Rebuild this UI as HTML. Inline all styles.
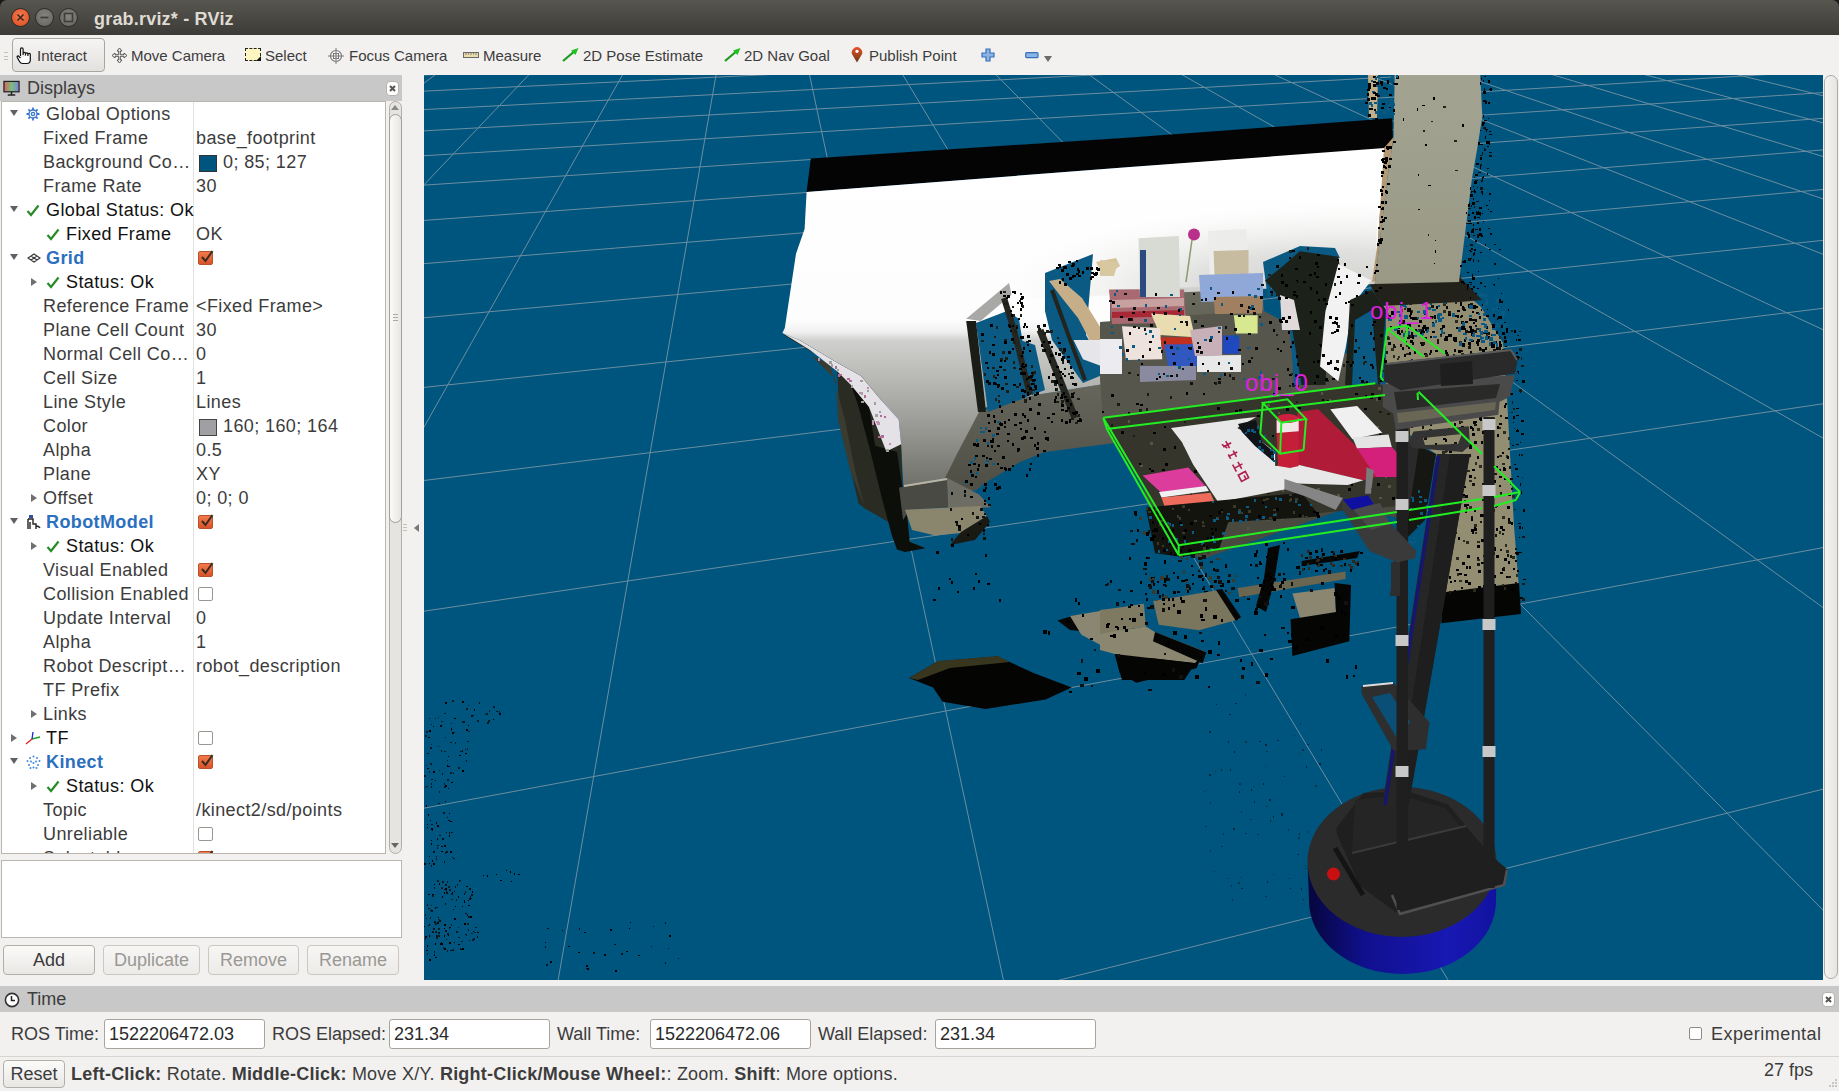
<!DOCTYPE html>
<html><head><meta charset="utf-8">
<style>
*{margin:0;padding:0;box-sizing:border-box}
html,body{width:1839px;height:1091px;overflow:hidden;background:#f2f1f0;font-family:"Liberation Sans",sans-serif;color:#3c3c3c}
.a{position:absolute}
#title{left:0;top:0;width:1839px;height:35px;background:linear-gradient(#57564f,#3c3b37);border-radius:7px 7px 0 0}
#title .t{left:94px;top:9px;font-size:18px;font-weight:bold;color:#dfdbd2;letter-spacing:0.2px;white-space:nowrap}
.wb{width:19px;height:19px;border-radius:50%;top:8px}
#tb{left:0;top:35px;width:1839px;height:40px;background:#f2f1f0}
.ti{font-size:15px;top:12px;white-space:nowrap;color:#3c3c3c}
#dockhdr{left:0;top:75px;width:402px;height:26px;background:#c8c8c8}
#tree{left:1px;top:101px;width:385px;height:753px;background:#fff;border:1px solid #b9b6b0;border-right:1px solid #b9b6b0;overflow:hidden}
.r{position:absolute;left:0;width:385px;height:24px;font-size:18px;line-height:24px;white-space:nowrap;letter-spacing:0.4px}
.r .l{position:absolute;left:41px}
.r .v{position:absolute;left:194px}
.r .l2{position:absolute;left:64px}
.bb{font-weight:bold;color:#2b6fc0}
.k{color:#111}
.ck{position:absolute;color:#2a8a2a;font-size:17px}
.cb{position:absolute;left:196px;top:5px;width:15px;height:14px;border:1px solid #9a9690;border-radius:2px;background:#fff}
.cb.on{background:linear-gradient(#f07a4a,#d9542a);border-color:#b9502c}
.exd{position:absolute;width:0;height:0;border-left:4px solid transparent;border-right:4px solid transparent;border-top:6px solid #606060;top:8px}
.exr{position:absolute;width:0;height:0;border-top:4px solid transparent;border-bottom:4px solid transparent;border-left:6px solid #707070;top:8px}
.sw{position:absolute;left:197px;top:5px;width:18px;height:17px;border:1px solid #333}
#coldiv{left:191px;top:0;width:1px;height:753px;background:#e4e2de}
#sb{left:389px;top:101px;width:13px;height:753px;border:1px solid #b2aea8;border-radius:7px;background:#e6e4e0}
#sbh{left:389px;top:114px;width:13px;height:409px;border:1px solid #a29e98;border-radius:7px;background:linear-gradient(90deg,#fbfbfa,#e8e6e3)}
#desc{left:1px;top:860px;width:401px;height:78px;background:#fff;border:1px solid #b9b6b0}
.btn{position:absolute;height:30px;border:1px solid #b3afa8;border-radius:4px;background:linear-gradient(#fbfbfa,#e9e7e4);font-size:18px;text-align:center;line-height:28px;color:#3c3c3c}
.btn.dis{color:#9a9894;border-color:#cbc8c2;background:linear-gradient(#f7f6f5,#ecebe8)}
#view{left:424px;top:75px;width:1399px;height:905px;background:#00557f;overflow:hidden}
#timehdr{left:0;top:986px;width:1839px;height:26px;background:#c8c8c8}
.inp{position:absolute;top:1019px;height:30px;background:#fff;border:1px solid #a8a49e;border-radius:3px;font-size:18px;line-height:28px;padding-left:4px;color:#2a2a2a}
.lab{position:absolute;top:1022px;font-size:18px;line-height:24px;white-space:nowrap;color:#3c3c3c}
#status{left:71px;top:1062px;font-size:18px;line-height:24px;white-space:nowrap;color:#3c3c3c;letter-spacing:0.23px}
</style></head><body>
<div class="a" style="left:0;top:0;width:1839px;height:10px;background:#1a1a18"></div><div id="title" class="a">
  <div class="a wb" style="left:10.5px;background:radial-gradient(circle at 50% 40%,#f47a50,#df4a1c);border:1px solid #2d2c29"><svg width="19" height="19" style="position:absolute;left:-1px;top:-1px"><path d="M6.5 6.5 L12.5 12.5 M12.5 6.5 L6.5 12.5" stroke="#3a2a22" stroke-width="1.6"/></svg></div>
  <div class="a wb" style="left:34.5px;background:radial-gradient(circle at 50% 40%,#85847f,#64635e);border:1px solid #2d2c29"><svg width="19" height="19" style="position:absolute;left:-1px;top:-1px"><path d="M5.5 9.5 L13.5 9.5" stroke="#3f3e3a" stroke-width="1.8"/></svg></div>
  <div class="a wb" style="left:58.5px;background:radial-gradient(circle at 50% 40%,#85847f,#64635e);border:1px solid #2d2c29"><svg width="19" height="19" style="position:absolute;left:-1px;top:-1px"><rect x="5.5" y="5.5" width="8" height="8" fill="none" stroke="#3f3e3a" stroke-width="1.6"/></svg></div>
  <div class="a t">grab.rviz* - RViz</div>
</div>
<div id="tb" class="a">
  <div class="a" style="left:4px;top:17px;width:4px;height:8px;border-top:1px solid #c4c1bb;border-bottom:1px solid #c4c1bb"><div style="margin-top:3px;height:1px;background:#c4c1bb"></div></div>
  <div class="a" style="left:12px;top:3px;width:93px;height:34px;border:1px solid #aaa69f;border-radius:4px;background:linear-gradient(#f6f5f4,#e3e1de)"></div>
  <svg class="a" style="left:16px;top:12px" width="18" height="18" viewBox="0 0 18 18"><path d="M4.5 9 V2.2 a1.3 1.3 0 0 1 2.6 0 V8 M7.1 6.5 a1.2 1.2 0 0 1 2.4 0 V8.5 M9.5 7 a1.2 1.2 0 0 1 2.4 0 V9 M11.9 7.6 a1.2 1.2 0 0 1 2.4 0 V13 q0 3.5 -3.5 3.5 H6.5 q-2 0 -3 -2 L1.3 10.5 q-.6-1.4.9-1.6 L4.5 11" fill="#fff" stroke="#111" stroke-width="1.2"/></svg>
  <div class="a ti" style="left:37px">Interact</div>
  <svg class="a" style="left:111px;top:12px" width="17" height="17" viewBox="0 0 17 17"><path d="M8.5 1 L11 4 H9.3 V7.7 H13 V6 L16 8.5 L13 11 V9.3 H9.3 V13 H11 L8.5 16 L6 13 H7.7 V9.3 H4 V11 L1 8.5 L4 6 V7.7 H7.7 V4 H6 Z" fill="#f2f2f2" stroke="#555" stroke-width="1"/></svg>
  <div class="a ti" style="left:131px">Move Camera</div>
  <div class="a" style="left:245px;top:13px;width:16px;height:13px;background:#fdf6c0;border:1px dashed #222"></div>
  <div class="a" style="left:256px;top:21px;width:0;height:0;border-left:5px solid transparent;border-bottom:5px solid #111"></div>
  <div class="a ti" style="left:265px">Select</div>
  <svg class="a" style="left:327px;top:12px" width="18" height="18" viewBox="0 0 18 18"><circle cx="9" cy="9" r="5.5" fill="#f4f4f4" stroke="#7a7a7a" stroke-width="1.2"/><path d="M9 1 V17 M1 9 H17 M6 6.5 H12 M6 11.5 H12 M6.5 6 V12 M11.5 6 V12" stroke="#7a7a7a" stroke-width="1"/></svg>
  <div class="a ti" style="left:349px">Focus Camera</div>
  <svg class="a" style="left:463px;top:16px" width="17" height="8" viewBox="0 0 17 8"><rect x="0.5" y="1.5" width="15" height="5" fill="#eadcaa" stroke="#6a6a6a"/><path d="M3 2 V4 M5.5 2 V3.5 M8 2 V4 M10.5 2 V3.5 M13 2 V4" stroke="#6a6a6a" stroke-width="0.8"/></svg>
  <div class="a ti" style="left:483px">Measure</div>
  <svg class="a" style="left:562px;top:12px" width="18" height="15" viewBox="0 0 18 15"><path d="M1 14 L14 3" stroke="#1a9a1a" stroke-width="2.2"/><path d="M16.5 1 L9 3.5 L13.5 8 Z" fill="#22c022"/></svg>
  <div class="a ti" style="left:583px">2D Pose Estimate</div>
  <svg class="a" style="left:724px;top:12px" width="18" height="15" viewBox="0 0 18 15"><path d="M1 14 L14 3" stroke="#1a9a1a" stroke-width="2.2"/><path d="M16.5 1 L9 3.5 L13.5 8 Z" fill="#22c022"/></svg>
  <div class="a ti" style="left:744px">2D Nav Goal</div>
  <svg class="a" style="left:851px;top:11px" width="12" height="17" viewBox="0 0 12 17"><defs><linearGradient id="pg" x1="0" y1="0" x2="0" y2="1"><stop offset="0" stop-color="#e8502a"/><stop offset="1" stop-color="#6a3a10"/></linearGradient></defs><path d="M6 16.5 L1.5 9 A5.2 5.2 0 1 1 10.5 9 Z" fill="url(#pg)"/><circle cx="6" cy="5.3" r="1.6" fill="#fff"/></svg>
  <div class="a ti" style="left:869px">Publish Point</div>
  <svg class="a" style="left:981px;top:13px" width="14" height="14" viewBox="0 0 14 14"><path d="M5 1 H9 V5 H13 V9 H9 V13 H5 V9 H1 V5 H5 Z" fill="#8ab4e8" stroke="#3a6fb8" stroke-width="1.2"/></svg>
  <svg class="a" style="left:1025px;top:17px" width="14" height="7" viewBox="0 0 14 7"><rect x="0.7" y="0.7" width="12.3" height="5" rx="1" fill="#8ab4e8" stroke="#3a6fb8" stroke-width="1.2"/></svg>
  <div class="a" style="left:1044px;top:21px;width:0;height:0;border-left:4px solid transparent;border-right:4px solid transparent;border-top:6px solid #6b6b6b"></div>
</div>
<div id="dockhdr" class="a">
  <svg class="a" style="left:3px;top:5px" width="17" height="17" viewBox="0 0 18 17"><defs><linearGradient id="mon" x1="0" y1="0" x2="1" y2="0"><stop offset="0" stop-color="#d86060"/><stop offset=".5" stop-color="#7ac07a"/><stop offset="1" stop-color="#8080e0"/></linearGradient></defs><rect x="1" y="1" width="16" height="11" fill="url(#mon)" stroke="#222" stroke-width="1.3"/><path d="M9 12 V15 M5 15.5 H13" stroke="#222" stroke-width="1.6"/></svg>
  <div class="a" style="left:27px;top:1px;font-size:18px;line-height:24px;color:#3c3c3c">Displays</div>
  <div class="a" style="left:386px;top:6px;width:13px;height:15px;background:#fff;border:1px solid #b7b2aa;border-radius:4px"><svg width="11" height="13" style="position:absolute;left:0;top:0"><path d="M3 4 L8 9 M8 4 L3 9" stroke="#555" stroke-width="2"/></svg></div>
</div>
<div id="tree" class="a">
<div id="coldiv" class="a"></div><div class="r" style="top:0px"><div class="exd" style="left:8px"></div><svg width="14" height="14" viewBox="0 0 14 14" style="position:absolute;left:24px;top:5px"><g fill="none" stroke="#3d78d0" stroke-width="1.4"><circle cx="7" cy="7" r="4"/><circle cx="7" cy="7" r="1.6"/></g><g stroke="#3d78d0" stroke-width="1.8"><path d="M7 0.5V3M7 11V13.5M0.5 7H3M11 7H13.5M2.4 2.4L4.1 4.1M9.9 9.9L11.6 11.6M2.4 11.6L4.1 9.9M9.9 4.1L11.6 2.4"/></g></svg><span class="l" style="left:44px">Global Options</span></div><div class="r" style="top:24px"><span class="l">Fixed Frame</span><span class="v">base_footprint</span></div><div class="r" style="top:48px"><span class="l">Background Co…</span><div class="sw" style="background:#00557f"></div><span class="v" style="left:221px">0; 85; 127</span></div><div class="r" style="top:72px"><span class="l">Frame Rate</span><span class="v">30</span></div><div class="r" style="top:96px"><div class="exd" style="left:8px"></div><svg class="ck2" width="14" height="13" viewBox="0 0 14 13" style="position:absolute;left:24px;top:6px"><path d="M1.5 7 L5 11 L12.5 1.5" stroke="#2a8a2a" stroke-width="2.2" fill="none"/></svg><span class="l k" style="left:44px">Global Status: Ok</span></div><div class="r" style="top:120px"><svg class="ck2" width="14" height="13" viewBox="0 0 14 13" style="position:absolute;left:44px;top:6px"><path d="M1.5 7 L5 11 L12.5 1.5" stroke="#2a8a2a" stroke-width="2.2" fill="none"/></svg><span class="l2 k">Fixed Frame</span><span class="v">OK</span></div><div class="r" style="top:144px"><div class="exd" style="left:8px"></div><svg width="14" height="10" viewBox="0 0 14 10" style="position:absolute;left:25px;top:7px"><path d="M7 1 L13 5 L7 9 L1 5 Z M4 3 L10 7 M10 3 L4 7" stroke="#333" stroke-width="1.1" fill="none"/></svg><span class="l bb" style="left:44px">Grid</span><div class="cb on"><svg width="15" height="14" style="position:absolute;left:0;top:-3px"><path d="M3 8 L6.5 12 L13.5 2" stroke="#3a2a20" stroke-width="2" fill="none"/></svg></div></div><div class="r" style="top:168px"><div class="exr" style="left:29px"></div><svg class="ck2" width="14" height="13" viewBox="0 0 14 13" style="position:absolute;left:44px;top:6px"><path d="M1.5 7 L5 11 L12.5 1.5" stroke="#2a8a2a" stroke-width="2.2" fill="none"/></svg><span class="l2 k">Status: Ok</span></div><div class="r" style="top:192px"><span class="l">Reference Frame</span><span class="v">&lt;Fixed Frame&gt;</span></div><div class="r" style="top:216px"><span class="l">Plane Cell Count</span><span class="v">30</span></div><div class="r" style="top:240px"><span class="l">Normal Cell Co…</span><span class="v">0</span></div><div class="r" style="top:264px"><span class="l">Cell Size</span><span class="v">1</span></div><div class="r" style="top:288px"><span class="l">Line Style</span><span class="v">Lines</span></div><div class="r" style="top:312px"><span class="l">Color</span><div class="sw" style="background:#a0a0a4;border-color:#444"></div><span class="v" style="left:221px">160; 160; 164</span></div><div class="r" style="top:336px"><span class="l">Alpha</span><span class="v">0.5</span></div><div class="r" style="top:360px"><span class="l">Plane</span><span class="v">XY</span></div><div class="r" style="top:384px"><div class="exr" style="left:29px"></div><span class="l">Offset</span><span class="v">0; 0; 0</span></div><div class="r" style="top:408px"><div class="exd" style="left:8px"></div><svg width="16" height="16" viewBox="0 0 16 16" style="position:absolute;left:23px;top:4px"><rect x="4" y="1" width="4" height="3" fill="#3050a0"/><path d="M3 5 H8 V10 H11 V15 M3 5 V15 M5 8 V15 M11 12 q3 0 4 2" stroke="#222" stroke-width="1.4" fill="none"/></svg><span class="l bb" style="left:44px">RobotModel</span><div class="cb on"><svg width="15" height="14" style="position:absolute;left:0;top:-3px"><path d="M3 8 L6.5 12 L13.5 2" stroke="#3a2a20" stroke-width="2" fill="none"/></svg></div></div><div class="r" style="top:432px"><div class="exr" style="left:29px"></div><svg class="ck2" width="14" height="13" viewBox="0 0 14 13" style="position:absolute;left:44px;top:6px"><path d="M1.5 7 L5 11 L12.5 1.5" stroke="#2a8a2a" stroke-width="2.2" fill="none"/></svg><span class="l2 k">Status: Ok</span></div><div class="r" style="top:456px"><span class="l">Visual Enabled</span><div class="cb on"><svg width="15" height="14" style="position:absolute;left:0;top:-3px"><path d="M3 8 L6.5 12 L13.5 2" stroke="#3a2a20" stroke-width="2" fill="none"/></svg></div></div><div class="r" style="top:480px"><span class="l">Collision Enabled</span><div class="cb"></div></div><div class="r" style="top:504px"><span class="l">Update Interval</span><span class="v">0</span></div><div class="r" style="top:528px"><span class="l">Alpha</span><span class="v">1</span></div><div class="r" style="top:552px"><span class="l">Robot Descript…</span><span class="v">robot_description</span></div><div class="r" style="top:576px"><span class="l">TF Prefix</span><span class="v"></span></div><div class="r" style="top:600px"><div class="exr" style="left:29px"></div><span class="l">Links</span></div><div class="r" style="top:624px"><div class="exr" style="left:9px"></div><svg width="16" height="14" viewBox="0 0 16 14" style="position:absolute;left:23px;top:5px"><path d="M7 8 L1 13" stroke="#e02020" stroke-width="1.3"/><path d="M7 8 L15 6" stroke="#20a020" stroke-width="1.3"/><path d="M7 8 L8 1" stroke="#2020e0" stroke-width="1.3"/></svg><span class="l k" style="left:44px">TF</span><div class="cb"></div></div><div class="r" style="top:648px"><div class="exd" style="left:8px"></div><svg width="15" height="15" viewBox="0 0 15 15" style="position:absolute;left:24px;top:5px"><g fill="#3d8ae0"><circle cx="7.5" cy="1.5" r="1"/><circle cx="4" cy="3" r="1"/><circle cx="11" cy="3" r="1"/><circle cx="1.5" cy="6" r="1"/><circle cx="13.5" cy="6" r="1"/><circle cx="5" cy="6.5" r="1"/><circle cx="10" cy="6.5" r="1"/><circle cx="7.5" cy="8" r="1"/><circle cx="3" cy="10" r="1"/><circle cx="12" cy="10" r="1"/><circle cx="7.5" cy="12.5" r="1"/><circle cx="4.5" cy="13" r="1"/><circle cx="10.5" cy="13" r="1"/></g></svg><span class="l bb" style="left:44px">Kinect</span><div class="cb on"><svg width="15" height="14" style="position:absolute;left:0;top:-3px"><path d="M3 8 L6.5 12 L13.5 2" stroke="#3a2a20" stroke-width="2" fill="none"/></svg></div></div><div class="r" style="top:672px"><div class="exr" style="left:29px"></div><svg class="ck2" width="14" height="13" viewBox="0 0 14 13" style="position:absolute;left:44px;top:6px"><path d="M1.5 7 L5 11 L12.5 1.5" stroke="#2a8a2a" stroke-width="2.2" fill="none"/></svg><span class="l2 k">Status: Ok</span></div><div class="r" style="top:696px"><span class="l">Topic</span><span class="v">/kinect2/sd/points</span></div><div class="r" style="top:720px"><span class="l">Unreliable</span><div class="cb"></div></div><div class="r" style="top:744px"><span class="l">Selectable</span><div class="cb on"><svg width="15" height="14" style="position:absolute;left:0;top:-3px"><path d="M3 8 L6.5 12 L13.5 2" stroke="#3a2a20" stroke-width="2" fill="none"/></svg></div></div>
</div>
<div id="sb" class="a"></div>
<div id="sbh" class="a"><div style="position:absolute;left:3px;top:199px;width:5px;height:7px;border-top:1px solid #aaa;border-bottom:1px solid #aaa"><div style="margin-top:2px;height:1px;background:#aaa"></div></div></div>
<div class="a" style="left:391px;top:105px;width:0;height:0;border-left:4px solid transparent;border-right:4px solid transparent;border-bottom:5px solid #8a8a8a"></div>
<div class="a" style="left:391px;top:843px;width:0;height:0;border-left:4px solid transparent;border-right:4px solid transparent;border-top:5px solid #666"></div>
<div class="a" style="left:413.5px;top:523.5px;width:0;height:0;border-top:4px solid transparent;border-bottom:4px solid transparent;border-right:5.5px solid #777"></div><div class="a" style="left:403px;top:524px;width:4px;height:7px;border-top:1px solid #c4c0ba;border-bottom:1px solid #c4c0ba"><div style="margin-top:2px;height:1px;background:#c4c0ba"></div></div>
<div class="a" style="left:1829px;top:523px;width:0;height:0;border-top:4px solid transparent;border-bottom:4px solid transparent;border-left:6px solid #777"></div>
<div id="desc" class="a"></div>
<div class="btn" style="left:3px;top:945px;width:92px;color:#3a3a3a">Add</div>
<div class="btn dis" style="left:103px;top:945px;width:97px">Duplicate</div>
<div class="btn dis" style="left:208px;top:945px;width:91px">Remove</div>
<div class="btn dis" style="left:307px;top:945px;width:92px">Rename</div>
<div id="view" class="a">
<svg width="1399" height="905" viewBox="0 0 1399 905" style="position:absolute;left:0;top:0">
<g stroke="#9aa6ae" stroke-width="1" fill="none" opacity="0.7"><line x1="-1002.2" y1="13.0" x2="-2420.0" y2="282.0"/><line x1="-878.0" y1="8.0" x2="-2419.7" y2="324.3"/><line x1="-758.7" y1="3.3" x2="-2419.4" y2="373.9"/><line x1="-644.1" y1="-1.3" x2="-2419.0" y2="433.0"/><line x1="-533.7" y1="-5.7" x2="-2418.4" y2="504.6"/><line x1="-427.5" y1="-9.9" x2="-2417.8" y2="593.2"/><line x1="-325.1" y1="-13.9" x2="-2417.0" y2="705.4"/><line x1="-226.4" y1="-17.9" x2="-2416.0" y2="852.3"/><line x1="-131.2" y1="-21.7" x2="-2414.5" y2="1053.0"/><line x1="-39.2" y1="-25.3" x2="-2412.4" y2="1343.5"/><line x1="49.6" y1="-28.8" x2="-2409.1" y2="1801.6"/><line x1="135.4" y1="-32.3" x2="-2403.2" y2="2631.0"/><line x1="218.5" y1="-35.6" x2="-1429.1" y2="2887.8"/><line x1="298.8" y1="-38.7" x2="-217.9" y2="2922.7"/><line x1="376.6" y1="-41.8" x2="1010.2" y2="2916.2"/><line x1="451.9" y1="-44.8" x2="2231.7" y2="2909.8"/><line x1="525.0" y1="-47.7" x2="3446.9" y2="2903.4"/><line x1="595.8" y1="-50.6" x2="3560.5" y2="2101.9"/><line x1="664.5" y1="-53.3" x2="3552.9" y2="1584.0"/><line x1="731.1" y1="-55.9" x2="3568.1" y2="1263.3"/><line x1="795.9" y1="-58.5" x2="3561.7" y2="1031.9"/><line x1="858.8" y1="-61.0" x2="3571.7" y2="867.5"/><line x1="919.9" y1="-63.4" x2="3566.3" y2="736.9"/><line x1="979.3" y1="-65.8" x2="3573.8" y2="637.1"/><line x1="1037.0" y1="-68.1" x2="3569.3" y2="553.3"/><line x1="1093.2" y1="-70.3" x2="3575.2" y2="486.3"/><line x1="1148.0" y1="-72.5" x2="3571.3" y2="428.0"/><line x1="1201.2" y1="-74.6" x2="3567.9" y2="378.3"/><line x1="1253.1" y1="-76.7" x2="3572.7" y2="337.0"/><line x1="1303.6" y1="-78.7" x2="3569.7" y2="299.7"/><line x1="1352.9" y1="-80.6" x2="3573.8" y2="268.0"/><line x1="-1002.2" y1="13.0" x2="1352.9" y2="-80.6"/><line x1="-1104.4" y1="32.4" x2="1399.8" y2="-73.3"/><line x1="-1223.5" y1="55.0" x2="1451.3" y2="-65.2"/><line x1="-1364.2" y1="81.7" x2="1508.0" y2="-56.3"/><line x1="-1532.8" y1="113.7" x2="1570.7" y2="-46.5"/><line x1="-1738.6" y1="152.7" x2="1640.5" y2="-35.5"/><line x1="-1995.3" y1="201.4" x2="1718.7" y2="-23.2"/><line x1="-2324.6" y1="263.9" x2="1806.8" y2="-9.4"/><line x1="-2421.4" y1="322.1" x2="1906.9" y2="6.3"/><line x1="-2420.3" y1="385.4" x2="2021.6" y2="24.3"/><line x1="-2418.9" y1="464.6" x2="2154.4" y2="45.2"/><line x1="-2417.1" y1="566.5" x2="2309.8" y2="69.6"/><line x1="-2423.5" y1="703.8" x2="2494.2" y2="98.5"/><line x1="-2421.9" y1="895.3" x2="2716.6" y2="133.4"/><line x1="-2419.5" y1="1183.8" x2="2990.0" y2="176.3"/><line x1="-2415.6" y1="1667.7" x2="3334.4" y2="230.4"/><line x1="-2407.6" y1="2647.5" x2="3575.8" y2="378.5"/><line x1="1152.6" y1="2921.6" x2="3573.9" y2="1029.0"/></g>
<g transform="translate(-424,-75)"><defs>
<linearGradient id="gwhite" gradientUnits="userSpaceOnUse" x1="0" y1="150" x2="0" y2="490"><stop offset="0" stop-color="#ffffff"/><stop offset=".5" stop-color="#fdfdfd"/><stop offset=".535" stop-color="#f0f0f0"/><stop offset=".56" stop-color="#d0d0ce"/><stop offset=".8" stop-color="#9c9c98"/><stop offset="1" stop-color="#6e6e68"/></linearGradient><radialGradient id="gwr" gradientUnits="userSpaceOnUse" cx="1340" cy="290" r="330" gradientTransform="translate(1340,290) scale(1,0.26) translate(-1340,-290)"><stop offset="0" stop-color="#d2d2ce" stop-opacity="1"/><stop offset=".45" stop-color="#dcdcda" stop-opacity=".9"/><stop offset="1" stop-color="#f0f0ee" stop-opacity="0"/></radialGradient>
<linearGradient id="gblue" x1="0" y1="0" x2="1" y2="0"><stop offset="0" stop-color="#06063e"/><stop offset=".3" stop-color="#10108e"/><stop offset=".75" stop-color="#1818b4"/><stop offset="1" stop-color="#1212a0"/></linearGradient>
<linearGradient id="gdoor" x1="0" y1="0" x2="0" y2="1"><stop offset="0" stop-color="#a2a391"/><stop offset="1" stop-color="#999986"/></linearGradient>
<linearGradient id="gfloor" gradientUnits="userSpaceOnUse" x1="0" y1="380" x2="0" y2="480"><stop offset="0" stop-color="#68675d"/><stop offset="1" stop-color="#505046"/></linearGradient>
<linearGradient id="gtab" gradientUnits="userSpaceOnUse" x1="0" y1="300" x2="0" y2="400"><stop offset="0" stop-color="#6a695e"/><stop offset="1" stop-color="#4a4940"/></linearGradient>
</defs><polygon points="1372.0,284.0 1455.0,284.0 1481.0,307.0 1503.0,343.0 1507.0,398.0 1510.0,453.0 1514.0,526.0 1519.0,589.0 1441.0,594.0 1436.0,454.0 1415.0,440.0 1395.0,420.0 1380.0,380.0" fill="#938e72" /><polygon points="1441.4,592.4 1519.0,583.0 1521.0,614.0 1441.4,623.3" fill="#050504" /><rect x="1420" y="331" width="2" height="2" fill="#000"/><rect x="1426" y="302" width="2" height="2" fill="#000"/><rect x="1436" y="306" width="2" height="3" fill="#000"/><rect x="1415" y="329" width="2" height="3" fill="#000"/><rect x="1400" y="314" width="2" height="2" fill="#000"/><rect x="1445" y="449" width="3" height="3" fill="#2a2a1e"/><rect x="1425" y="361" width="2" height="2" fill="#000"/><rect x="1456" y="447" width="3" height="3" fill="#15150e"/><rect x="1462" y="307" width="3" height="2" fill="#15150e"/><rect x="1484" y="462" width="3" height="3" fill="#15150e"/><rect x="1459" y="464" width="3" height="2" fill="#000"/><rect x="1470" y="303" width="3" height="3" fill="#15150e"/><rect x="1477" y="559" width="3" height="2" fill="#2a2a1e"/><rect x="1445" y="352" width="3" height="2" fill="#000"/><rect x="1445" y="336" width="3" height="3" fill="#000"/><rect x="1492" y="552" width="3" height="3" fill="#15150e"/><rect x="1472" y="402" width="2" height="2" fill="#000"/><rect x="1398" y="356" width="2" height="2" fill="#2a2a1e"/><rect x="1494" y="341" width="3" height="2" fill="#000"/><rect x="1434" y="398" width="3" height="2" fill="#000"/><rect x="1512" y="495" width="3" height="3" fill="#2a2a1e"/><rect x="1430" y="433" width="3" height="2" fill="#000"/><rect x="1382" y="349" width="2" height="2" fill="#15150e"/><rect x="1460" y="316" width="2" height="2" fill="#15150e"/><rect x="1462" y="306" width="2" height="3" fill="#000"/><rect x="1465" y="580" width="3" height="3" fill="#000"/><rect x="1418" y="329" width="3" height="3" fill="#2a2a1e"/><rect x="1494" y="334" width="2" height="2" fill="#15150e"/><rect x="1516" y="552" width="3" height="3" fill="#000"/><rect x="1424" y="353" width="3" height="2" fill="#000"/><rect x="1490" y="538" width="2" height="2" fill="#2a2a1e"/><rect x="1424" y="293" width="2" height="3" fill="#2a2a1e"/><rect x="1404" y="354" width="2" height="3" fill="#000"/><rect x="1443" y="589" width="2" height="3" fill="#15150e"/><rect x="1469" y="566" width="2" height="3" fill="#000"/><rect x="1478" y="428" width="2" height="2" fill="#000"/><rect x="1459" y="428" width="2" height="3" fill="#15150e"/><rect x="1479" y="316" width="2" height="3" fill="#000"/><rect x="1493" y="349" width="3" height="2" fill="#15150e"/><rect x="1446" y="521" width="3" height="3" fill="#2a2a1e"/><rect x="1481" y="562" width="3" height="2" fill="#000"/><rect x="1449" y="290" width="3" height="2" fill="#000"/><rect x="1486" y="330" width="2" height="3" fill="#000"/><rect x="1454" y="385" width="3" height="2" fill="#000"/><rect x="1409" y="370" width="2" height="3" fill="#000"/><rect x="1484" y="567" width="3" height="3" fill="#000"/><rect x="1474" y="424" width="3" height="2" fill="#15150e"/><rect x="1508" y="561" width="2" height="3" fill="#000"/><rect x="1433" y="406" width="3" height="2" fill="#000"/><rect x="1435" y="350" width="3" height="2" fill="#000"/><rect x="1510" y="483" width="3" height="2" fill="#15150e"/><rect x="1502" y="584" width="2" height="2" fill="#2a2a1e"/><rect x="1470" y="353" width="3" height="3" fill="#15150e"/><rect x="1434" y="395" width="2" height="3" fill="#000"/><rect x="1422" y="426" width="2" height="3" fill="#15150e"/><rect x="1448" y="376" width="2" height="2" fill="#000"/><rect x="1411" y="296" width="2" height="3" fill="#000"/><rect x="1493" y="547" width="3" height="3" fill="#000"/><rect x="1451" y="444" width="3" height="3" fill="#000"/><rect x="1412" y="289" width="2" height="3" fill="#000"/><rect x="1461" y="353" width="3" height="2" fill="#2a2a1e"/><rect x="1463" y="297" width="2" height="2" fill="#000"/><rect x="1410" y="340" width="3" height="3" fill="#000"/><rect x="1415" y="439" width="2" height="3" fill="#15150e"/><rect x="1377" y="290" width="2" height="3" fill="#000"/><rect x="1492" y="418" width="3" height="3" fill="#15150e"/><rect x="1473" y="589" width="3" height="2" fill="#000"/><rect x="1431" y="392" width="2" height="2" fill="#000"/><rect x="1410" y="335" width="2" height="3" fill="#15150e"/><rect x="1460" y="499" width="2" height="3" fill="#000"/><rect x="1418" y="395" width="2" height="3" fill="#2a2a1e"/><rect x="1384" y="370" width="2" height="2" fill="#000"/><rect x="1430" y="377" width="2" height="2" fill="#000"/><rect x="1469" y="506" width="3" height="3" fill="#2a2a1e"/><rect x="1467" y="298" width="3" height="2" fill="#000"/><rect x="1493" y="465" width="2" height="2" fill="#000"/><rect x="1438" y="300" width="2" height="2" fill="#2a2a1e"/><rect x="1411" y="426" width="2" height="2" fill="#000"/><rect x="1482" y="431" width="2" height="3" fill="#000"/><rect x="1479" y="348" width="3" height="3" fill="#2a2a1e"/><rect x="1414" y="298" width="2" height="2" fill="#000"/><rect x="1474" y="477" width="2" height="2" fill="#2a2a1e"/><rect x="1381" y="367" width="2" height="2" fill="#2a2a1e"/><rect x="1440" y="429" width="2" height="2" fill="#15150e"/><rect x="1516" y="574" width="2" height="3" fill="#2a2a1e"/><rect x="1410" y="395" width="3" height="2" fill="#15150e"/><rect x="1443" y="292" width="2" height="3" fill="#2a2a1e"/><rect x="1433" y="401" width="2" height="3" fill="#000"/><rect x="1420" y="389" width="3" height="2" fill="#000"/><rect x="1477" y="563" width="3" height="3" fill="#15150e"/><rect x="1508" y="518" width="2" height="3" fill="#000"/><rect x="1465" y="330" width="3" height="3" fill="#15150e"/><rect x="1400" y="400" width="3" height="2" fill="#2a2a1e"/><rect x="1506" y="576" width="2" height="2" fill="#000"/><rect x="1462" y="327" width="3" height="3" fill="#000"/><rect x="1506" y="455" width="2" height="3" fill="#2a2a1e"/><rect x="1423" y="376" width="3" height="3" fill="#000"/><rect x="1430" y="336" width="2" height="2" fill="#000"/><rect x="1446" y="536" width="2" height="3" fill="#15150e"/><rect x="1393" y="344" width="2" height="2" fill="#15150e"/><rect x="1454" y="383" width="3" height="3" fill="#000"/><rect x="1502" y="516" width="3" height="3" fill="#2a2a1e"/><rect x="1482" y="349" width="3" height="3" fill="#000"/><rect x="1445" y="462" width="3" height="2" fill="#000"/><rect x="1435" y="381" width="2" height="2" fill="#000"/><rect x="1490" y="584" width="3" height="2" fill="#000"/><rect x="1493" y="549" width="3" height="2" fill="#000"/><rect x="1405" y="331" width="2" height="3" fill="#000"/><rect x="1453" y="296" width="2" height="2" fill="#000"/><rect x="1467" y="378" width="2" height="3" fill="#2a2a1e"/><rect x="1475" y="319" width="2" height="3" fill="#000"/><rect x="1429" y="353" width="2" height="2" fill="#15150e"/><rect x="1452" y="293" width="3" height="3" fill="#000"/><rect x="1471" y="414" width="3" height="2" fill="#2a2a1e"/><rect x="1481" y="441" width="2" height="3" fill="#000"/><rect x="1406" y="353" width="3" height="2" fill="#2a2a1e"/><rect x="1462" y="562" width="3" height="3" fill="#000"/><rect x="1430" y="350" width="2" height="3" fill="#000"/><rect x="1476" y="341" width="3" height="3" fill="#000"/><rect x="1420" y="342" width="3" height="2" fill="#15150e"/><rect x="1470" y="401" width="3" height="3" fill="#2a2a1e"/><rect x="1397" y="285" width="3" height="2" fill="#15150e"/><rect x="1454" y="519" width="3" height="3" fill="#15150e"/><rect x="1493" y="418" width="2" height="3" fill="#000"/><rect x="1400" y="397" width="3" height="2" fill="#2a2a1e"/><rect x="1432" y="400" width="3" height="2" fill="#000"/><rect x="1504" y="389" width="3" height="3" fill="#000"/><rect x="1419" y="369" width="2" height="2" fill="#000"/><rect x="1477" y="428" width="3" height="3" fill="#2a2a1e"/><rect x="1492" y="325" width="3" height="2" fill="#000"/><rect x="1490" y="513" width="2" height="2" fill="#15150e"/><rect x="1499" y="427" width="2" height="2" fill="#2a2a1e"/><rect x="1483" y="361" width="2" height="2" fill="#2a2a1e"/><rect x="1453" y="385" width="3" height="2" fill="#000"/><rect x="1411" y="310" width="2" height="3" fill="#2a2a1e"/><rect x="1517" y="585" width="2" height="2" fill="#000"/><rect x="1471" y="516" width="2" height="3" fill="#15150e"/><rect x="1413" y="367" width="3" height="3" fill="#000"/><rect x="1437" y="342" width="2" height="2" fill="#15150e"/><rect x="1502" y="463" width="3" height="2" fill="#2a2a1e"/><rect x="1409" y="360" width="2" height="2" fill="#2a2a1e"/><rect x="1442" y="538" width="3" height="3" fill="#000"/><rect x="1501" y="356" width="2" height="2" fill="#000"/><rect x="1499" y="423" width="3" height="2" fill="#000"/><rect x="1466" y="504" width="3" height="2" fill="#000"/><rect x="1426" y="328" width="2" height="3" fill="#000"/><rect x="1460" y="486" width="2" height="2" fill="#15150e"/><rect x="1432" y="399" width="3" height="2" fill="#000"/><rect x="1443" y="411" width="3" height="2" fill="#000"/><rect x="1468" y="407" width="3" height="3" fill="#15150e"/><rect x="1470" y="414" width="2" height="3" fill="#15150e"/><rect x="1433" y="290" width="3" height="2" fill="#2a2a1e"/><rect x="1479" y="347" width="2" height="3" fill="#000"/><rect x="1440" y="334" width="2" height="2" fill="#000"/><rect x="1466" y="566" width="2" height="3" fill="#000"/><rect x="1393" y="372" width="2" height="2" fill="#000"/><rect x="1488" y="533" width="3" height="2" fill="#000"/><rect x="1463" y="540" width="2" height="2" fill="#2a2a1e"/><rect x="1462" y="345" width="3" height="2" fill="#000"/><rect x="1395" y="395" width="2" height="2" fill="#000"/><rect x="1460" y="455" width="3" height="3" fill="#15150e"/><rect x="1458" y="416" width="3" height="3" fill="#2a2a1e"/><rect x="1398" y="285" width="3" height="3" fill="#000"/><rect x="1438" y="476" width="3" height="2" fill="#2a2a1e"/><rect x="1431" y="305" width="3" height="3" fill="#15150e"/><rect x="1447" y="297" width="2" height="2" fill="#15150e"/><rect x="1486" y="443" width="2" height="3" fill="#000"/><rect x="1376" y="305" width="2" height="2" fill="#000"/><rect x="1513" y="568" width="2" height="2" fill="#000"/><rect x="1494" y="473" width="3" height="2" fill="#15150e"/><rect x="1504" y="369" width="3" height="2" fill="#15150e"/><rect x="1446" y="569" width="2" height="3" fill="#000"/><rect x="1419" y="295" width="2" height="3" fill="#000"/><rect x="1466" y="370" width="3" height="3" fill="#000"/><rect x="1488" y="366" width="2" height="3" fill="#2a2a1e"/><rect x="1454" y="464" width="2" height="3" fill="#2a2a1e"/><rect x="1480" y="399" width="3" height="3" fill="#000"/><rect x="1437" y="339" width="2" height="3" fill="#15150e"/><rect x="1500" y="572" width="3" height="2" fill="#000"/><rect x="1405" y="374" width="3" height="3" fill="#15150e"/><rect x="1375" y="285" width="3" height="3" fill="#000"/><rect x="1449" y="450" width="3" height="3" fill="#000"/><rect x="1442" y="326" width="2" height="2" fill="#2a2a1e"/><rect x="1500" y="526" width="3" height="3" fill="#000"/><rect x="1503" y="468" width="3" height="3" fill="#000"/><rect x="1396" y="284" width="2" height="2" fill="#2a2a1e"/><rect x="1399" y="333" width="2" height="2" fill="#000"/><rect x="1393" y="346" width="3" height="2" fill="#15150e"/><rect x="1442" y="451" width="3" height="3" fill="#2a2a1e"/><rect x="1508" y="576" width="3" height="2" fill="#15150e"/><rect x="1465" y="495" width="3" height="3" fill="#000"/><rect x="1496" y="347" width="2" height="3" fill="#000"/><rect x="1501" y="386" width="2" height="3" fill="#2a2a1e"/><rect x="1441" y="448" width="2" height="2" fill="#2a2a1e"/><rect x="1502" y="529" width="3" height="2" fill="#000"/><rect x="1393" y="292" width="2" height="2" fill="#15150e"/><rect x="1377" y="327" width="2" height="2" fill="#000"/><rect x="1492" y="560" width="2" height="3" fill="#000"/><rect x="1408" y="347" width="2" height="2" fill="#000"/><rect x="1493" y="480" width="3" height="3" fill="#000"/><rect x="1467" y="375" width="3" height="3" fill="#15150e"/><rect x="1426" y="383" width="3" height="3" fill="#000"/><rect x="1448" y="314" width="3" height="2" fill="#000"/><rect x="1477" y="541" width="3" height="2" fill="#2a2a1e"/><rect x="1484" y="587" width="2" height="3" fill="#2a2a1e"/><rect x="1493" y="584" width="3" height="3" fill="#000"/><rect x="1414" y="351" width="2" height="3" fill="#000"/><rect x="1474" y="528" width="3" height="3" fill="#000"/><rect x="1431" y="406" width="2" height="3" fill="#000"/><rect x="1427" y="378" width="3" height="2" fill="#2a2a1e"/><rect x="1459" y="498" width="2" height="3" fill="#15150e"/><rect x="1449" y="553" width="3" height="3" fill="#000"/><rect x="1440" y="498" width="3" height="2" fill="#000"/><rect x="1474" y="441" width="3" height="3" fill="#000"/><rect x="1478" y="586" width="3" height="3" fill="#000"/><rect x="1469" y="345" width="2" height="2" fill="#15150e"/><rect x="1480" y="419" width="2" height="2" fill="#000"/><rect x="1440" y="288" width="3" height="2" fill="#15150e"/><rect x="1440" y="328" width="3" height="2" fill="#000"/><rect x="1505" y="417" width="3" height="2" fill="#000"/><rect x="1472" y="483" width="3" height="3" fill="#15150e"/><rect x="1504" y="359" width="3" height="2" fill="#15150e"/><rect x="1497" y="434" width="2" height="3" fill="#000"/><rect x="1503" y="386" width="2" height="3" fill="#2a2a1e"/><rect x="1409" y="352" width="2" height="3" fill="#000"/><rect x="1497" y="426" width="2" height="3" fill="#000"/><rect x="1466" y="541" width="3" height="3" fill="#2a2a1e"/><rect x="1424" y="302" width="3" height="3" fill="#2a2a1e"/><rect x="1381" y="307" width="3" height="3" fill="#15150e"/><rect x="1388" y="378" width="3" height="2" fill="#2a2a1e"/><rect x="1440" y="335" width="2" height="2" fill="#2a2a1e"/><rect x="1466" y="507" width="2" height="3" fill="#2a2a1e"/><rect x="1441" y="375" width="2" height="3" fill="#15150e"/><rect x="1487" y="355" width="3" height="3" fill="#2a2a1e"/><rect x="1472" y="433" width="3" height="3" fill="#000"/><rect x="1468" y="383" width="3" height="3" fill="#000"/><rect x="1469" y="396" width="3" height="3" fill="#000"/><rect x="1450" y="391" width="2" height="2" fill="#000"/><rect x="1409" y="315" width="2" height="2" fill="#000"/><rect x="1486" y="391" width="2" height="2" fill="#2a2a1e"/><rect x="1488" y="336" width="2" height="3" fill="#000"/><rect x="1445" y="350" width="2" height="3" fill="#000"/><rect x="1454" y="366" width="2" height="2" fill="#2a2a1e"/><rect x="1444" y="302" width="3" height="2" fill="#2a2a1e"/><rect x="1408" y="335" width="2" height="2" fill="#15150e"/><rect x="1441" y="458" width="3" height="3" fill="#15150e"/><rect x="1471" y="340" width="3" height="2" fill="#000"/><rect x="1462" y="496" width="3" height="2" fill="#2a2a1e"/><rect x="1443" y="562" width="2" height="2" fill="#2a2a1e"/><rect x="1464" y="389" width="3" height="3" fill="#2a2a1e"/><rect x="1486" y="456" width="2" height="3" fill="#2a2a1e"/><rect x="1422" y="362" width="2" height="3" fill="#15150e"/><rect x="1424" y="437" width="3" height="3" fill="#15150e"/><rect x="1488" y="387" width="3" height="3" fill="#000"/><rect x="1458" y="481" width="2" height="3" fill="#2a2a1e"/><rect x="1452" y="299" width="3" height="2" fill="#000"/><rect x="1442" y="521" width="2" height="3" fill="#000"/><rect x="1464" y="500" width="2" height="2" fill="#000"/><rect x="1470" y="426" width="2" height="2" fill="#000"/><rect x="1500" y="415" width="2" height="2" fill="#15150e"/><rect x="1499" y="341" width="2" height="3" fill="#000"/><rect x="1455" y="296" width="2" height="3" fill="#2a2a1e"/><rect x="1438" y="288" width="3" height="2" fill="#2a2a1e"/><rect x="1485" y="454" width="2" height="3" fill="#000"/><rect x="1504" y="478" width="3" height="2" fill="#000"/><rect x="1473" y="322" width="2" height="2" fill="#000"/><rect x="1391" y="290" width="2" height="3" fill="#000"/><rect x="1482" y="499" width="2" height="2" fill="#15150e"/><rect x="1464" y="504" width="3" height="3" fill="#000"/><rect x="1443" y="303" width="3" height="3" fill="#2a2a1e"/><rect x="1472" y="329" width="2" height="3" fill="#000"/><rect x="1465" y="414" width="3" height="3" fill="#15150e"/><rect x="1487" y="460" width="3" height="3" fill="#000"/><rect x="1463" y="486" width="3" height="2" fill="#000"/><rect x="1460" y="380" width="3" height="2" fill="#2a2a1e"/><rect x="1429" y="401" width="2" height="3" fill="#15150e"/><rect x="1473" y="384" width="3" height="3" fill="#000"/><rect x="1458" y="537" width="2" height="3" fill="#000"/><rect x="1491" y="553" width="2" height="3" fill="#2a2a1e"/><rect x="1423" y="310" width="3" height="3" fill="#000"/><rect x="1488" y="508" width="2" height="3" fill="#000"/><rect x="1472" y="428" width="2" height="3" fill="#000"/><rect x="1488" y="427" width="2" height="3" fill="#000"/><rect x="1504" y="558" width="3" height="3" fill="#000"/><rect x="1400" y="344" width="2" height="3" fill="#15150e"/><rect x="1457" y="395" width="2" height="2" fill="#000"/><rect x="1508" y="437" width="2" height="3" fill="#2a2a1e"/><rect x="1488" y="332" width="2" height="3" fill="#15150e"/><rect x="1448" y="290" width="2" height="2" fill="#2a2a1e"/><rect x="1458" y="350" width="3" height="3" fill="#000"/><rect x="1511" y="522" width="2" height="3" fill="#000"/><rect x="1428" y="293" width="2" height="3" fill="#2a2a1e"/><rect x="1444" y="546" width="2" height="3" fill="#000"/><rect x="1476" y="312" width="3" height="2" fill="#000"/><rect x="1430" y="423" width="2" height="3" fill="#000"/><rect x="1505" y="544" width="2" height="3" fill="#2a2a1e"/><rect x="1380" y="329" width="2" height="2" fill="#15150e"/><rect x="1459" y="421" width="2" height="3" fill="#15150e"/><rect x="1427" y="405" width="3" height="3" fill="#2a2a1e"/><rect x="1397" y="358" width="2" height="2" fill="#2a2a1e"/><rect x="1477" y="344" width="2" height="2" fill="#000"/><rect x="1486" y="581" width="3" height="2" fill="#000"/><rect x="1438" y="389" width="2" height="3" fill="#000"/><rect x="1464" y="328" width="2" height="2" fill="#000"/><rect x="1477" y="456" width="2" height="3" fill="#000"/><rect x="1411" y="412" width="2" height="2" fill="#15150e"/><rect x="1456" y="376" width="2" height="3" fill="#2a2a1e"/><rect x="1443" y="332" width="2" height="2" fill="#2a2a1e"/><rect x="1483" y="585" width="3" height="3" fill="#000"/><rect x="1422" y="327" width="2" height="3" fill="#000"/><rect x="1425" y="297" width="3" height="2" fill="#15150e"/><rect x="1456" y="327" width="2" height="2" fill="#000"/><rect x="1401" y="309" width="2" height="3" fill="#15150e"/><rect x="1398" y="326" width="2" height="3" fill="#000"/><rect x="1448" y="545" width="2" height="3" fill="#15150e"/><rect x="1475" y="462" width="2" height="3" fill="#2a2a1e"/><rect x="1424" y="360" width="3" height="3" fill="#000"/><rect x="1415" y="317" width="3" height="3" fill="#000"/><rect x="1450" y="451" width="2" height="2" fill="#000"/><rect x="1405" y="341" width="2" height="3" fill="#15150e"/><rect x="1454" y="580" width="2" height="2" fill="#000"/><rect x="1466" y="428" width="2" height="3" fill="#000"/><rect x="1424" y="313" width="2" height="2" fill="#15150e"/><rect x="1446" y="371" width="2" height="2" fill="#2a2a1e"/><rect x="1502" y="452" width="2" height="2" fill="#000"/><rect x="1470" y="427" width="3" height="2" fill="#000"/><rect x="1449" y="407" width="2" height="3" fill="#15150e"/><rect x="1477" y="545" width="3" height="3" fill="#000"/><rect x="1420" y="329" width="3" height="2" fill="#2a2a1e"/><rect x="1388" y="342" width="3" height="3" fill="#000"/><rect x="1446" y="290" width="2" height="3" fill="#2a2a1e"/><rect x="1486" y="574" width="2" height="2" fill="#000"/><rect x="1499" y="476" width="3" height="2" fill="#000"/><rect x="1414" y="379" width="2" height="2" fill="#000"/><rect x="1459" y="580" width="3" height="2" fill="#2a2a1e"/><rect x="1459" y="573" width="3" height="2" fill="#000"/><rect x="1502" y="568" width="3" height="3" fill="#000"/><rect x="1480" y="514" width="3" height="3" fill="#000"/><rect x="1468" y="346" width="3" height="3" fill="#15150e"/><rect x="1462" y="429" width="3" height="2" fill="#000"/><rect x="1421" y="343" width="3" height="3" fill="#000"/><rect x="1420" y="368" width="2" height="3" fill="#000"/><rect x="1486" y="333" width="2" height="3" fill="#2a2a1e"/><rect x="1469" y="444" width="3" height="3" fill="#000"/><rect x="1449" y="591" width="2" height="3" fill="#15150e"/><rect x="1470" y="328" width="2" height="3" fill="#000"/><rect x="1481" y="514" width="3" height="3" fill="#000"/><rect x="1433" y="316" width="3" height="2" fill="#2a2a1e"/><rect x="1474" y="373" width="3" height="3" fill="#15150e"/><rect x="1429" y="384" width="3" height="3" fill="#2a2a1e"/><rect x="1490" y="419" width="3" height="2" fill="#000"/><rect x="1493" y="386" width="2" height="3" fill="#000"/><rect x="1515" y="560" width="2" height="2" fill="#000"/><rect x="1479" y="417" width="3" height="3" fill="#000"/><rect x="1459" y="393" width="2" height="2" fill="#000"/><rect x="1456" y="557" width="3" height="3" fill="#2a2a1e"/><rect x="1450" y="537" width="2" height="3" fill="#15150e"/><rect x="1426" y="307" width="3" height="2" fill="#000"/><rect x="1468" y="375" width="3" height="3" fill="#000"/><rect x="1449" y="537" width="2" height="2" fill="#2a2a1e"/><rect x="1461" y="393" width="2" height="3" fill="#000"/><rect x="1488" y="379" width="2" height="3" fill="#2a2a1e"/><rect x="1496" y="466" width="2" height="2" fill="#000"/><rect x="1445" y="456" width="3" height="2" fill="#000"/><rect x="1432" y="322" width="2" height="2" fill="#000"/><rect x="1387" y="337" width="3" height="3" fill="#2a2a1e"/><rect x="1424" y="337" width="3" height="2" fill="#000"/><rect x="1423" y="423" width="3" height="2" fill="#000"/><rect x="1404" y="407" width="2" height="3" fill="#000"/><rect x="1463" y="361" width="2" height="2" fill="#000"/><rect x="1492" y="378" width="3" height="3" fill="#000"/><rect x="1408" y="405" width="2" height="3" fill="#15150e"/><rect x="1385" y="337" width="3" height="2" fill="#000"/><rect x="1455" y="320" width="3" height="3" fill="#2a2a1e"/><rect x="1468" y="582" width="3" height="3" fill="#000"/><rect x="1429" y="429" width="3" height="2" fill="#2a2a1e"/><rect x="1422" y="332" width="2" height="2" fill="#000"/><rect x="1495" y="534" width="2" height="3" fill="#15150e"/><rect x="1404" y="410" width="2" height="3" fill="#2a2a1e"/><rect x="1446" y="354" width="3" height="2" fill="#15150e"/><rect x="1460" y="421" width="3" height="2" fill="#2a2a1e"/><rect x="1461" y="350" width="2" height="2" fill="#15150e"/><rect x="1480" y="521" width="2" height="2" fill="#15150e"/><rect x="1474" y="525" width="2" height="3" fill="#000"/><rect x="1469" y="318" width="3" height="3" fill="#000"/><rect x="1382" y="380" width="2" height="3" fill="#000"/><rect x="1492" y="408" width="3" height="3" fill="#2a2a1e"/><rect x="1486" y="558" width="2" height="3" fill="#000"/><rect x="1470" y="393" width="3" height="2" fill="#2a2a1e"/><rect x="1399" y="320" width="2" height="2" fill="#2a2a1e"/><rect x="1378" y="334" width="2" height="3" fill="#000"/><rect x="1428" y="296" width="3" height="2" fill="#000"/><rect x="1456" y="506" width="3" height="3" fill="#15150e"/><rect x="1484" y="487" width="2" height="2" fill="#000"/><rect x="1437" y="389" width="3" height="2" fill="#000"/><rect x="1435" y="443" width="2" height="3" fill="#000"/><rect x="1490" y="365" width="2" height="2" fill="#15150e"/><rect x="1409" y="302" width="3" height="3" fill="#2a2a1e"/><rect x="1444" y="434" width="2" height="2" fill="#2a2a1e"/><rect x="1475" y="325" width="2" height="2" fill="#15150e"/><rect x="1465" y="321" width="3" height="2" fill="#000"/><rect x="1460" y="427" width="3" height="2" fill="#000"/><rect x="1444" y="297" width="3" height="3" fill="#000"/><rect x="1388" y="380" width="2" height="2" fill="#15150e"/><rect x="1437" y="460" width="3" height="2" fill="#000"/><rect x="1482" y="387" width="3" height="2" fill="#2a2a1e"/><rect x="1487" y="384" width="3" height="2" fill="#15150e"/><rect x="1464" y="574" width="3" height="2" fill="#000"/><rect x="1392" y="293" width="3" height="2" fill="#15150e"/><rect x="1449" y="562" width="2" height="2" fill="#15150e"/><rect x="1481" y="385" width="2" height="3" fill="#15150e"/><rect x="1406" y="326" width="3" height="3" fill="#000"/><rect x="1380" y="317" width="3" height="2" fill="#000"/><rect x="1445" y="439" width="2" height="3" fill="#000"/><rect x="1393" y="355" width="2" height="3" fill="#2a2a1e"/><rect x="1385" y="296" width="3" height="3" fill="#000"/><rect x="1404" y="399" width="2" height="3" fill="#000"/><rect x="1448" y="415" width="3" height="2" fill="#2a2a1e"/><rect x="1428" y="285" width="3" height="2" fill="#2a2a1e"/><rect x="1385" y="384" width="3" height="3" fill="#000"/><rect x="1515" y="582" width="2" height="2" fill="#15150e"/><rect x="1462" y="376" width="3" height="3" fill="#2a2a1e"/><rect x="1469" y="326" width="3" height="2" fill="#000"/><rect x="1474" y="330" width="3" height="3" fill="#15150e"/><rect x="1450" y="459" width="3" height="3" fill="#000"/><rect x="1468" y="342" width="3" height="3" fill="#000"/><rect x="1453" y="354" width="2" height="2" fill="#2a2a1e"/><rect x="1472" y="532" width="2" height="2" fill="#000"/><rect x="1440" y="497" width="2" height="2" fill="#2a2a1e"/><rect x="1486" y="326" width="2" height="3" fill="#000"/><rect x="1379" y="297" width="2" height="3" fill="#15150e"/><rect x="1390" y="326" width="2" height="2" fill="#000"/><rect x="1507" y="554" width="2" height="3" fill="#15150e"/><rect x="1490" y="512" width="2" height="3" fill="#000"/><rect x="1449" y="395" width="3" height="2" fill="#15150e"/><rect x="1508" y="493" width="3" height="3" fill="#000"/><rect x="1488" y="435" width="2" height="3" fill="#000"/><rect x="1500" y="492" width="2" height="3" fill="#15150e"/><rect x="1422" y="331" width="3" height="2" fill="#000"/><rect x="1467" y="470" width="3" height="2" fill="#2a2a1e"/><rect x="1462" y="308" width="3" height="2" fill="#15150e"/><rect x="1503" y="467" width="2" height="2" fill="#000"/><rect x="1492" y="509" width="3" height="3" fill="#2a2a1e"/><rect x="1421" y="434" width="2" height="2" fill="#000"/><rect x="1379" y="329" width="2" height="3" fill="#2a2a1e"/><rect x="1450" y="581" width="2" height="2" fill="#000"/><rect x="1486" y="480" width="2" height="3" fill="#15150e"/><rect x="1489" y="358" width="2" height="2" fill="#15150e"/><rect x="1477" y="388" width="3" height="3" fill="#2a2a1e"/><rect x="1446" y="561" width="2" height="3" fill="#000"/><rect x="1392" y="286" width="3" height="3" fill="#2a2a1e"/><rect x="1509" y="466" width="2" height="3" fill="#15150e"/><rect x="1469" y="583" width="2" height="2" fill="#000"/><rect x="1458" y="378" width="3" height="3" fill="#15150e"/><rect x="1478" y="570" width="3" height="3" fill="#000"/><rect x="1413" y="364" width="2" height="2" fill="#15150e"/><rect x="1407" y="290" width="2" height="3" fill="#2a2a1e"/><rect x="1499" y="485" width="2" height="2" fill="#000"/><rect x="1501" y="390" width="2" height="2" fill="#000"/><rect x="1443" y="473" width="3" height="2" fill="#000"/><rect x="1499" y="531" width="2" height="3" fill="#2a2a1e"/><rect x="1510" y="555" width="2" height="3" fill="#15150e"/><rect x="1478" y="386" width="2" height="2" fill="#000"/><rect x="1496" y="395" width="3" height="3" fill="#15150e"/><rect x="1451" y="466" width="2" height="3" fill="#000"/><rect x="1481" y="364" width="3" height="2" fill="#15150e"/><rect x="1468" y="454" width="3" height="3" fill="#15150e"/><rect x="1449" y="576" width="2" height="3" fill="#000"/><rect x="1454" y="315" width="3" height="2" fill="#000"/><rect x="1510" y="478" width="2" height="2" fill="#000"/><rect x="1454" y="340" width="3" height="2" fill="#000"/><rect x="1500" y="549" width="2" height="2" fill="#15150e"/><rect x="1486" y="359" width="3" height="2" fill="#15150e"/><rect x="1504" y="405" width="2" height="3" fill="#000"/><rect x="1511" y="478" width="2" height="2" fill="#15150e"/><rect x="1408" y="394" width="3" height="3" fill="#15150e"/><rect x="1500" y="367" width="2" height="3" fill="#15150e"/><rect x="1385" y="285" width="2" height="2" fill="#15150e"/><rect x="1472" y="469" width="3" height="2" fill="#000"/><rect x="1502" y="349" width="3" height="2" fill="#2a2a1e"/><rect x="1376" y="319" width="2" height="2" fill="#15150e"/><rect x="1386" y="336" width="3" height="2" fill="#2a2a1e"/><rect x="1477" y="557" width="2" height="2" fill="#000"/><rect x="1488" y="498" width="2" height="2" fill="#000"/><rect x="1457" y="501" width="2" height="2" fill="#15150e"/><rect x="1381" y="318" width="3" height="2" fill="#2a2a1e"/><rect x="1451" y="480" width="2" height="3" fill="#2a2a1e"/><rect x="1515" y="548" width="2" height="2" fill="#15150e"/><rect x="1401" y="299" width="3" height="3" fill="#000"/><rect x="1420" y="297" width="3" height="3" fill="#15150e"/><rect x="1473" y="589" width="3" height="3" fill="#2a2a1e"/><rect x="1419" y="414" width="2" height="3" fill="#2a2a1e"/><rect x="1502" y="533" width="2" height="2" fill="#15150e"/><rect x="1474" y="510" width="2" height="2" fill="#000"/><rect x="1473" y="421" width="3" height="3" fill="#000"/><rect x="1442" y="485" width="3" height="3" fill="#2a2a1e"/><rect x="1481" y="401" width="2" height="3" fill="#15150e"/><rect x="1462" y="494" width="3" height="2" fill="#000"/><rect x="1508" y="521" width="3" height="3" fill="#15150e"/><rect x="1449" y="432" width="2" height="2" fill="#000"/><rect x="1508" y="448" width="2" height="2" fill="#15150e"/><rect x="1407" y="337" width="3" height="2" fill="#000"/><rect x="1419" y="396" width="3" height="2" fill="#2a2a1e"/><rect x="1395" y="362" width="2" height="3" fill="#15150e"/><rect x="1469" y="446" width="3" height="3" fill="#000"/><rect x="1412" y="374" width="3" height="2" fill="#2a2a1e"/><rect x="1465" y="511" width="2" height="2" fill="#000"/><rect x="1472" y="398" width="2" height="3" fill="#15150e"/><rect x="1490" y="362" width="2" height="2" fill="#15150e"/><rect x="1380" y="339" width="3" height="3" fill="#15150e"/><rect x="1498" y="347" width="3" height="3" fill="#15150e"/><rect x="1507" y="506" width="3" height="3" fill="#000"/><rect x="1477" y="376" width="3" height="3" fill="#15150e"/><rect x="1424" y="403" width="2" height="2" fill="#15150e"/><rect x="1381" y="347" width="2" height="2" fill="#2a2a1e"/><rect x="1428" y="447" width="3" height="2" fill="#000"/><rect x="1459" y="427" width="3" height="3" fill="#2a2a1e"/><rect x="1421" y="404" width="3" height="2" fill="#000"/><rect x="1404" y="308" width="2" height="2" fill="#2a2a1e"/><rect x="1455" y="301" width="2" height="3" fill="#2a2a1e"/><rect x="1499" y="455" width="3" height="2" fill="#2a2a1e"/><rect x="1492" y="554" width="2" height="3" fill="#15150e"/><rect x="1448" y="311" width="3" height="3" fill="#15150e"/><rect x="1454" y="442" width="3" height="2" fill="#15150e"/><rect x="1490" y="550" width="3" height="3" fill="#000"/><rect x="1391" y="348" width="3" height="3" fill="#2a2a1e"/><rect x="1476" y="328" width="3" height="2" fill="#2a2a1e"/><rect x="1507" y="456" width="2" height="3" fill="#000"/><rect x="1450" y="411" width="3" height="2" fill="#15150e"/><rect x="1404" y="420" width="2" height="2" fill="#2a2a1e"/><rect x="1402" y="347" width="2" height="3" fill="#000"/><rect x="1454" y="532" width="3" height="2" fill="#15150e"/><rect x="1490" y="450" width="2" height="2" fill="#000"/><rect x="1448" y="428" width="2" height="2" fill="#000"/><rect x="1473" y="332" width="2" height="2" fill="#000"/><rect x="1483" y="555" width="3" height="2" fill="#15150e"/><rect x="1496" y="331" width="2" height="3" fill="#000"/><rect x="1420" y="332" width="3" height="2" fill="#000"/><rect x="1401" y="330" width="2" height="3" fill="#15150e"/><rect x="1472" y="319" width="3" height="2" fill="#000"/><rect x="1449" y="374" width="3" height="2" fill="#2a2a1e"/><rect x="1503" y="567" width="2" height="3" fill="#15150e"/><rect x="1499" y="469" width="2" height="2" fill="#000"/><rect x="1441" y="522" width="2" height="3" fill="#000"/><rect x="1457" y="315" width="2" height="3" fill="#000"/><rect x="1511" y="488" width="2" height="2" fill="#15150e"/><rect x="1423" y="433" width="3" height="3" fill="#000"/><rect x="1491" y="508" width="3" height="2" fill="#000"/><rect x="1488" y="469" width="3" height="2" fill="#000"/><rect x="1480" y="395" width="2" height="3" fill="#000"/><rect x="1496" y="555" width="3" height="3" fill="#000"/><rect x="1410" y="317" width="2" height="2" fill="#000"/><rect x="1445" y="450" width="2" height="3" fill="#2a2a1e"/><rect x="1454" y="590" width="2" height="2" fill="#000"/><rect x="1444" y="529" width="2" height="2" fill="#000"/><rect x="1482" y="332" width="3" height="2" fill="#2a2a1e"/><rect x="1430" y="445" width="3" height="2" fill="#000"/><rect x="1470" y="351" width="2" height="2" fill="#000"/><rect x="1386" y="351" width="2" height="3" fill="#15150e"/><rect x="1459" y="341" width="3" height="3" fill="#2a2a1e"/><rect x="1485" y="347" width="2" height="3" fill="#000"/><rect x="1443" y="438" width="3" height="2" fill="#000"/><rect x="1496" y="528" width="2" height="3" fill="#000"/><rect x="1490" y="437" width="3" height="2" fill="#15150e"/><rect x="1494" y="575" width="2" height="3" fill="#000"/><rect x="1487" y="554" width="3" height="2" fill="#000"/><rect x="1406" y="345" width="3" height="2" fill="#2a2a1e"/><rect x="1457" y="573" width="2" height="3" fill="#2a2a1e"/><rect x="1489" y="496" width="3" height="3" fill="#2a2a1e"/><rect x="1471" y="529" width="3" height="3" fill="#000"/><rect x="1512" y="556" width="3" height="3" fill="#2a2a1e"/><rect x="1461" y="426" width="3" height="2" fill="#000"/><rect x="1463" y="375" width="2" height="3" fill="#000"/><rect x="1475" y="421" width="2" height="2" fill="#000"/><rect x="1493" y="341" width="3" height="3" fill="#000"/><rect x="1425" y="354" width="3" height="3" fill="#2a2a1e"/><rect x="1488" y="472" width="2" height="3" fill="#000"/><rect x="1491" y="362" width="3" height="2" fill="#2a2a1e"/><rect x="1409" y="413" width="3" height="3" fill="#15150e"/><rect x="1469" y="480" width="3" height="2" fill="#2a2a1e"/><rect x="1445" y="498" width="2" height="2" fill="#000"/><rect x="1454" y="423" width="2" height="3" fill="#000"/><rect x="1412" y="342" width="2" height="3" fill="#000"/><rect x="1482" y="483" width="3" height="2" fill="#15150e"/><rect x="1453" y="410" width="2" height="3" fill="#2a2a1e"/><rect x="1474" y="370" width="2" height="3" fill="#000"/><rect x="1489" y="392" width="2" height="2" fill="#000"/><rect x="1397" y="381" width="2" height="3" fill="#2a2a1e"/><rect x="1486" y="396" width="2" height="3" fill="#15150e"/><rect x="1503" y="431" width="3" height="3" fill="#2a2a1e"/><rect x="1388" y="365" width="3" height="3" fill="#2a2a1e"/><rect x="1489" y="430" width="2" height="2" fill="#2a2a1e"/><rect x="1446" y="411" width="2" height="3" fill="#000"/><rect x="1441" y="457" width="3" height="2" fill="#15150e"/><rect x="1438" y="288" width="3" height="3" fill="#15150e"/><rect x="1411" y="359" width="2" height="2" fill="#2a2a1e"/><rect x="1495" y="505" width="3" height="2" fill="#000"/><rect x="1474" y="524" width="3" height="3" fill="#2a2a1e"/><rect x="1423" y="342" width="2" height="3" fill="#15150e"/><rect x="1392" y="389" width="2" height="3" fill="#000"/><rect x="1446" y="548" width="2" height="3" fill="#2a2a1e"/><rect x="1487" y="495" width="2" height="2" fill="#000"/><rect x="1471" y="518" width="2" height="3" fill="#000"/><rect x="1481" y="539" width="3" height="3" fill="#000"/><rect x="1467" y="555" width="3" height="3" fill="#000"/><rect x="1485" y="472" width="3" height="2" fill="#000"/><rect x="1417" y="396" width="2" height="3" fill="#000"/><rect x="1475" y="306" width="3" height="2" fill="#000"/><rect x="1439" y="521" width="3" height="3" fill="#000"/><rect x="1460" y="294" width="3" height="2" fill="#2a2a1e"/><rect x="1422" y="387" width="2" height="2" fill="#000"/><rect x="1457" y="505" width="2" height="2" fill="#000"/><rect x="1491" y="367" width="3" height="2" fill="#15150e"/><rect x="1479" y="465" width="3" height="3" fill="#2a2a1e"/><rect x="1442" y="325" width="3" height="3" fill="#000"/><rect x="1422" y="343" width="3" height="2" fill="#15150e"/><rect x="1486" y="529" width="2" height="3" fill="#000"/><rect x="1454" y="501" width="3" height="2" fill="#000"/><rect x="1381" y="348" width="2" height="3" fill="#15150e"/><rect x="1464" y="459" width="3" height="3" fill="#15150e"/><rect x="1474" y="415" width="2" height="3" fill="#000"/><rect x="1443" y="310" width="3" height="3" fill="#2a2a1e"/><rect x="1504" y="587" width="2" height="3" fill="#2a2a1e"/><rect x="1403" y="362" width="2" height="2" fill="#15150e"/><rect x="1511" y="588" width="3" height="3" fill="#000"/><rect x="1491" y="545" width="2" height="2" fill="#000"/><rect x="1450" y="293" width="2" height="3" fill="#000"/><rect x="1506" y="550" width="3" height="3" fill="#2a2a1e"/><rect x="1485" y="564" width="2" height="2" fill="#000"/><rect x="1505" y="403" width="2" height="2" fill="#000"/><rect x="1456" y="569" width="3" height="2" fill="#000"/><rect x="1499" y="336" width="2" height="3" fill="#2a2a1e"/><rect x="1461" y="321" width="3" height="3" fill="#000"/><rect x="1475" y="532" width="2" height="2" fill="#2a2a1e"/><rect x="1455" y="515" width="2" height="2" fill="#000"/><rect x="1379" y="359" width="2" height="2" fill="#2a2a1e"/><rect x="1411" y="332" width="2" height="3" fill="#000"/><rect x="1484" y="558" width="2" height="2" fill="#000"/><rect x="1491" y="334" width="3" height="2" fill="#2a2a1e"/><rect x="1497" y="456" width="2" height="2" fill="#000"/><rect x="1469" y="475" width="3" height="3" fill="#000"/><rect x="1454" y="349" width="2" height="3" fill="#000"/><rect x="1402" y="417" width="2" height="2" fill="#15150e"/><rect x="1472" y="311" width="2" height="2" fill="#000"/><rect x="1426" y="378" width="3" height="2" fill="#2a2a1e"/><rect x="1461" y="587" width="2" height="2" fill="#000"/><rect x="1383" y="319" width="2" height="3" fill="#2a2a1e"/><rect x="1517" y="570" width="2" height="2" fill="#000"/><rect x="1495" y="506" width="2" height="2" fill="#2a2a1e"/><rect x="1463" y="375" width="3" height="2" fill="#15150e"/><rect x="1481" y="340" width="2" height="3" fill="#0a5a84"/><rect x="1385" y="313" width="4" height="4" fill="#0a5a84"/><rect x="1477" y="339" width="3" height="3" fill="#000"/><rect x="1419" y="320" width="3" height="3" fill="#000"/><rect x="1478" y="335" width="3" height="2" fill="#0a5a84"/><rect x="1394" y="286" width="3" height="3" fill="#0a5a84"/><rect x="1418" y="288" width="2" height="3" fill="#000"/><rect x="1401" y="288" width="4" height="4" fill="#000"/><rect x="1501" y="311" width="4" height="4" fill="#0a5a84"/><rect x="1384" y="298" width="3" height="2" fill="#0a5a84"/><rect x="1408" y="331" width="2" height="4" fill="#0a5a84"/><rect x="1457" y="295" width="4" height="3" fill="#0a5a84"/><rect x="1406" y="301" width="2" height="2" fill="#0a5a84"/><rect x="1492" y="326" width="4" height="4" fill="#0a5a84"/><rect x="1474" y="293" width="2" height="4" fill="#000"/><rect x="1468" y="304" width="2" height="4" fill="#000"/><rect x="1446" y="289" width="2" height="2" fill="#0a5a84"/><rect x="1388" y="317" width="4" height="4" fill="#0a5a84"/><rect x="1499" y="314" width="2" height="3" fill="#0a5a84"/><rect x="1426" y="330" width="2" height="3" fill="#0a5a84"/><rect x="1493" y="341" width="3" height="3" fill="#0a5a84"/><rect x="1486" y="299" width="2" height="3" fill="#0a5a84"/><rect x="1418" y="325" width="2" height="2" fill="#000"/><rect x="1394" y="328" width="4" height="3" fill="#0a5a84"/><rect x="1408" y="287" width="3" height="2" fill="#000"/><rect x="1425" y="327" width="4" height="4" fill="#000"/><rect x="1381" y="304" width="3" height="2" fill="#0a5a84"/><rect x="1422" y="332" width="2" height="3" fill="#0a5a84"/><rect x="1407" y="308" width="4" height="4" fill="#000"/><rect x="1492" y="344" width="2" height="3" fill="#0a5a84"/><rect x="1462" y="343" width="3" height="3" fill="#000"/><rect x="1461" y="315" width="2" height="2" fill="#000"/><rect x="1464" y="339" width="2" height="3" fill="#000"/><rect x="1437" y="316" width="2" height="3" fill="#0a5a84"/><rect x="1470" y="290" width="2" height="3" fill="#0a5a84"/><rect x="1499" y="344" width="3" height="3" fill="#000"/><rect x="1388" y="288" width="3" height="3" fill="#0a5a84"/><rect x="1405" y="306" width="2" height="2" fill="#0a5a84"/><rect x="1403" y="333" width="4" height="4" fill="#0a5a84"/><rect x="1444" y="300" width="2" height="4" fill="#0a5a84"/><rect x="1401" y="289" width="3" height="3" fill="#0a5a84"/><rect x="1480" y="293" width="3" height="4" fill="#0a5a84"/><rect x="1386" y="303" width="3" height="2" fill="#000"/><rect x="1469" y="315" width="3" height="2" fill="#0a5a84"/><rect x="1443" y="286" width="3" height="4" fill="#0a5a84"/><rect x="1479" y="328" width="2" height="4" fill="#0a5a84"/><rect x="1502" y="333" width="3" height="4" fill="#0a5a84"/><rect x="1397" y="299" width="4" height="3" fill="#0a5a84"/><rect x="1383" y="298" width="2" height="3" fill="#0a5a84"/><rect x="1507" y="339" width="3" height="4" fill="#0a5a84"/><rect x="1427" y="329" width="2" height="3" fill="#0a5a84"/><rect x="1404" y="315" width="4" height="4" fill="#0a5a84"/><rect x="1465" y="298" width="2" height="2" fill="#0a5a84"/><rect x="1435" y="299" width="3" height="2" fill="#0a5a84"/><rect x="1396" y="311" width="4" height="2" fill="#0a5a84"/><rect x="1424" y="295" width="2" height="2" fill="#0a5a84"/><rect x="1484" y="324" width="3" height="4" fill="#0a5a84"/><rect x="1470" y="293" width="2" height="4" fill="#000"/><rect x="1410" y="311" width="2" height="4" fill="#000"/><rect x="1380" y="299" width="2" height="2" fill="#0a5a84"/><rect x="1485" y="336" width="3" height="4" fill="#0a5a84"/><rect x="1403" y="294" width="4" height="3" fill="#0a5a84"/><rect x="1428" y="287" width="2" height="2" fill="#0a5a84"/><rect x="1396" y="293" width="2" height="4" fill="#0a5a84"/><rect x="1489" y="337" width="4" height="4" fill="#0a5a84"/><rect x="1452" y="313" width="3" height="4" fill="#0a5a84"/><rect x="1453" y="337" width="4" height="4" fill="#000"/><rect x="1432" y="323" width="3" height="4" fill="#0a5a84"/><rect x="1397" y="330" width="3" height="4" fill="#000"/><rect x="1469" y="288" width="4" height="3" fill="#000"/><rect x="1465" y="337" width="2" height="3" fill="#0a5a84"/><rect x="1419" y="334" width="4" height="2" fill="#0a5a84"/><rect x="1504" y="336" width="2" height="3" fill="#000"/><rect x="1496" y="299" width="4" height="4" fill="#0a5a84"/><rect x="1424" y="317" width="3" height="2" fill="#000"/><rect x="1460" y="342" width="2" height="2" fill="#0a5a84"/><rect x="1391" y="311" width="3" height="4" fill="#000"/><rect x="1437" y="314" width="3" height="4" fill="#0a5a84"/><rect x="1421" y="330" width="3" height="3" fill="#000"/><rect x="1484" y="330" width="4" height="4" fill="#000"/><rect x="1426" y="292" width="4" height="3" fill="#0a5a84"/><rect x="1461" y="326" width="4" height="4" fill="#000"/><rect x="1462" y="295" width="2" height="4" fill="#0a5a84"/><rect x="1489" y="342" width="4" height="2" fill="#000"/><rect x="1496" y="323" width="3" height="4" fill="#0a5a84"/><rect x="1410" y="289" width="2" height="2" fill="#000"/><rect x="1404" y="301" width="4" height="2" fill="#000"/><rect x="1375" y="289" width="2" height="2" fill="#000"/><rect x="1437" y="289" width="3" height="3" fill="#0a5a84"/><rect x="1430" y="316" width="3" height="3" fill="#000"/><rect x="1500" y="301" width="3" height="2" fill="#000"/><rect x="1458" y="330" width="3" height="2" fill="#0a5a84"/><rect x="1417" y="317" width="2" height="2" fill="#0a5a84"/><rect x="1500" y="321" width="2" height="2" fill="#0a5a84"/><rect x="1430" y="303" width="2" height="2" fill="#0a5a84"/><rect x="1482" y="337" width="2" height="2" fill="#0a5a84"/><rect x="1434" y="315" width="2" height="4" fill="#000"/><rect x="1486" y="315" width="3" height="2" fill="#000"/><rect x="1399" y="322" width="2" height="4" fill="#0a5a84"/><rect x="1405" y="301" width="3" height="4" fill="#0a5a84"/><rect x="1418" y="288" width="2" height="4" fill="#000"/><rect x="1402" y="303" width="4" height="4" fill="#0a5a84"/><rect x="1435" y="297" width="2" height="2" fill="#0a5a84"/><rect x="1390" y="288" width="3" height="3" fill="#0a5a84"/><rect x="1482" y="304" width="3" height="4" fill="#0a5a84"/><rect x="1414" y="335" width="3" height="2" fill="#0a5a84"/><rect x="1379" y="318" width="2" height="2" fill="#0a5a84"/><rect x="1493" y="314" width="2" height="3" fill="#000"/><rect x="1480" y="331" width="3" height="4" fill="#0a5a84"/><rect x="1438" y="305" width="2" height="2" fill="#0a5a84"/><rect x="1382" y="310" width="3" height="2" fill="#0a5a84"/><rect x="1483" y="318" width="3" height="3" fill="#0a5a84"/><rect x="1501" y="312" width="4" height="3" fill="#0a5a84"/><rect x="1501" y="325" width="2" height="3" fill="#000"/><rect x="1460" y="302" width="2" height="4" fill="#000"/><rect x="1381" y="329" width="2" height="3" fill="#0a5a84"/><rect x="1478" y="313" width="2" height="2" fill="#0a5a84"/><rect x="1468" y="331" width="4" height="2" fill="#000"/><rect x="1412" y="335" width="2" height="4" fill="#000"/><rect x="1469" y="305" width="4" height="4" fill="#0a5a84"/><rect x="1395" y="295" width="3" height="4" fill="#0a5a84"/><rect x="1435" y="320" width="2" height="3" fill="#0a5a84"/><rect x="1502" y="332" width="3" height="3" fill="#000"/><rect x="1504" y="324" width="3" height="3" fill="#0a5a84"/><rect x="1471" y="332" width="2" height="4" fill="#000"/><rect x="1498" y="316" width="4" height="3" fill="#000"/><rect x="1484" y="330" width="4" height="3" fill="#0a5a84"/><rect x="1419" y="296" width="3" height="2" fill="#000"/><rect x="1491" y="322" width="2" height="3" fill="#0a5a84"/><rect x="1377" y="286" width="3" height="2" fill="#0a5a84"/><rect x="1485" y="302" width="3" height="3" fill="#0a5a84"/><rect x="1457" y="310" width="3" height="2" fill="#000"/><rect x="1476" y="335" width="4" height="2" fill="#0a5a84"/><rect x="1472" y="334" width="3" height="3" fill="#0a5a84"/><rect x="1463" y="309" width="3" height="2" fill="#000"/><rect x="1446" y="306" width="2" height="3" fill="#000"/><rect x="1489" y="342" width="2" height="4" fill="#0a5a84"/><rect x="1482" y="340" width="3" height="3" fill="#0a5a84"/><rect x="1480" y="336" width="2" height="4" fill="#0a5a84"/><rect x="1422" y="288" width="2" height="3" fill="#000"/><rect x="1423" y="325" width="3" height="4" fill="#000"/><rect x="1399" y="314" width="3" height="3" fill="#0a5a84"/><rect x="1459" y="343" width="3" height="3" fill="#0a5a84"/><rect x="1473" y="305" width="3" height="4" fill="#000"/><rect x="1434" y="285" width="4" height="2" fill="#000"/><rect x="1401" y="320" width="4" height="4" fill="#000"/><rect x="1462" y="322" width="3" height="4" fill="#0a5a84"/><rect x="1432" y="331" width="3" height="2" fill="#000"/><rect x="1444" y="338" width="4" height="3" fill="#000"/><rect x="1403" y="333" width="2" height="2" fill="#0a5a84"/><rect x="1432" y="309" width="4" height="2" fill="#0a5a84"/><rect x="1400" y="304" width="3" height="4" fill="#0a5a84"/><rect x="1492" y="324" width="3" height="4" fill="#000"/><rect x="1448" y="334" width="4" height="3" fill="#000"/><rect x="1496" y="343" width="2" height="4" fill="#0a5a84"/><rect x="1501" y="321" width="2" height="2" fill="#0a5a84"/><rect x="1432" y="286" width="2" height="4" fill="#0a5a84"/><rect x="1408" y="302" width="3" height="2" fill="#0a5a84"/><rect x="1459" y="288" width="2" height="3" fill="#0a5a84"/><rect x="1446" y="299" width="2" height="2" fill="#0a5a84"/><rect x="1387" y="315" width="4" height="4" fill="#000"/><rect x="1502" y="313" width="2" height="2" fill="#0a5a84"/><rect x="1466" y="293" width="3" height="2" fill="#0a5a84"/><rect x="1402" y="320" width="3" height="4" fill="#000"/><rect x="1492" y="308" width="3" height="3" fill="#0a5a84"/><rect x="1394" y="298" width="2" height="2" fill="#000"/><rect x="1453" y="292" width="3" height="2" fill="#0a5a84"/><rect x="1438" y="313" width="4" height="3" fill="#0a5a84"/><rect x="1502" y="315" width="2" height="3" fill="#0a5a84"/><rect x="1442" y="317" width="2" height="2" fill="#0a5a84"/><rect x="1428" y="307" width="3" height="3" fill="#0a5a84"/><rect x="1469" y="339" width="4" height="2" fill="#0a5a84"/><rect x="1491" y="322" width="2" height="2" fill="#0a5a84"/><rect x="1438" y="318" width="4" height="4" fill="#0a5a84"/><rect x="1503" y="325" width="2" height="4" fill="#0a5a84"/><rect x="1463" y="333" width="4" height="2" fill="#0a5a84"/><rect x="1481" y="323" width="4" height="2" fill="#0a5a84"/><rect x="1483" y="294" width="4" height="3" fill="#0a5a84"/><rect x="1397" y="292" width="2" height="4" fill="#0a5a84"/><rect x="1483" y="313" width="3" height="3" fill="#0a5a84"/><rect x="1496" y="307" width="4" height="3" fill="#0a5a84"/><rect x="1407" y="324" width="4" height="3" fill="#000"/><rect x="1423" y="310" width="3" height="4" fill="#0a5a84"/><rect x="1412" y="317" width="4" height="3" fill="#000"/><rect x="1382" y="298" width="4" height="2" fill="#000"/><rect x="1415" y="298" width="3" height="3" fill="#000"/><rect x="1473" y="332" width="2" height="2" fill="#0a5a84"/><rect x="1479" y="294" width="2" height="2" fill="#0a5a84"/><rect x="1441" y="332" width="3" height="2" fill="#0a5a84"/><rect x="1492" y="334" width="4" height="2" fill="#0a5a84"/><rect x="1377" y="288" width="2" height="2" fill="#000"/><rect x="1417" y="330" width="2" height="2" fill="#0a5a84"/><rect x="1394" y="296" width="4" height="3" fill="#0a5a84"/><rect x="1417" y="311" width="3" height="2" fill="#0a5a84"/><rect x="1469" y="296" width="2" height="2" fill="#0a5a84"/><rect x="1458" y="327" width="3" height="4" fill="#0a5a84"/><rect x="1433" y="336" width="4" height="2" fill="#0a5a84"/><rect x="1433" y="286" width="4" height="3" fill="#0a5a84"/><rect x="1491" y="344" width="4" height="4" fill="#000"/><rect x="1441" y="329" width="2" height="4" fill="#0a5a84"/><rect x="1519" y="454" width="1" height="2" fill="#000"/><rect x="1517" y="357" width="2" height="3" fill="#1a1a10"/><rect x="1523" y="579" width="3" height="1" fill="#000"/><rect x="1521" y="357" width="1" height="3" fill="#1a1a10"/><rect x="1520" y="597" width="3" height="2" fill="#000"/><rect x="1515" y="468" width="3" height="2" fill="#000"/><rect x="1514" y="464" width="2" height="1" fill="#000"/><rect x="1522" y="527" width="1" height="2" fill="#000"/><rect x="1514" y="428" width="1" height="1" fill="#1a1a10"/><rect x="1519" y="331" width="2" height="1" fill="#1a1a10"/><rect x="1521" y="433" width="3" height="2" fill="#000"/><rect x="1518" y="495" width="1" height="1" fill="#000"/><rect x="1520" y="390" width="1" height="3" fill="#000"/><rect x="1522" y="583" width="3" height="2" fill="#1a1a10"/><rect x="1517" y="494" width="2" height="2" fill="#1a1a10"/><rect x="1521" y="420" width="3" height="2" fill="#000"/><rect x="1519" y="389" width="3" height="3" fill="#1a1a10"/><rect x="1518" y="339" width="3" height="2" fill="#000"/><rect x="1521" y="365" width="3" height="2" fill="#1a1a10"/><rect x="1520" y="483" width="1" height="3" fill="#000"/><rect x="1515" y="552" width="2" height="2" fill="#000"/><rect x="1515" y="591" width="1" height="3" fill="#000"/><rect x="1511" y="330" width="2" height="2" fill="#1a1a10"/><rect x="1516" y="444" width="3" height="1" fill="#000"/><rect x="1513" y="422" width="1" height="1" fill="#000"/><rect x="1514" y="330" width="2" height="3" fill="#000"/><rect x="1508" y="309" width="1" height="2" fill="#000"/><rect x="1523" y="509" width="2" height="3" fill="#000"/><rect x="1516" y="408" width="3" height="1" fill="#000"/><rect x="1517" y="476" width="2" height="1" fill="#000"/><rect x="1513" y="362" width="3" height="3" fill="#000"/><rect x="1518" y="371" width="1" height="3" fill="#000"/><rect x="1522" y="598" width="3" height="3" fill="#1a1a10"/><rect x="1516" y="380" width="2" height="1" fill="#000"/><rect x="1522" y="477" width="1" height="1" fill="#1a1a10"/><rect x="1505" y="354" width="1" height="1" fill="#000"/><rect x="1522" y="380" width="3" height="3" fill="#000"/><rect x="1516" y="415" width="3" height="1" fill="#000"/><rect x="1514" y="509" width="2" height="1" fill="#1a1a10"/><rect x="1521" y="454" width="2" height="2" fill="#1a1a10"/><rect x="1513" y="416" width="2" height="3" fill="#000"/><rect x="1513" y="408" width="2" height="2" fill="#1a1a10"/><rect x="1519" y="348" width="3" height="3" fill="#1a1a10"/><rect x="1517" y="371" width="1" height="1" fill="#000"/><rect x="1506" y="328" width="2" height="3" fill="#000"/><rect x="1510" y="443" width="1" height="1" fill="#1a1a10"/><rect x="1519" y="526" width="2" height="3" fill="#000"/><rect x="1510" y="393" width="3" height="2" fill="#000"/><rect x="1516" y="352" width="2" height="2" fill="#000"/><rect x="1517" y="429" width="1" height="3" fill="#000"/><rect x="1518" y="523" width="3" height="1" fill="#000"/><rect x="1512" y="401" width="1" height="3" fill="#1a1a10"/><rect x="1518" y="357" width="2" height="1" fill="#000"/><rect x="1516" y="430" width="3" height="2" fill="#000"/><rect x="1517" y="499" width="1" height="1" fill="#000"/><rect x="1517" y="429" width="1" height="1" fill="#000"/><rect x="1506" y="330" width="2" height="3" fill="#000"/><rect x="1520" y="442" width="1" height="1" fill="#000"/><rect x="1519" y="537" width="1" height="1" fill="#000"/><rect x="1506" y="366" width="3" height="2" fill="#000"/><rect x="1504" y="340" width="3" height="3" fill="#000"/><rect x="1521" y="491" width="1" height="3" fill="#000"/><rect x="1517" y="335" width="2" height="1" fill="#1a1a10"/><rect x="1505" y="346" width="2" height="1" fill="#000"/><rect x="1522" y="536" width="3" height="2" fill="#1a1a10"/><rect x="1519" y="552" width="3" height="1" fill="#000"/><rect x="1512" y="445" width="2" height="1" fill="#000"/><rect x="1516" y="339" width="1" height="2" fill="#000"/><rect x="1516" y="356" width="3" height="2" fill="#000"/><rect x="1511" y="412" width="2" height="1" fill="#1a1a10"/><polygon points="1368.0,280.0 1459.0,276.0 1482.0,300.0 1460.0,302.0 1380.0,306.0" fill="#22221a" /><polygon points="1110.0,288.0 1262.0,285.0 1265.0,330.0 1300.0,360.0 1372.0,350.0 1385.0,385.0 1410.0,395.0 1410.0,520.0 1347.0,508.0 1200.0,560.0 1156.0,520.0 1125.0,445.0 1180.0,437.0 1180.0,389.0 1127.0,393.0 1110.0,383.0" fill="url(#gtab)" /><polygon points="978.0,412.0 1035.0,395.0 1110.0,383.0 1180.0,375.0 1180.0,437.0 1132.5,440.7 1045.0,452.0 1020.0,462.0 990.0,480.0 962.0,500.0 935.0,478.0 945.0,452.0 968.0,412.0" fill="url(#gfloor)" /><polygon points="810.8,158.5 1130.0,137.4 1392.3,118.3 1393.0,149.0 1130.0,167.1 806.6,191.9" fill="#040404" /><polygon points="806.6,191.9 1130.0,167.1 1384.8,148.0 1377.4,248.2 1374.9,280.0 1262.0,285.0 1110.0,290.0 1110.0,383.0 1035.0,395.0 980.8,408.8 957.7,452.4 944.0,480.0 903.6,489.0 901.1,444.2 898.7,419.5 881.0,400.0 861.0,376.0 836.8,362.6 799.7,340.3 782.4,332.9 784.8,328.0 796.0,253.7 804.6,229.0" fill="url(#gwhite)" /><polygon points="1000.0,200.0 1378.0,200.0 1375.0,284.0 1000.0,300.0" fill="url(#gwr)" /><polygon points="782.0,334.0 812.0,352.0 837.0,366.5 839.0,406.0 841.8,426.4 849.5,464.9 858.5,503.4 864.9,508.5 892.0,524.0 904.0,548.0 925.0,548.0 905.0,540.0 903.0,500.0 901.0,444.0 881.0,400.0 861.0,376.0 836.8,362.6 799.7,340.3" fill="#2a2c23" /><polygon points="812.0,356.0 830.0,364.0 845.0,420.0 855.0,470.0 864.0,505.0 850.0,470.0 838.0,420.0 836.0,380.0" fill="#3a3c31" /><polygon points="851.0,385.0 869.0,407.0 875.2,445.7 897.0,452.0 900.8,477.7 907.2,516.2 909.8,541.9 925.2,548.3 905.0,552.0 897.0,549.6 891.9,535.5 881.6,497.0 870.0,450.0 858.0,405.0" fill="#0c0e0a" /><polygon points="782.4,332.9 799.7,340.3 836.8,362.6 861.0,376.0 881.0,400.0 898.7,419.5 901.1,444.2 886.3,451.6 869.0,407.0 851.0,385.0 838.0,372.0 810.0,350.0" fill="#e4e2e6" /><rect x="872" y="420" width="2" height="2" fill="#c090b0"/><rect x="876" y="421" width="3" height="2" fill="#c090b0"/><rect x="867" y="390" width="2" height="2" fill="#a0a0a0"/><rect x="831" y="364" width="2" height="3" fill="#a0a0a0"/><rect x="872" y="422" width="2" height="3" fill="#c090b0"/><rect x="884" y="416" width="2" height="2" fill="#b06a9a"/><rect x="847" y="378" width="3" height="2" fill="#b06a9a"/><rect x="874" y="402" width="2" height="3" fill="#a0a0a0"/><rect x="879" y="411" width="2" height="2" fill="#a0a0a0"/><rect x="864" y="395" width="2" height="3" fill="#b06a9a"/><rect x="880" y="415" width="2" height="2" fill="#b06a9a"/><rect x="861" y="392" width="2" height="3" fill="#a0a0a0"/><rect x="849" y="380" width="3" height="2" fill="#b06a9a"/><rect x="829" y="361" width="3" height="3" fill="#a0a0a0"/><rect x="889" y="443" width="2" height="2" fill="#c090b0"/><rect x="859" y="392" width="3" height="2" fill="#c090b0"/><rect x="875" y="414" width="3" height="3" fill="#a0a0a0"/><rect x="867" y="387" width="2" height="2" fill="#c090b0"/><rect x="837" y="369" width="2" height="2" fill="#a0a0a0"/><rect x="860" y="380" width="3" height="2" fill="#a0a0a0"/><rect x="818" y="358" width="2" height="3" fill="#c090b0"/><rect x="877" y="422" width="3" height="3" fill="#c090b0"/><rect x="861" y="401" width="3" height="2" fill="#a0a0a0"/><rect x="878" y="436" width="3" height="2" fill="#b06a9a"/><rect x="838" y="374" width="2" height="3" fill="#b06a9a"/><rect x="851" y="385" width="2" height="3" fill="#a0a0a0"/><rect x="835" y="366" width="2" height="3" fill="#b06a9a"/><rect x="881" y="435" width="3" height="3" fill="#b06a9a"/><rect x="839" y="374" width="3" height="2" fill="#b06a9a"/><rect x="886" y="449" width="3" height="3" fill="#a0a0a0"/><polygon points="899.0,487.5 947.0,480.3 948.3,507.2 909.8,509.8 903.0,520.0" fill="#4a4a44" /><path d="M904 486 L947 479" fill="none" stroke="#b8b4a4" stroke-width="2.2"/><polygon points="947.0,477.7 979.1,494.4 990.6,507.2 948.3,509.8" fill="#6e6d64" /><polygon points="905.0,509.8 980.4,506.0 986.8,516.2 961.1,532.9 935.5,535.5 912.0,530.0" fill="#8a866e" /><polygon points="961.0,532.0 987.0,516.0 990.0,522.0 975.0,540.0 950.0,545.0" fill="#1a1a14" /><rect x="958" y="525" width="3" height="3" fill="#000"/><rect x="964" y="490" width="2" height="3" fill="#000"/><rect x="955" y="521" width="3" height="2" fill="#000"/><rect x="988" y="504" width="3" height="2" fill="#111"/><rect x="976" y="516" width="3" height="3" fill="#111"/><rect x="967" y="534" width="2" height="2" fill="#000"/><rect x="983" y="537" width="3" height="3" fill="#111"/><rect x="961" y="518" width="2" height="2" fill="#000"/><rect x="951" y="538" width="2" height="3" fill="#111"/><rect x="984" y="513" width="2" height="2" fill="#111"/><rect x="951" y="492" width="2" height="3" fill="#000"/><rect x="984" y="503" width="2" height="2" fill="#000"/><rect x="964" y="494" width="2" height="3" fill="#111"/><rect x="972" y="512" width="2" height="3" fill="#111"/><rect x="983" y="529" width="2" height="3" fill="#000"/><rect x="970" y="496" width="3" height="2" fill="#000"/><rect x="951" y="544" width="3" height="3" fill="#000"/><rect x="982" y="516" width="3" height="2" fill="#111"/><rect x="958" y="528" width="3" height="3" fill="#111"/><rect x="980" y="508" width="3" height="3" fill="#111"/><rect x="987" y="524" width="2" height="2" fill="#000"/><rect x="979" y="523" width="2" height="2" fill="#000"/><rect x="956" y="523" width="2" height="3" fill="#111"/><rect x="983" y="533" width="2" height="2" fill="#111"/><rect x="950" y="508" width="2" height="3" fill="#111"/><rect x="980" y="427" width="2" height="2" fill="#0a5a84"/><rect x="983" y="439" width="3" height="3" fill="#000"/><rect x="976" y="472" width="2" height="3" fill="#0a5a84"/><rect x="984" y="500" width="2" height="2" fill="#000"/><rect x="999" y="422" width="2" height="3" fill="#000"/><rect x="988" y="497" width="2" height="3" fill="#000"/><rect x="970" y="470" width="2" height="3" fill="#000"/><rect x="986" y="460" width="3" height="2" fill="#0a5a84"/><rect x="989" y="458" width="3" height="2" fill="#000"/><rect x="987" y="442" width="2" height="3" fill="#0a5a84"/><rect x="974" y="457" width="2" height="3" fill="#0a5a84"/><rect x="973" y="463" width="3" height="2" fill="#000"/><rect x="978" y="464" width="2" height="3" fill="#000"/><rect x="985" y="463" width="3" height="2" fill="#0a5a84"/><rect x="973" y="490" width="2" height="2" fill="#0a5a84"/><rect x="996" y="433" width="3" height="2" fill="#000"/><rect x="993" y="480" width="3" height="2" fill="#0a5a84"/><rect x="970" y="461" width="3" height="3" fill="#0a5a84"/><rect x="992" y="434" width="3" height="3" fill="#0a5a84"/><rect x="981" y="484" width="2" height="2" fill="#0a5a84"/><rect x="994" y="420" width="2" height="3" fill="#000"/><rect x="997" y="463" width="2" height="2" fill="#000"/><rect x="980" y="431" width="2" height="2" fill="#0a5a84"/><rect x="992" y="438" width="2" height="2" fill="#000"/><rect x="964" y="481" width="3" height="3" fill="#0a5a84"/><rect x="997" y="445" width="3" height="2" fill="#000"/><rect x="982" y="431" width="3" height="2" fill="#0a5a84"/><rect x="988" y="422" width="2" height="2" fill="#000"/><rect x="991" y="445" width="2" height="3" fill="#000"/><rect x="992" y="463" width="3" height="2" fill="#0a5a84"/><rect x="974" y="490" width="2" height="2" fill="#0a5a84"/><rect x="997" y="421" width="3" height="2" fill="#0a5a84"/><rect x="970" y="473" width="3" height="3" fill="#0a5a84"/><rect x="970" y="483" width="3" height="3" fill="#000"/><rect x="988" y="430" width="3" height="2" fill="#000"/><rect x="977" y="443" width="2" height="2" fill="#000"/><rect x="973" y="443" width="3" height="3" fill="#000"/><rect x="985" y="427" width="2" height="3" fill="#0a5a84"/><rect x="983" y="489" width="3" height="3" fill="#000"/><rect x="976" y="439" width="2" height="3" fill="#0a5a84"/><polygon points="1394.7,75.0 1480.2,75.0 1482.3,116.2 1477.0,150.0 1472.0,178.1 1459.6,277.0 1459.0,282.0 1374.0,284.0 1375.0,281.2 1387.4,178.1 1393.6,136.9" fill="url(#gdoor)" /><polygon points="1368.0,75.0 1378.0,75.0 1377.0,118.0 1369.0,118.0" fill="#c4ae86" /><rect x="1375" y="111" width="3" height="3" fill="#0a5a84"/><rect x="1366" y="102" width="2" height="3" fill="#0a5a84"/><rect x="1367" y="93" width="2" height="3" fill="#000"/><rect x="1377" y="95" width="3" height="2" fill="#000"/><rect x="1393" y="103" width="2" height="3" fill="#0a5a84"/><rect x="1396" y="76" width="3" height="3" fill="#000"/><rect x="1377" y="76" width="3" height="2" fill="#0a5a84"/><rect x="1389" y="106" width="2" height="2" fill="#000"/><rect x="1375" y="93" width="3" height="3" fill="#000"/><rect x="1375" y="85" width="3" height="2" fill="#0a5a84"/><rect x="1387" y="108" width="3" height="3" fill="#0a5a84"/><rect x="1376" y="82" width="3" height="3" fill="#000"/><rect x="1375" y="118" width="3" height="2" fill="#000"/><rect x="1381" y="84" width="2" height="2" fill="#000"/><rect x="1374" y="109" width="2" height="2" fill="#000"/><rect x="1389" y="94" width="3" height="2" fill="#000"/><rect x="1387" y="82" width="2" height="2" fill="#000"/><rect x="1367" y="98" width="3" height="3" fill="#000"/><rect x="1367" y="89" width="3" height="2" fill="#000"/><rect x="1383" y="87" width="3" height="2" fill="#000"/><rect x="1368" y="83" width="3" height="3" fill="#000"/><rect x="1382" y="103" width="3" height="2" fill="#000"/><rect x="1372" y="91" width="3" height="2" fill="#0a5a84"/><rect x="1390" y="99" width="3" height="2" fill="#0a5a84"/><rect x="1391" y="76" width="3" height="3" fill="#0a5a84"/><rect x="1386" y="88" width="2" height="2" fill="#000"/><rect x="1369" y="102" width="3" height="3" fill="#0a5a84"/><rect x="1396" y="75" width="2" height="3" fill="#0a5a84"/><rect x="1388" y="89" width="2" height="3" fill="#0a5a84"/><rect x="1381" y="107" width="3" height="2" fill="#000"/><rect x="1388" y="84" width="3" height="2" fill="#0a5a84"/><rect x="1371" y="104" width="2" height="3" fill="#0a5a84"/><rect x="1383" y="111" width="3" height="3" fill="#0a5a84"/><rect x="1368" y="114" width="3" height="3" fill="#000"/><rect x="1393" y="83" width="2" height="2" fill="#000"/><rect x="1387" y="80" width="2" height="2" fill="#000"/><rect x="1371" y="97" width="3" height="3" fill="#000"/><rect x="1388" y="104" width="3" height="3" fill="#0a5a84"/><rect x="1373" y="84" width="3" height="3" fill="#000"/><rect x="1373" y="76" width="3" height="2" fill="#000"/><rect x="1374" y="102" width="3" height="2" fill="#0a5a84"/><rect x="1368" y="86" width="3" height="3" fill="#000"/><rect x="1374" y="97" width="2" height="3" fill="#000"/><rect x="1393" y="109" width="2" height="3" fill="#000"/><rect x="1373" y="81" width="3" height="2" fill="#000"/><rect x="1393" y="113" width="2" height="2" fill="#0a5a84"/><rect x="1380" y="81" width="3" height="3" fill="#000"/><rect x="1375" y="77" width="2" height="3" fill="#0a5a84"/><rect x="1395" y="83" width="3" height="2" fill="#000"/><rect x="1371" y="80" width="2" height="2" fill="#0a5a84"/><rect x="1365" y="102" width="3" height="2" fill="#000"/><rect x="1369" y="108" width="3" height="2" fill="#000"/><rect x="1373" y="92" width="3" height="2" fill="#000"/><rect x="1392" y="84" width="2" height="3" fill="#0a5a84"/><rect x="1370" y="108" width="3" height="2" fill="#000"/><polygon points="1384.0,148.0 1393.6,137.0 1387.4,178.1 1375.0,281.2 1372.0,282.0 1378.0,240.0" fill="#b49a74" /><rect x="1386" y="191" width="2" height="3" fill="#000"/><rect x="1389" y="146" width="3" height="3" fill="#000"/><rect x="1385" y="167" width="2" height="2" fill="#000"/><rect x="1385" y="159" width="3" height="3" fill="#000"/><rect x="1381" y="159" width="3" height="2" fill="#000"/><rect x="1384" y="166" width="2" height="2" fill="#000"/><rect x="1382" y="207" width="2" height="3" fill="#000"/><rect x="1381" y="201" width="3" height="3" fill="#000"/><rect x="1381" y="193" width="2" height="3" fill="#000"/><rect x="1383" y="165" width="2" height="3" fill="#000"/><rect x="1378" y="206" width="3" height="2" fill="#000"/><rect x="1378" y="239" width="3" height="3" fill="#000"/><rect x="1380" y="190" width="3" height="2" fill="#000"/><rect x="1381" y="171" width="3" height="3" fill="#000"/><rect x="1381" y="175" width="2" height="2" fill="#000"/><rect x="1380" y="221" width="3" height="2" fill="#000"/><rect x="1382" y="186" width="2" height="2" fill="#000"/><rect x="1384" y="161" width="3" height="3" fill="#000"/><rect x="1378" y="240" width="2" height="2" fill="#000"/><rect x="1388" y="165" width="3" height="3" fill="#000"/><rect x="1376" y="270" width="3" height="2" fill="#000"/><rect x="1375" y="270" width="3" height="2" fill="#000"/><rect x="1382" y="150" width="3" height="2" fill="#000"/><rect x="1387" y="148" width="2" height="2" fill="#000"/><rect x="1385" y="201" width="2" height="3" fill="#000"/><rect x="1378" y="227" width="2" height="2" fill="#000"/><rect x="1385" y="190" width="2" height="3" fill="#000"/><rect x="1376" y="264" width="2" height="2" fill="#000"/><rect x="1382" y="219" width="3" height="3" fill="#000"/><rect x="1389" y="158" width="3" height="2" fill="#000"/><rect x="1385" y="157" width="3" height="2" fill="#000"/><rect x="1381" y="216" width="2" height="2" fill="#000"/><rect x="1380" y="189" width="2" height="3" fill="#000"/><rect x="1386" y="146" width="3" height="3" fill="#000"/><rect x="1380" y="238" width="3" height="3" fill="#000"/><rect x="1382" y="160" width="2" height="3" fill="#000"/><rect x="1382" y="228" width="2" height="2" fill="#000"/><rect x="1377" y="243" width="2" height="3" fill="#000"/><rect x="1381" y="208" width="3" height="2" fill="#000"/><rect x="1387" y="183" width="3" height="2" fill="#000"/><rect x="1382" y="158" width="3" height="2" fill="#000"/><rect x="1393" y="141" width="3" height="2" fill="#000"/><rect x="1379" y="241" width="3" height="3" fill="#000"/><rect x="1386" y="146" width="2" height="3" fill="#000"/><rect x="1384" y="217" width="3" height="2" fill="#000"/><rect x="1468" y="220" width="3" height="2" fill="#111"/><rect x="1476" y="211" width="1" height="2" fill="#000"/><rect x="1467" y="234" width="3" height="1" fill="#000"/><rect x="1469" y="203" width="1" height="2" fill="#000"/><rect x="1487" y="146" width="2" height="1" fill="#000"/><rect x="1483" y="80" width="1" height="2" fill="#111"/><rect x="1489" y="142" width="1" height="3" fill="#000"/><rect x="1480" y="213" width="1" height="3" fill="#111"/><rect x="1486" y="130" width="1" height="2" fill="#000"/><rect x="1475" y="174" width="3" height="2" fill="#000"/><rect x="1461" y="281" width="3" height="2" fill="#000"/><rect x="1471" y="195" width="1" height="1" fill="#000"/><rect x="1484" y="149" width="2" height="2" fill="#111"/><rect x="1472" y="202" width="3" height="3" fill="#000"/><rect x="1483" y="176" width="1" height="2" fill="#000"/><rect x="1483" y="115" width="1" height="3" fill="#111"/><rect x="1466" y="246" width="1" height="1" fill="#111"/><rect x="1480" y="164" width="2" height="2" fill="#111"/><rect x="1462" y="261" width="2" height="1" fill="#000"/><rect x="1474" y="181" width="3" height="3" fill="#000"/><rect x="1489" y="89" width="2" height="1" fill="#000"/><rect x="1477" y="187" width="1" height="1" fill="#111"/><rect x="1488" y="102" width="2" height="2" fill="#000"/><rect x="1489" y="152" width="3" height="1" fill="#111"/><rect x="1488" y="118" width="1" height="1" fill="#000"/><rect x="1488" y="80" width="2" height="3" fill="#000"/><rect x="1482" y="152" width="1" height="3" fill="#111"/><rect x="1478" y="172" width="3" height="1" fill="#000"/><rect x="1478" y="142" width="2" height="3" fill="#000"/><rect x="1484" y="76" width="2" height="1" fill="#111"/><rect x="1473" y="255" width="1" height="1" fill="#000"/><rect x="1485" y="101" width="2" height="3" fill="#000"/><rect x="1480" y="187" width="3" height="3" fill="#111"/><rect x="1478" y="211" width="1" height="1" fill="#000"/><rect x="1482" y="124" width="2" height="2" fill="#000"/><rect x="1490" y="88" width="2" height="3" fill="#000"/><rect x="1474" y="252" width="1" height="3" fill="#000"/><rect x="1475" y="240" width="2" height="2" fill="#000"/><rect x="1486" y="141" width="2" height="3" fill="#000"/><rect x="1476" y="163" width="3" height="2" fill="#000"/><rect x="1475" y="180" width="3" height="1" fill="#111"/><rect x="1480" y="82" width="1" height="3" fill="#000"/><rect x="1463" y="261" width="3" height="2" fill="#000"/><rect x="1473" y="259" width="1" height="3" fill="#000"/><rect x="1476" y="212" width="3" height="3" fill="#000"/><rect x="1479" y="233" width="3" height="3" fill="#000"/><rect x="1482" y="213" width="1" height="1" fill="#000"/><rect x="1470" y="251" width="2" height="1" fill="#000"/><rect x="1477" y="217" width="3" height="1" fill="#000"/><rect x="1487" y="173" width="1" height="2" fill="#000"/><rect x="1468" y="208" width="3" height="1" fill="#111"/><rect x="1475" y="216" width="1" height="3" fill="#000"/><rect x="1464" y="260" width="2" height="2" fill="#000"/><rect x="1483" y="115" width="1" height="2" fill="#000"/><rect x="1478" y="212" width="3" height="3" fill="#000"/><rect x="1480" y="144" width="3" height="1" fill="#000"/><rect x="1460" y="275" width="1" height="1" fill="#111"/><rect x="1483" y="127" width="3" height="2" fill="#111"/><rect x="1489" y="155" width="3" height="2" fill="#111"/><rect x="1472" y="191" width="3" height="1" fill="#111"/><rect x="1475" y="229" width="3" height="1" fill="#000"/><rect x="1482" y="122" width="3" height="2" fill="#000"/><rect x="1487" y="168" width="2" height="1" fill="#111"/><rect x="1481" y="180" width="2" height="2" fill="#111"/><rect x="1474" y="216" width="1" height="3" fill="#000"/><rect x="1460" y="265" width="2" height="2" fill="#000"/><rect x="1469" y="208" width="2" height="1" fill="#111"/><rect x="1468" y="235" width="2" height="3" fill="#000"/><rect x="1463" y="283" width="2" height="1" fill="#000"/><rect x="1476" y="201" width="3" height="1" fill="#111"/><rect x="1466" y="223" width="3" height="1" fill="#111"/><rect x="1487" y="141" width="2" height="3" fill="#000"/><rect x="1467" y="272" width="2" height="1" fill="#000"/><rect x="1482" y="193" width="1" height="2" fill="#000"/><rect x="1480" y="130" width="1" height="1" fill="#000"/><rect x="1469" y="250" width="2" height="1" fill="#000"/><rect x="1470" y="258" width="2" height="1" fill="#000"/><rect x="1471" y="230" width="3" height="3" fill="#000"/><rect x="1474" y="206" width="1" height="2" fill="#111"/><rect x="1485" y="129" width="3" height="1" fill="#000"/><rect x="1479" y="207" width="3" height="2" fill="#000"/><rect x="1481" y="191" width="2" height="2" fill="#000"/><rect x="1473" y="186" width="1" height="1" fill="#000"/><rect x="1467" y="287" width="1" height="3" fill="#000"/><rect x="1472" y="274" width="1" height="3" fill="#000"/><rect x="1470" y="284" width="2" height="1" fill="#111"/><rect x="1473" y="235" width="2" height="1" fill="#000"/><rect x="1466" y="212" width="1" height="2" fill="#000"/><rect x="1482" y="177" width="1" height="3" fill="#000"/><rect x="1489" y="131" width="2" height="1" fill="#000"/><rect x="1466" y="286" width="1" height="1" fill="#111"/><rect x="1467" y="232" width="2" height="3" fill="#000"/><rect x="1469" y="282" width="3" height="1" fill="#000"/><rect x="1473" y="228" width="1" height="3" fill="#000"/><rect x="1468" y="204" width="2" height="3" fill="#000"/><rect x="1474" y="189" width="1" height="2" fill="#000"/><rect x="1480" y="155" width="2" height="1" fill="#111"/><rect x="1470" y="244" width="3" height="2" fill="#111"/><rect x="1483" y="100" width="3" height="2" fill="#000"/><rect x="1468" y="214" width="2" height="2" fill="#111"/><rect x="1480" y="166" width="1" height="3" fill="#000"/><rect x="1474" y="177" width="1" height="1" fill="#000"/><rect x="1470" y="187" width="1" height="3" fill="#000"/><rect x="1484" y="148" width="1" height="1" fill="#111"/><rect x="1481" y="77" width="1" height="3" fill="#111"/><rect x="1472" y="277" width="3" height="3" fill="#000"/><rect x="1483" y="91" width="3" height="3" fill="#000"/><rect x="1479" y="228" width="2" height="3" fill="#000"/><rect x="1487" y="141" width="3" height="1" fill="#000"/><rect x="1467" y="284" width="2" height="3" fill="#000"/><rect x="1484" y="120" width="3" height="1" fill="#000"/><rect x="1468" y="258" width="3" height="3" fill="#111"/><rect x="1480" y="157" width="2" height="3" fill="#000"/><rect x="1485" y="136" width="1" height="3" fill="#000"/><rect x="1477" y="234" width="2" height="2" fill="#111"/><rect x="1470" y="194" width="3" height="3" fill="#000"/><rect x="1474" y="192" width="2" height="1" fill="#000"/><rect x="1469" y="223" width="3" height="1" fill="#000"/><rect x="1484" y="88" width="1" height="3" fill="#111"/><rect x="1489" y="134" width="3" height="1" fill="#000"/><rect x="1473" y="224" width="1" height="2" fill="#000"/><rect x="1483" y="221" width="1" height="1" fill="#000"/><rect x="1494" y="284" width="1" height="2" fill="#000"/><rect x="1481" y="235" width="2" height="2" fill="#000"/><rect x="1470" y="297" width="1" height="2" fill="#000"/><rect x="1477" y="288" width="2" height="1" fill="#000"/><rect x="1490" y="211" width="2" height="1" fill="#000"/><rect x="1499" y="299" width="2" height="1" fill="#000"/><rect x="1499" y="301" width="1" height="2" fill="#000"/><rect x="1481" y="309" width="1" height="2" fill="#000"/><rect x="1472" y="229" width="1" height="1" fill="#000"/><rect x="1472" y="212" width="2" height="2" fill="#000"/><rect x="1493" y="284" width="1" height="1" fill="#000"/><rect x="1489" y="193" width="2" height="2" fill="#000"/><rect x="1472" y="277" width="1" height="2" fill="#000"/><rect x="1474" y="249" width="2" height="2" fill="#000"/><rect x="1498" y="308" width="1" height="1" fill="#000"/><rect x="1497" y="318" width="1" height="2" fill="#000"/><rect x="1482" y="304" width="1" height="2" fill="#000"/><rect x="1478" y="260" width="1" height="2" fill="#000"/><rect x="1484" y="286" width="2" height="1" fill="#000"/><rect x="1490" y="233" width="2" height="2" fill="#000"/><rect x="1480" y="252" width="2" height="1" fill="#000"/><rect x="1501" y="293" width="1" height="1" fill="#000"/><rect x="1499" y="249" width="2" height="1" fill="#000"/><rect x="1494" y="244" width="2" height="1" fill="#000"/><rect x="1474" y="191" width="2" height="1" fill="#000"/><rect x="1486" y="205" width="2" height="1" fill="#000"/><rect x="1477" y="236" width="2" height="2" fill="#000"/><rect x="1485" y="244" width="1" height="2" fill="#000"/><rect x="1477" y="222" width="2" height="2" fill="#000"/><rect x="1471" y="191" width="1" height="2" fill="#000"/><rect x="1473" y="253" width="1" height="2" fill="#000"/><rect x="1488" y="209" width="1" height="1" fill="#000"/><rect x="1473" y="286" width="2" height="2" fill="#000"/><rect x="1488" y="228" width="2" height="1" fill="#000"/><rect x="1494" y="263" width="2" height="2" fill="#000"/><rect x="1480" y="208" width="2" height="1" fill="#000"/><rect x="1489" y="200" width="1" height="1" fill="#000"/><rect x="1471" y="205" width="1" height="2" fill="#000"/><rect x="1487" y="309" width="1" height="1" fill="#000"/><rect x="1473" y="198" width="1" height="2" fill="#000"/><rect x="1471" y="248" width="2" height="2" fill="#000"/><rect x="1480" y="282" width="2" height="2" fill="#000"/><rect x="1504" y="322" width="2" height="1" fill="#000"/><rect x="1499" y="300" width="2" height="2" fill="#000"/><rect x="1498" y="278" width="1" height="1" fill="#000"/><rect x="1478" y="271" width="1" height="1" fill="#000"/><rect x="1475" y="293" width="2" height="1" fill="#000"/><rect x="1489" y="249" width="2" height="1" fill="#000"/><rect x="1455" y="170" width="3" height="1" fill="#222"/><rect x="1417" y="108" width="1" height="3" fill="#000"/><rect x="1418" y="174" width="1" height="2" fill="#000"/><rect x="1462" y="124" width="2" height="3" fill="#000"/><rect x="1425" y="144" width="2" height="2" fill="#000"/><rect x="1423" y="130" width="2" height="2" fill="#222"/><rect x="1418" y="209" width="2" height="1" fill="#000"/><rect x="1434" y="263" width="1" height="1" fill="#000"/><rect x="1403" y="118" width="1" height="3" fill="#000"/><rect x="1431" y="121" width="2" height="1" fill="#222"/><rect x="1435" y="240" width="1" height="1" fill="#000"/><rect x="1443" y="106" width="3" height="2" fill="#222"/><rect x="1435" y="250" width="1" height="3" fill="#000"/><rect x="1422" y="105" width="3" height="1" fill="#000"/><rect x="1433" y="97" width="2" height="3" fill="#000"/><rect x="1454" y="140" width="3" height="2" fill="#222"/><rect x="1428" y="185" width="3" height="1" fill="#000"/><rect x="1428" y="234" width="1" height="2" fill="#222"/><polygon points="976.0,323.0 1007.0,311.0 1019.0,319.0 1031.0,395.0 988.0,412.0" fill="#0a5a84" /><polygon points="1045.0,273.0 1093.0,254.0 1086.0,335.0 1107.0,373.0 1083.0,383.0 1052.0,340.0 1045.0,311.0" fill="#0a5a84" /><polygon points="1020.0,340.0 1035.0,345.0 1045.0,390.0 1032.0,395.0" fill="#0a5a84" /><polygon points="966.2,318.7 1009.1,282.9 1011.5,294.8 980.5,321.0" fill="#a8a8a6" /><polygon points="966.2,321.0 976.0,321.0 986.0,412.0 978.0,412.0" fill="#1a1c16" /><path d="M1004 298 L1014 330 L1030 395" fill="none" stroke="#24261f" stroke-width="6"/><path d="M1040 330 L1060 380 L1075 418" fill="none" stroke="#24261f" stroke-width="7"/><path d="M1052 290 L1072 345 L1085 380" fill="none" stroke="#22241e" stroke-width="4"/><rect x="1008" y="325" width="3" height="2" fill="#000"/><rect x="1017" y="302" width="2" height="2" fill="#000"/><rect x="1035" y="388" width="2" height="2" fill="#000"/><rect x="1012" y="314" width="2" height="3" fill="#1c1e18"/><rect x="1014" y="330" width="3" height="3" fill="#1c1e18"/><rect x="1003" y="291" width="3" height="2" fill="#1c1e18"/><rect x="1027" y="344" width="2" height="2" fill="#000"/><rect x="1033" y="371" width="3" height="3" fill="#1c1e18"/><rect x="1029" y="397" width="2" height="3" fill="#000"/><rect x="1027" y="385" width="2" height="2" fill="#000"/><rect x="1026" y="341" width="3" height="2" fill="#1c1e18"/><rect x="1023" y="347" width="2" height="3" fill="#000"/><rect x="1032" y="383" width="3" height="2" fill="#1c1e18"/><rect x="1011" y="338" width="3" height="3" fill="#000"/><rect x="1030" y="378" width="2" height="3" fill="#1c1e18"/><rect x="1021" y="365" width="2" height="2" fill="#000"/><rect x="1028" y="335" width="2" height="2" fill="#1c1e18"/><rect x="1012" y="348" width="2" height="2" fill="#000"/><rect x="1022" y="366" width="3" height="2" fill="#000"/><rect x="1033" y="379" width="3" height="2" fill="#000"/><rect x="1032" y="373" width="2" height="3" fill="#1c1e18"/><rect x="1016" y="325" width="2" height="2" fill="#1c1e18"/><rect x="1019" y="383" width="2" height="3" fill="#1c1e18"/><rect x="1022" y="395" width="3" height="3" fill="#000"/><rect x="1020" y="355" width="3" height="3" fill="#000"/><rect x="1010" y="310" width="2" height="2" fill="#000"/><rect x="1034" y="385" width="3" height="3" fill="#000"/><rect x="1019" y="383" width="2" height="2" fill="#1c1e18"/><rect x="1003" y="303" width="2" height="2" fill="#1c1e18"/><rect x="1031" y="383" width="3" height="2" fill="#000"/><rect x="1003" y="295" width="3" height="2" fill="#000"/><rect x="1025" y="364" width="2" height="3" fill="#000"/><rect x="1023" y="372" width="3" height="3" fill="#000"/><rect x="1020" y="314" width="2" height="3" fill="#1c1e18"/><rect x="1025" y="380" width="2" height="2" fill="#1c1e18"/><rect x="1019" y="354" width="2" height="3" fill="#1c1e18"/><rect x="1000" y="291" width="2" height="3" fill="#000"/><rect x="1011" y="314" width="3" height="3" fill="#000"/><rect x="1027" y="392" width="2" height="3" fill="#000"/><rect x="1020" y="302" width="3" height="2" fill="#000"/><rect x="1013" y="341" width="3" height="3" fill="#1c1e18"/><rect x="1014" y="291" width="2" height="3" fill="#000"/><rect x="1019" y="368" width="3" height="2" fill="#000"/><rect x="1012" y="291" width="3" height="2" fill="#000"/><rect x="1029" y="387" width="3" height="3" fill="#000"/><rect x="1021" y="296" width="3" height="3" fill="#1c1e18"/><rect x="1031" y="372" width="2" height="2" fill="#000"/><rect x="1006" y="297" width="2" height="2" fill="#000"/><rect x="1024" y="323" width="2" height="3" fill="#000"/><rect x="1021" y="304" width="2" height="3" fill="#000"/><rect x="1026" y="378" width="2" height="2" fill="#000"/><rect x="1018" y="318" width="2" height="2" fill="#000"/><rect x="1032" y="389" width="3" height="2" fill="#1c1e18"/><rect x="1028" y="340" width="3" height="2" fill="#000"/><rect x="1021" y="336" width="3" height="3" fill="#000"/><rect x="1008" y="324" width="2" height="3" fill="#000"/><rect x="1020" y="372" width="3" height="3" fill="#000"/><rect x="1019" y="300" width="2" height="2" fill="#1c1e18"/><rect x="1012" y="306" width="2" height="2" fill="#1c1e18"/><rect x="1022" y="305" width="2" height="3" fill="#1c1e18"/><rect x="1030" y="375" width="3" height="3" fill="#000"/><rect x="1024" y="390" width="2" height="3" fill="#000"/><rect x="1020" y="298" width="3" height="2" fill="#000"/><rect x="1029" y="350" width="2" height="2" fill="#000"/><rect x="1027" y="393" width="2" height="3" fill="#000"/><rect x="1028" y="376" width="2" height="3" fill="#000"/><rect x="1020" y="293" width="2" height="2" fill="#1c1e18"/><rect x="1007" y="295" width="3" height="3" fill="#000"/><rect x="1022" y="351" width="2" height="3" fill="#000"/><rect x="1021" y="296" width="3" height="2" fill="#000"/><rect x="1005" y="302" width="3" height="3" fill="#1c1e18"/><rect x="1012" y="325" width="2" height="2" fill="#000"/><rect x="1020" y="357" width="3" height="2" fill="#1c1e18"/><rect x="1013" y="314" width="2" height="3" fill="#1c1e18"/><rect x="1034" y="394" width="3" height="2" fill="#000"/><rect x="1021" y="389" width="3" height="3" fill="#000"/><rect x="1020" y="336" width="2" height="3" fill="#000"/><rect x="1016" y="327" width="2" height="2" fill="#000"/><rect x="1022" y="363" width="2" height="2" fill="#000"/><rect x="1027" y="384" width="3" height="2" fill="#1c1e18"/><rect x="1009" y="326" width="2" height="2" fill="#000"/><rect x="1027" y="335" width="3" height="3" fill="#000"/><rect x="1032" y="379" width="3" height="3" fill="#000"/><rect x="1019" y="383" width="2" height="3" fill="#000"/><rect x="1031" y="365" width="2" height="3" fill="#1c1e18"/><rect x="1036" y="392" width="3" height="3" fill="#000"/><rect x="1020" y="308" width="2" height="3" fill="#000"/><rect x="1010" y="330" width="2" height="2" fill="#000"/><rect x="1023" y="326" width="2" height="2" fill="#000"/><rect x="1026" y="326" width="2" height="2" fill="#000"/><rect x="1057" y="393" width="2" height="3" fill="#1c1e18"/><rect x="1048" y="341" width="3" height="3" fill="#000"/><rect x="1072" y="383" width="2" height="2" fill="#000"/><rect x="1063" y="350" width="3" height="2" fill="#000"/><rect x="1063" y="348" width="3" height="3" fill="#000"/><rect x="1066" y="399" width="3" height="3" fill="#000"/><rect x="1054" y="401" width="2" height="2" fill="#000"/><rect x="1044" y="349" width="2" height="3" fill="#000"/><rect x="1049" y="360" width="2" height="3" fill="#000"/><rect x="1071" y="393" width="3" height="3" fill="#000"/><rect x="1047" y="348" width="2" height="2" fill="#1c1e18"/><rect x="1059" y="371" width="3" height="2" fill="#000"/><rect x="1068" y="373" width="2" height="2" fill="#1c1e18"/><rect x="1043" y="332" width="3" height="3" fill="#1c1e18"/><rect x="1061" y="402" width="2" height="3" fill="#1c1e18"/><rect x="1067" y="360" width="3" height="3" fill="#000"/><rect x="1055" y="388" width="2" height="3" fill="#000"/><rect x="1060" y="397" width="3" height="2" fill="#000"/><rect x="1054" y="380" width="2" height="3" fill="#000"/><rect x="1064" y="368" width="2" height="2" fill="#000"/><rect x="1069" y="419" width="2" height="2" fill="#000"/><rect x="1059" y="348" width="3" height="3" fill="#1c1e18"/><rect x="1042" y="349" width="2" height="3" fill="#1c1e18"/><rect x="1070" y="376" width="3" height="3" fill="#000"/><rect x="1060" y="384" width="3" height="2" fill="#000"/><rect x="1064" y="396" width="3" height="2" fill="#000"/><rect x="1058" y="342" width="3" height="2" fill="#000"/><rect x="1049" y="351" width="2" height="3" fill="#1c1e18"/><rect x="1041" y="344" width="2" height="3" fill="#000"/><rect x="1064" y="375" width="2" height="2" fill="#000"/><rect x="1056" y="388" width="2" height="3" fill="#1c1e18"/><rect x="1050" y="330" width="3" height="3" fill="#1c1e18"/><rect x="1056" y="366" width="3" height="2" fill="#000"/><rect x="1046" y="330" width="3" height="3" fill="#1c1e18"/><rect x="1075" y="422" width="3" height="2" fill="#1c1e18"/><rect x="1062" y="361" width="2" height="3" fill="#1c1e18"/><rect x="1043" y="324" width="3" height="3" fill="#000"/><rect x="1070" y="403" width="2" height="3" fill="#000"/><rect x="1063" y="392" width="2" height="3" fill="#000"/><rect x="1051" y="380" width="3" height="3" fill="#1c1e18"/><rect x="1080" y="419" width="2" height="3" fill="#000"/><rect x="1078" y="414" width="2" height="3" fill="#1c1e18"/><rect x="1071" y="395" width="3" height="3" fill="#1c1e18"/><rect x="1061" y="358" width="3" height="3" fill="#000"/><rect x="1054" y="383" width="3" height="3" fill="#1c1e18"/><rect x="1067" y="407" width="3" height="3" fill="#000"/><rect x="1055" y="396" width="2" height="3" fill="#000"/><rect x="1043" y="341" width="2" height="2" fill="#000"/><rect x="1073" y="412" width="3" height="3" fill="#000"/><rect x="1062" y="373" width="2" height="2" fill="#000"/><rect x="1037" y="325" width="3" height="3" fill="#1c1e18"/><rect x="1056" y="401" width="3" height="2" fill="#1c1e18"/><rect x="1056" y="380" width="2" height="3" fill="#000"/><rect x="1051" y="346" width="2" height="2" fill="#000"/><rect x="1048" y="376" width="2" height="3" fill="#000"/><rect x="1038" y="328" width="3" height="3" fill="#1c1e18"/><rect x="1062" y="351" width="3" height="3" fill="#1c1e18"/><rect x="1051" y="355" width="3" height="2" fill="#1c1e18"/><rect x="1071" y="418" width="3" height="2" fill="#1c1e18"/><rect x="1058" y="353" width="3" height="3" fill="#000"/><rect x="1062" y="356" width="3" height="3" fill="#000"/><rect x="1067" y="409" width="3" height="2" fill="#1c1e18"/><rect x="1050" y="354" width="3" height="3" fill="#000"/><rect x="1071" y="396" width="3" height="2" fill="#000"/><rect x="1061" y="400" width="3" height="3" fill="#1c1e18"/><rect x="1061" y="404" width="3" height="3" fill="#000"/><rect x="1071" y="372" width="3" height="2" fill="#1c1e18"/><rect x="1065" y="421" width="3" height="3" fill="#000"/><rect x="1079" y="418" width="2" height="3" fill="#000"/><rect x="1060" y="377" width="2" height="2" fill="#000"/><rect x="1057" y="337" width="2" height="2" fill="#1c1e18"/><rect x="1054" y="399" width="2" height="2" fill="#000"/><rect x="1052" y="373" width="3" height="3" fill="#000"/><rect x="1077" y="420" width="3" height="2" fill="#000"/><rect x="1072" y="412" width="3" height="2" fill="#000"/><rect x="1069" y="421" width="2" height="2" fill="#000"/><rect x="1061" y="409" width="3" height="2" fill="#000"/><rect x="1061" y="419" width="2" height="3" fill="#000"/><rect x="1070" y="366" width="2" height="3" fill="#000"/><rect x="1074" y="383" width="3" height="3" fill="#000"/><rect x="1049" y="331" width="3" height="2" fill="#1c1e18"/><rect x="1055" y="352" width="2" height="3" fill="#000"/><rect x="1065" y="410" width="3" height="2" fill="#000"/><rect x="1061" y="394" width="2" height="3" fill="#000"/><rect x="1055" y="382" width="3" height="2" fill="#000"/><rect x="1075" y="411" width="3" height="3" fill="#000"/><rect x="1072" y="377" width="2" height="2" fill="#000"/><rect x="1067" y="356" width="3" height="2" fill="#000"/><rect x="1077" y="398" width="3" height="2" fill="#1c1e18"/><rect x="1073" y="392" width="2" height="2" fill="#1c1e18"/><rect x="994" y="383" width="3" height="2" fill="#000"/><rect x="1003" y="369" width="3" height="2" fill="#000"/><rect x="997" y="386" width="2" height="2" fill="#000"/><rect x="1013" y="367" width="3" height="2" fill="#1c1e18"/><rect x="995" y="398" width="2" height="3" fill="#1c1e18"/><rect x="999" y="366" width="3" height="2" fill="#000"/><rect x="1006" y="390" width="3" height="3" fill="#1c1e18"/><rect x="1000" y="358" width="3" height="3" fill="#000"/><rect x="989" y="351" width="2" height="3" fill="#000"/><rect x="1005" y="383" width="3" height="2" fill="#1c1e18"/><rect x="996" y="370" width="3" height="2" fill="#000"/><rect x="992" y="353" width="3" height="3" fill="#000"/><rect x="985" y="362" width="3" height="2" fill="#000"/><rect x="993" y="375" width="2" height="3" fill="#1c1e18"/><rect x="1024" y="399" width="3" height="3" fill="#1c1e18"/><rect x="1013" y="384" width="3" height="2" fill="#000"/><rect x="988" y="382" width="3" height="3" fill="#000"/><rect x="1024" y="400" width="3" height="3" fill="#1c1e18"/><rect x="992" y="344" width="3" height="2" fill="#000"/><rect x="987" y="367" width="2" height="2" fill="#000"/><rect x="990" y="324" width="3" height="3" fill="#000"/><rect x="999" y="405" width="2" height="3" fill="#000"/><rect x="981" y="333" width="3" height="3" fill="#000"/><rect x="992" y="367" width="3" height="2" fill="#1c1e18"/><rect x="1005" y="357" width="3" height="3" fill="#1c1e18"/><rect x="998" y="384" width="2" height="2" fill="#1c1e18"/><rect x="997" y="374" width="2" height="2" fill="#000"/><rect x="1004" y="339" width="3" height="3" fill="#1c1e18"/><rect x="984" y="373" width="2" height="3" fill="#1c1e18"/><rect x="997" y="384" width="3" height="3" fill="#000"/><rect x="1004" y="341" width="3" height="3" fill="#000"/><rect x="994" y="336" width="2" height="2" fill="#1c1e18"/><rect x="1003" y="369" width="3" height="2" fill="#1c1e18"/><rect x="1008" y="351" width="3" height="3" fill="#000"/><rect x="993" y="382" width="3" height="3" fill="#000"/><rect x="1016" y="386" width="3" height="2" fill="#1c1e18"/><rect x="1000" y="358" width="3" height="3" fill="#1c1e18"/><rect x="996" y="326" width="2" height="3" fill="#1c1e18"/><rect x="1000" y="360" width="2" height="2" fill="#000"/><rect x="1013" y="361" width="2" height="3" fill="#1c1e18"/><rect x="1004" y="360" width="2" height="2" fill="#000"/><rect x="1001" y="387" width="3" height="3" fill="#000"/><rect x="998" y="395" width="2" height="2" fill="#1c1e18"/><rect x="981" y="340" width="3" height="2" fill="#1c1e18"/><rect x="1012" y="401" width="3" height="2" fill="#000"/><rect x="1004" y="376" width="3" height="3" fill="#000"/><rect x="998" y="400" width="2" height="3" fill="#1c1e18"/><rect x="995" y="377" width="2" height="2" fill="#000"/><rect x="986" y="380" width="3" height="3" fill="#000"/><rect x="1002" y="351" width="3" height="3" fill="#1c1e18"/><rect x="994" y="483" width="3" height="3" fill="#000"/><rect x="1007" y="433" width="3" height="2" fill="#000"/><rect x="1014" y="424" width="3" height="2" fill="#000"/><rect x="994" y="450" width="2" height="2" fill="#000"/><rect x="1022" y="413" width="2" height="3" fill="#000"/><rect x="1036" y="447" width="3" height="3" fill="#000"/><rect x="998" y="486" width="3" height="3" fill="#000"/><rect x="965" y="480" width="3" height="3" fill="#000"/><rect x="1000" y="423" width="3" height="3" fill="#000"/><rect x="1001" y="410" width="2" height="3" fill="#000"/><rect x="1007" y="440" width="2" height="2" fill="#000"/><rect x="1008" y="468" width="3" height="3" fill="#000"/><rect x="1034" y="427" width="2" height="3" fill="#000"/><rect x="1004" y="421" width="2" height="3" fill="#000"/><rect x="977" y="468" width="2" height="3" fill="#000"/><rect x="1037" y="454" width="2" height="3" fill="#000"/><rect x="1037" y="412" width="3" height="3" fill="#000"/><rect x="975" y="476" width="2" height="2" fill="#000"/><rect x="1012" y="465" width="2" height="2" fill="#000"/><rect x="1047" y="417" width="3" height="2" fill="#000"/><rect x="1030" y="437" width="3" height="2" fill="#000"/><rect x="971" y="474" width="3" height="3" fill="#000"/><rect x="1019" y="422" width="3" height="2" fill="#000"/><rect x="1030" y="463" width="2" height="2" fill="#000"/><rect x="968" y="464" width="3" height="2" fill="#000"/><rect x="1026" y="474" width="2" height="3" fill="#000"/><rect x="1005" y="468" width="2" height="3" fill="#000"/><rect x="976" y="444" width="3" height="3" fill="#000"/><rect x="985" y="487" width="2" height="2" fill="#000"/><rect x="1002" y="456" width="3" height="3" fill="#000"/><rect x="996" y="487" width="3" height="3" fill="#000"/><rect x="1004" y="467" width="2" height="3" fill="#000"/><rect x="984" y="483" width="3" height="3" fill="#000"/><rect x="987" y="414" width="3" height="3" fill="#000"/><rect x="990" y="440" width="2" height="3" fill="#000"/><rect x="1025" y="430" width="3" height="3" fill="#000"/><rect x="1043" y="450" width="3" height="2" fill="#000"/><rect x="992" y="440" width="2" height="3" fill="#000"/><rect x="1012" y="443" width="2" height="2" fill="#000"/><rect x="1017" y="448" width="3" height="3" fill="#000"/><rect x="1046" y="437" width="3" height="3" fill="#000"/><rect x="1037" y="442" width="2" height="3" fill="#000"/><rect x="1034" y="444" width="2" height="3" fill="#000"/><rect x="1017" y="450" width="2" height="2" fill="#000"/><rect x="985" y="464" width="3" height="3" fill="#000"/><rect x="1020" y="428" width="2" height="2" fill="#000"/><rect x="1023" y="436" width="3" height="3" fill="#000"/><rect x="975" y="455" width="3" height="2" fill="#000"/><rect x="1027" y="419" width="2" height="3" fill="#000"/><rect x="1029" y="468" width="2" height="3" fill="#000"/><rect x="1012" y="444" width="2" height="2" fill="#000"/><rect x="1004" y="426" width="2" height="2" fill="#000"/><rect x="1021" y="437" width="3" height="3" fill="#000"/><rect x="1008" y="419" width="2" height="2" fill="#000"/><rect x="997" y="427" width="3" height="3" fill="#000"/><rect x="1014" y="413" width="3" height="3" fill="#000"/><rect x="1051" y="421" width="2" height="2" fill="#000"/><rect x="1000" y="467" width="3" height="2" fill="#000"/><rect x="982" y="455" width="3" height="2" fill="#000"/><rect x="1024" y="415" width="2" height="3" fill="#000"/><rect x="992" y="441" width="2" height="2" fill="#000"/><rect x="1045" y="437" width="2" height="3" fill="#000"/><rect x="1044" y="431" width="2" height="2" fill="#000"/><rect x="1038" y="403" width="3" height="3" fill="#000"/><rect x="993" y="415" width="2" height="3" fill="#000"/><rect x="1052" y="413" width="3" height="2" fill="#000"/><rect x="987" y="445" width="2" height="2" fill="#000"/><rect x="986" y="457" width="2" height="2" fill="#000"/><rect x="1047" y="438" width="2" height="3" fill="#000"/><rect x="1029" y="408" width="3" height="3" fill="#000"/><polygon points="1049.0,281.0 1060.0,279.0 1082.0,298.0 1102.0,330.0 1110.0,352.0 1095.0,350.0 1078.0,318.0 1062.0,298.0" fill="#c6ae88" /><polygon points="1096.0,262.0 1116.0,258.0 1120.0,266.0 1104.0,276.0" fill="#d8c29a" /><rect x="1062" y="278" width="2" height="3" fill="#000"/><rect x="1099" y="268" width="2" height="3" fill="#000"/><rect x="1094" y="274" width="3" height="2" fill="#000"/><rect x="1078" y="270" width="2" height="3" fill="#000"/><rect x="1095" y="272" width="3" height="3" fill="#000"/><rect x="1078" y="275" width="3" height="2" fill="#000"/><rect x="1072" y="275" width="2" height="3" fill="#000"/><rect x="1066" y="273" width="2" height="3" fill="#000"/><rect x="1071" y="265" width="3" height="2" fill="#000"/><rect x="1086" y="267" width="3" height="3" fill="#000"/><rect x="1097" y="268" width="3" height="3" fill="#000"/><rect x="1063" y="266" width="2" height="3" fill="#000"/><rect x="1068" y="261" width="3" height="2" fill="#000"/><rect x="1056" y="267" width="3" height="2" fill="#000"/><rect x="1082" y="271" width="2" height="3" fill="#000"/><rect x="1096" y="267" width="2" height="3" fill="#000"/><rect x="1061" y="269" width="3" height="3" fill="#000"/><rect x="1072" y="263" width="3" height="3" fill="#000"/><rect x="1059" y="281" width="2" height="3" fill="#000"/><rect x="1066" y="273" width="3" height="3" fill="#000"/><rect x="1064" y="283" width="3" height="3" fill="#000"/><rect x="1091" y="276" width="3" height="2" fill="#000"/><rect x="1059" y="265" width="2" height="3" fill="#000"/><rect x="1093" y="273" width="2" height="2" fill="#000"/><rect x="1073" y="275" width="3" height="2" fill="#000"/><rect x="1099" y="268" width="2" height="3" fill="#000"/><rect x="1058" y="264" width="3" height="2" fill="#000"/><rect x="1090" y="277" width="2" height="3" fill="#000"/><rect x="1077" y="268" width="2" height="3" fill="#000"/><rect x="1090" y="267" width="3" height="3" fill="#000"/><rect x="1069" y="277" width="3" height="3" fill="#000"/><rect x="1076" y="260" width="2" height="2" fill="#000"/><rect x="1064" y="266" width="3" height="3" fill="#000"/><rect x="1076" y="273" width="3" height="2" fill="#000"/><rect x="1091" y="272" width="3" height="2" fill="#000"/><polygon points="1073.5,340.0 1111.6,340.0 1121.2,373.5 1083.0,359.2" fill="#e6e6ea" /><polygon points="1100.0,322.0 1262.0,310.0 1300.0,330.0 1301.0,420.0 1103.0,420.0 1100.0,380.0" fill="#57564c" /><polygon points="1109.0,289.6 1184.0,289.6 1186.0,322.6 1112.0,324.0" fill="#a86a70" /><polygon points="1112.0,300.0 1184.0,298.0 1184.0,306.0 1112.0,308.0" fill="#c8a0a0" /><polygon points="1112.0,312.0 1184.0,310.0 1184.0,316.0 1112.0,318.0" fill="#a82838" /><polygon points="1138.5,238.3 1178.8,236.0 1180.0,297.0 1140.0,297.0" fill="#d8dad4" /><polygon points="1140.0,250.0 1146.0,250.0 1146.0,297.0 1140.0,297.0" fill="#2a4a80" /><circle cx="1194" cy="234.5" r="6" fill="#b8308a"/><path d="M1192 240 L1186 282" fill="none" stroke="#8a9a70" stroke-width="1.5"/><polygon points="1208.0,231.0 1246.6,229.0 1248.0,284.0 1210.0,286.0" fill="#ececea" /><polygon points="1213.6,251.0 1248.5,250.0 1248.5,287.8 1215.0,289.0" fill="#c8bca0" /><polygon points="1199.0,275.0 1263.0,273.0 1263.0,300.6 1201.0,302.0" fill="#90a8d8" /><polygon points="1213.6,297.0 1263.0,296.0 1262.0,313.5 1215.0,314.0" fill="#a08060" /><polygon points="1151.0,313.5 1190.0,316.0 1195.0,337.3 1160.0,335.0" fill="#e8dcb0" /><polygon points="1122.0,326.3 1160.0,328.0 1162.3,359.3 1126.0,360.0" fill="#eee2dc" /><polygon points="1160.5,337.3 1195.3,337.3 1195.0,348.3 1162.0,349.0" fill="#c03020" /><polygon points="1164.0,344.6 1200.0,344.0 1202.6,366.6 1168.0,366.0" fill="#3058c0" /><polygon points="1222.8,335.5 1239.3,335.5 1239.3,353.8 1222.8,353.8" fill="#2048c0" /><polygon points="1197.0,355.6 1241.0,355.0 1241.0,372.0 1197.0,372.0" fill="#e8e8e8" /><polygon points="1233.8,315.3 1257.6,315.3 1257.6,333.6 1236.0,333.6" fill="#d8e890" /><polygon points="1100.0,339.0 1122.0,339.0 1122.0,374.0 1100.0,374.0" fill="#ececf0" /><polygon points="1100.0,260.0 1118.0,262.0 1114.0,276.0 1100.0,276.0" fill="#d8c8a0" /><polygon points="1190.0,330.0 1222.0,326.0 1222.0,355.0 1195.0,356.0" fill="#c8b0b8" /><polygon points="1140.0,366.0 1196.0,366.0 1196.0,380.0 1140.0,382.0" fill="#8a8aa0" /><rect x="1214" y="297" width="2" height="3" fill="#000"/><rect x="1111" y="326" width="2" height="2" fill="#0a5a84"/><rect x="1176" y="347" width="3" height="3" fill="#0a5a84"/><rect x="1203" y="373" width="3" height="2" fill="#0a5a84"/><rect x="1166" y="375" width="3" height="2" fill="#0a5a84"/><rect x="1260" y="296" width="3" height="3" fill="#000"/><rect x="1238" y="315" width="3" height="2" fill="#111"/><rect x="1155" y="293" width="2" height="3" fill="#000"/><rect x="1188" y="347" width="2" height="2" fill="#000"/><rect x="1144" y="319" width="3" height="3" fill="#0a5a84"/><rect x="1116" y="290" width="2" height="2" fill="#0a5a84"/><rect x="1198" y="346" width="3" height="3" fill="#000"/><rect x="1170" y="346" width="3" height="3" fill="#000"/><rect x="1158" y="347" width="3" height="2" fill="#0a5a84"/><rect x="1180" y="321" width="3" height="2" fill="#111"/><rect x="1161" y="350" width="2" height="3" fill="#111"/><rect x="1133" y="326" width="3" height="2" fill="#111"/><rect x="1193" y="293" width="2" height="2" fill="#000"/><rect x="1111" y="332" width="3" height="2" fill="#0a5a84"/><rect x="1194" y="320" width="3" height="3" fill="#111"/><rect x="1126" y="349" width="3" height="3" fill="#000"/><rect x="1157" y="307" width="3" height="2" fill="#111"/><rect x="1143" y="311" width="2" height="2" fill="#000"/><rect x="1137" y="374" width="2" height="2" fill="#111"/><rect x="1150" y="324" width="3" height="3" fill="#000"/><rect x="1112" y="301" width="3" height="3" fill="#000"/><rect x="1251" y="357" width="2" height="2" fill="#111"/><rect x="1142" y="355" width="2" height="3" fill="#000"/><rect x="1130" y="318" width="3" height="3" fill="#111"/><rect x="1214" y="382" width="2" height="2" fill="#000"/><rect x="1218" y="362" width="2" height="3" fill="#111"/><rect x="1240" y="304" width="3" height="3" fill="#111"/><rect x="1248" y="333" width="3" height="2" fill="#111"/><rect x="1230" y="313" width="3" height="2" fill="#000"/><rect x="1145" y="304" width="2" height="3" fill="#0a5a84"/><rect x="1234" y="335" width="3" height="3" fill="#0a5a84"/><rect x="1185" y="321" width="3" height="2" fill="#111"/><rect x="1243" y="315" width="2" height="2" fill="#111"/><rect x="1242" y="363" width="2" height="2" fill="#000"/><rect x="1182" y="368" width="2" height="2" fill="#111"/><rect x="1220" y="374" width="2" height="3" fill="#0a5a84"/><rect x="1204" y="339" width="3" height="2" fill="#0a5a84"/><rect x="1248" y="306" width="2" height="3" fill="#111"/><rect x="1173" y="362" width="3" height="3" fill="#000"/><rect x="1257" y="288" width="3" height="2" fill="#0a5a84"/><rect x="1248" y="360" width="3" height="3" fill="#000"/><rect x="1164" y="312" width="3" height="3" fill="#111"/><rect x="1221" y="303" width="2" height="3" fill="#0a5a84"/><rect x="1149" y="330" width="3" height="3" fill="#0a5a84"/><rect x="1260" y="371" width="2" height="3" fill="#0a5a84"/><rect x="1230" y="367" width="3" height="3" fill="#111"/><rect x="1228" y="362" width="2" height="2" fill="#0a5a84"/><rect x="1149" y="348" width="2" height="3" fill="#111"/><rect x="1109" y="300" width="3" height="2" fill="#111"/><rect x="1120" y="316" width="3" height="2" fill="#000"/><rect x="1190" y="363" width="3" height="3" fill="#000"/><rect x="1247" y="347" width="3" height="2" fill="#0a5a84"/><rect x="1170" y="294" width="3" height="2" fill="#0a5a84"/><rect x="1179" y="308" width="3" height="3" fill="#0a5a84"/><rect x="1165" y="305" width="2" height="3" fill="#0a5a84"/><rect x="1133" y="307" width="3" height="3" fill="#111"/><rect x="1260" y="323" width="3" height="3" fill="#0a5a84"/><rect x="1158" y="373" width="2" height="2" fill="#0a5a84"/><rect x="1129" y="332" width="2" height="3" fill="#000"/><rect x="1132" y="345" width="3" height="3" fill="#0a5a84"/><rect x="1119" y="346" width="3" height="3" fill="#0a5a84"/><rect x="1117" y="305" width="3" height="2" fill="#0a5a84"/><rect x="1258" y="376" width="3" height="3" fill="#0a5a84"/><rect x="1209" y="339" width="3" height="3" fill="#111"/><rect x="1201" y="325" width="3" height="2" fill="#000"/><rect x="1179" y="314" width="2" height="2" fill="#0a5a84"/><rect x="1210" y="336" width="3" height="3" fill="#0a5a84"/><rect x="1202" y="363" width="2" height="2" fill="#000"/><rect x="1218" y="381" width="3" height="3" fill="#111"/><rect x="1178" y="309" width="2" height="3" fill="#000"/><rect x="1149" y="341" width="3" height="2" fill="#000"/><rect x="1189" y="347" width="3" height="3" fill="#111"/><rect x="1247" y="310" width="2" height="3" fill="#000"/><rect x="1122" y="353" width="2" height="3" fill="#0a5a84"/><rect x="1152" y="335" width="2" height="3" fill="#0a5a84"/><rect x="1138" y="359" width="2" height="2" fill="#0a5a84"/><rect x="1124" y="293" width="3" height="2" fill="#111"/><rect x="1153" y="312" width="2" height="3" fill="#111"/><rect x="1164" y="341" width="2" height="3" fill="#111"/><rect x="1201" y="299" width="2" height="2" fill="#111"/><rect x="1205" y="299" width="2" height="2" fill="#111"/><rect x="1159" y="376" width="2" height="2" fill="#000"/><rect x="1174" y="328" width="2" height="2" fill="#0a5a84"/><rect x="1226" y="337" width="2" height="3" fill="#000"/><rect x="1253" y="312" width="3" height="3" fill="#111"/><rect x="1200" y="351" width="3" height="3" fill="#111"/><rect x="1210" y="287" width="2" height="3" fill="#0a5a84"/><rect x="1205" y="298" width="2" height="2" fill="#111"/><rect x="1114" y="293" width="2" height="3" fill="#0a5a84"/><rect x="1196" y="350" width="3" height="3" fill="#111"/><rect x="1138" y="327" width="2" height="2" fill="#111"/><rect x="1192" y="303" width="3" height="2" fill="#111"/><rect x="1250" y="307" width="2" height="2" fill="#111"/><rect x="1234" y="328" width="3" height="3" fill="#000"/><rect x="1186" y="323" width="2" height="3" fill="#111"/><rect x="1217" y="292" width="3" height="2" fill="#111"/><rect x="1207" y="370" width="2" height="2" fill="#000"/><rect x="1243" y="378" width="2" height="2" fill="#0a5a84"/><rect x="1251" y="305" width="3" height="3" fill="#0a5a84"/><rect x="1259" y="316" width="2" height="2" fill="#111"/><rect x="1141" y="363" width="2" height="2" fill="#000"/><rect x="1248" y="294" width="3" height="2" fill="#0a5a84"/><rect x="1255" y="347" width="3" height="3" fill="#000"/><rect x="1254" y="295" width="3" height="3" fill="#0a5a84"/><rect x="1250" y="308" width="3" height="2" fill="#0a5a84"/><rect x="1218" y="327" width="3" height="2" fill="#0a5a84"/><rect x="1218" y="331" width="2" height="2" fill="#111"/><rect x="1232" y="291" width="2" height="3" fill="#000"/><rect x="1128" y="318" width="3" height="3" fill="#000"/><rect x="1231" y="343" width="2" height="2" fill="#0a5a84"/><rect x="1252" y="308" width="3" height="2" fill="#000"/><rect x="1172" y="353" width="3" height="2" fill="#111"/><rect x="1188" y="358" width="2" height="2" fill="#0a5a84"/><rect x="1145" y="333" width="2" height="2" fill="#0a5a84"/><rect x="1197" y="342" width="2" height="2" fill="#111"/><rect x="1163" y="373" width="2" height="2" fill="#111"/><rect x="1229" y="374" width="2" height="3" fill="#111"/><rect x="1190" y="382" width="3" height="3" fill="#111"/><rect x="1126" y="358" width="2" height="3" fill="#0a5a84"/><rect x="1178" y="366" width="3" height="3" fill="#0a5a84"/><rect x="1238" y="349" width="3" height="2" fill="#000"/><rect x="1225" y="326" width="2" height="3" fill="#111"/><rect x="1144" y="328" width="2" height="3" fill="#111"/><rect x="1261" y="284" width="3" height="2" fill="#111"/><rect x="1132" y="312" width="3" height="2" fill="#111"/><rect x="1273" y="393" width="2" height="2" fill="#000"/><rect x="1170" y="396" width="2" height="3" fill="#1a1a14"/><rect x="1215" y="382" width="2" height="3" fill="#1a1a14"/><rect x="1218" y="378" width="3" height="2" fill="#000"/><rect x="1128" y="372" width="3" height="2" fill="#1a1a14"/><rect x="1156" y="378" width="2" height="2" fill="#000"/><rect x="1235" y="411" width="3" height="2" fill="#000"/><rect x="1167" y="411" width="2" height="2" fill="#000"/><rect x="1278" y="387" width="3" height="3" fill="#000"/><rect x="1111" y="394" width="3" height="3" fill="#000"/><rect x="1228" y="418" width="2" height="3" fill="#000"/><rect x="1140" y="404" width="3" height="2" fill="#000"/><rect x="1232" y="377" width="3" height="3" fill="#1a1a14"/><rect x="1254" y="419" width="2" height="2" fill="#000"/><rect x="1224" y="373" width="2" height="3" fill="#000"/><rect x="1249" y="402" width="2" height="2" fill="#000"/><rect x="1243" y="413" width="3" height="2" fill="#000"/><rect x="1292" y="383" width="3" height="3" fill="#000"/><rect x="1117" y="403" width="3" height="3" fill="#1a1a14"/><rect x="1272" y="378" width="3" height="2" fill="#1a1a14"/><rect x="1186" y="392" width="2" height="3" fill="#000"/><rect x="1176" y="374" width="2" height="3" fill="#1a1a14"/><rect x="1102" y="411" width="2" height="2" fill="#000"/><rect x="1220" y="419" width="2" height="2" fill="#1a1a14"/><rect x="1139" y="409" width="3" height="3" fill="#1a1a14"/><rect x="1294" y="384" width="3" height="2" fill="#1a1a14"/><rect x="1136" y="403" width="3" height="2" fill="#000"/><rect x="1268" y="402" width="2" height="3" fill="#1a1a14"/><rect x="1289" y="374" width="3" height="2" fill="#000"/><rect x="1243" y="415" width="3" height="3" fill="#000"/><rect x="1240" y="409" width="3" height="2" fill="#1a1a14"/><rect x="1147" y="393" width="2" height="3" fill="#1a1a14"/><rect x="1210" y="409" width="2" height="3" fill="#000"/><rect x="1203" y="393" width="2" height="2" fill="#000"/><rect x="1170" y="375" width="3" height="2" fill="#000"/><rect x="1157" y="418" width="2" height="3" fill="#000"/><rect x="1297" y="385" width="2" height="3" fill="#1a1a14"/><rect x="1128" y="412" width="2" height="3" fill="#000"/><rect x="1146" y="408" width="2" height="3" fill="#1a1a14"/><rect x="1283" y="419" width="3" height="3" fill="#1a1a14"/><polygon points="1263.0,262.0 1300.0,246.0 1335.0,248.0 1340.0,258.0 1300.0,256.0 1275.0,275.0 1268.0,300.0" fill="#0a5a84" /><polygon points="1290.0,330.0 1302.0,330.0 1312.0,385.0 1294.0,385.0" fill="#0a5a84" /><polygon points="1345.0,300.0 1372.0,290.0 1386.0,310.0 1386.0,385.0 1350.0,385.0" fill="#0a5a84" /><polygon points="1299.8,251.2 1338.3,256.7 1341.9,280.5 1329.1,311.6 1325.4,385.0 1301.6,385.0 1292.4,330.0 1279.6,297.0 1265.0,280.5 1283.3,265.8" fill="#1c211a" /><polygon points="1338.3,264.0 1371.3,280.5 1353.0,304.3 1345.6,348.3 1338.3,381.3 1320.0,366.6 1325.4,311.6" fill="#f2f2f2" /><polygon points="1350.0,300.0 1372.0,290.0 1386.0,310.0 1380.0,385.0 1345.0,385.0" fill="#1c211a" /><polygon points="1355.0,320.0 1372.0,310.0 1378.0,385.0 1352.0,385.0" fill="#0a5a84" /><polygon points="1280.0,295.0 1294.0,300.0 1300.0,330.0 1282.0,330.0" fill="#e0dada" /><rect x="1363" y="356" width="2" height="3" fill="#000"/><rect x="1384" y="346" width="2" height="3" fill="#1c211a"/><rect x="1351" y="304" width="3" height="2" fill="#000"/><rect x="1344" y="263" width="2" height="3" fill="#000"/><rect x="1359" y="377" width="2" height="2" fill="#000"/><rect x="1322" y="266" width="2" height="3" fill="#1c211a"/><rect x="1340" y="281" width="2" height="3" fill="#000"/><rect x="1337" y="259" width="2" height="2" fill="#000"/><rect x="1334" y="331" width="2" height="2" fill="#000"/><rect x="1354" y="350" width="3" height="3" fill="#000"/><rect x="1317" y="288" width="2" height="2" fill="#1c211a"/><rect x="1345" y="302" width="2" height="2" fill="#000"/><rect x="1343" y="364" width="2" height="3" fill="#1c211a"/><rect x="1336" y="322" width="2" height="3" fill="#000"/><rect x="1337" y="325" width="3" height="3" fill="#1c211a"/><rect x="1316" y="289" width="3" height="2" fill="#1c211a"/><rect x="1297" y="363" width="2" height="3" fill="#000"/><rect x="1335" y="296" width="2" height="2" fill="#000"/><rect x="1268" y="274" width="3" height="2" fill="#1c211a"/><rect x="1289" y="257" width="2" height="2" fill="#000"/><rect x="1277" y="348" width="2" height="2" fill="#000"/><rect x="1339" y="292" width="2" height="3" fill="#000"/><rect x="1325" y="283" width="2" height="3" fill="#000"/><rect x="1329" y="362" width="3" height="2" fill="#000"/><rect x="1300" y="315" width="3" height="3" fill="#1c211a"/><rect x="1337" y="368" width="2" height="3" fill="#000"/><rect x="1279" y="270" width="2" height="2" fill="#1c211a"/><rect x="1361" y="310" width="2" height="2" fill="#1c211a"/><rect x="1373" y="305" width="3" height="2" fill="#1c211a"/><rect x="1383" y="358" width="2" height="3" fill="#000"/><rect x="1334" y="321" width="2" height="3" fill="#000"/><rect x="1288" y="331" width="2" height="3" fill="#000"/><rect x="1358" y="347" width="2" height="2" fill="#1c211a"/><rect x="1373" y="348" width="2" height="3" fill="#000"/><rect x="1295" y="268" width="3" height="2" fill="#000"/><rect x="1296" y="280" width="2" height="3" fill="#000"/><rect x="1285" y="297" width="3" height="2" fill="#000"/><rect x="1358" y="274" width="3" height="3" fill="#000"/><rect x="1303" y="281" width="3" height="2" fill="#000"/><rect x="1279" y="319" width="3" height="3" fill="#000"/><rect x="1372" y="324" width="2" height="2" fill="#000"/><rect x="1376" y="307" width="2" height="3" fill="#1c211a"/><rect x="1313" y="361" width="2" height="2" fill="#000"/><rect x="1311" y="258" width="2" height="2" fill="#1c211a"/><rect x="1317" y="360" width="3" height="3" fill="#000"/><rect x="1373" y="337" width="2" height="3" fill="#000"/><rect x="1354" y="385" width="3" height="3" fill="#000"/><rect x="1372" y="366" width="2" height="3" fill="#000"/><rect x="1314" y="382" width="2" height="2" fill="#000"/><rect x="1294" y="281" width="3" height="3" fill="#1c211a"/><rect x="1310" y="311" width="2" height="3" fill="#000"/><rect x="1322" y="376" width="3" height="3" fill="#1c211a"/><rect x="1334" y="367" width="3" height="3" fill="#000"/><rect x="1319" y="344" width="3" height="3" fill="#000"/><rect x="1338" y="268" width="2" height="2" fill="#000"/><rect x="1365" y="291" width="3" height="3" fill="#000"/><rect x="1317" y="254" width="3" height="2" fill="#000"/><rect x="1280" y="321" width="3" height="2" fill="#000"/><rect x="1370" y="364" width="3" height="2" fill="#000"/><rect x="1348" y="301" width="2" height="2" fill="#000"/><rect x="1373" y="321" width="3" height="2" fill="#000"/><rect x="1312" y="297" width="2" height="2" fill="#1c211a"/><rect x="1289" y="385" width="2" height="2" fill="#1c211a"/><rect x="1281" y="274" width="2" height="3" fill="#000"/><rect x="1292" y="341" width="2" height="3" fill="#000"/><rect x="1316" y="276" width="3" height="2" fill="#000"/><rect x="1322" y="374" width="3" height="3" fill="#1c211a"/><rect x="1316" y="291" width="2" height="3" fill="#000"/><rect x="1285" y="320" width="3" height="3" fill="#000"/><rect x="1276" y="334" width="2" height="2" fill="#1c211a"/><rect x="1322" y="354" width="3" height="3" fill="#000"/><rect x="1289" y="250" width="3" height="3" fill="#1c211a"/><rect x="1299" y="256" width="2" height="3" fill="#000"/><rect x="1292" y="250" width="3" height="2" fill="#000"/><rect x="1291" y="373" width="2" height="2" fill="#1c211a"/><rect x="1361" y="380" width="3" height="3" fill="#000"/><rect x="1381" y="370" width="3" height="2" fill="#1c211a"/><rect x="1377" y="323" width="2" height="2" fill="#1c211a"/><rect x="1285" y="284" width="3" height="3" fill="#000"/><rect x="1364" y="361" width="3" height="2" fill="#1c211a"/><rect x="1326" y="380" width="3" height="2" fill="#1c211a"/><rect x="1325" y="378" width="3" height="3" fill="#000"/><rect x="1317" y="345" width="3" height="3" fill="#1c211a"/><rect x="1327" y="362" width="3" height="3" fill="#000"/><rect x="1350" y="364" width="2" height="3" fill="#000"/><rect x="1309" y="274" width="3" height="2" fill="#000"/><rect x="1276" y="265" width="3" height="3" fill="#000"/><rect x="1273" y="329" width="2" height="3" fill="#000"/><rect x="1296" y="295" width="2" height="3" fill="#000"/><rect x="1351" y="324" width="2" height="3" fill="#000"/><rect x="1319" y="326" width="3" height="3" fill="#000"/><rect x="1380" y="380" width="3" height="2" fill="#000"/><rect x="1366" y="381" width="2" height="2" fill="#1c211a"/><rect x="1297" y="375" width="3" height="3" fill="#000"/><rect x="1276" y="293" width="3" height="3" fill="#1c211a"/><rect x="1290" y="346" width="2" height="2" fill="#000"/><rect x="1336" y="360" width="3" height="3" fill="#1c211a"/><rect x="1312" y="342" width="3" height="2" fill="#1c211a"/><rect x="1346" y="275" width="2" height="3" fill="#000"/><rect x="1379" y="287" width="3" height="2" fill="#000"/><rect x="1356" y="295" width="2" height="2" fill="#000"/><rect x="1271" y="293" width="2" height="3" fill="#1c211a"/><rect x="1323" y="298" width="3" height="3" fill="#000"/><rect x="1370" y="332" width="2" height="3" fill="#000"/><rect x="1366" y="266" width="2" height="2" fill="#000"/><rect x="1331" y="280" width="2" height="3" fill="#1c211a"/><rect x="1287" y="368" width="2" height="3" fill="#000"/><rect x="1331" y="332" width="3" height="2" fill="#1c211a"/><rect x="1317" y="266" width="2" height="2" fill="#000"/><rect x="1310" y="287" width="2" height="3" fill="#000"/><rect x="1371" y="311" width="2" height="2" fill="#1c211a"/><rect x="1304" y="386" width="2" height="3" fill="#000"/><rect x="1306" y="331" width="2" height="2" fill="#1c211a"/><rect x="1367" y="291" width="2" height="2" fill="#1c211a"/><rect x="1316" y="274" width="2" height="2" fill="#1c211a"/><rect x="1364" y="382" width="3" height="2" fill="#1c211a"/><rect x="1374" y="272" width="2" height="2" fill="#000"/><rect x="1293" y="291" width="3" height="2" fill="#000"/><rect x="1281" y="281" width="3" height="3" fill="#000"/><rect x="1352" y="361" width="2" height="3" fill="#000"/><rect x="1314" y="272" width="2" height="3" fill="#000"/><rect x="1329" y="316" width="3" height="3" fill="#000"/><rect x="1316" y="375" width="3" height="3" fill="#000"/><rect x="1309" y="332" width="2" height="3" fill="#000"/><rect x="1332" y="322" width="3" height="2" fill="#000"/><rect x="1282" y="317" width="3" height="3" fill="#000"/><rect x="1270" y="291" width="3" height="2" fill="#000"/><rect x="1337" y="276" width="3" height="2" fill="#000"/><rect x="1363" y="298" width="3" height="2" fill="#1c211a"/><rect x="1380" y="334" width="3" height="3" fill="#000"/><rect x="1363" y="362" width="2" height="3" fill="#1c211a"/><rect x="1330" y="360" width="2" height="3" fill="#000"/><rect x="1315" y="262" width="3" height="3" fill="#000"/><rect x="1320" y="280" width="3" height="3" fill="#1c211a"/><rect x="1283" y="341" width="2" height="2" fill="#000"/><rect x="1379" y="311" width="2" height="3" fill="#1c211a"/><rect x="1335" y="317" width="3" height="3" fill="#000"/><rect x="1306" y="315" width="3" height="3" fill="#1c211a"/><rect x="1355" y="339" width="2" height="3" fill="#000"/><rect x="1307" y="247" width="2" height="3" fill="#1c211a"/><rect x="1357" y="282" width="3" height="2" fill="#000"/><rect x="1325" y="303" width="3" height="2" fill="#000"/><rect x="1288" y="316" width="3" height="3" fill="#000"/><rect x="1346" y="361" width="3" height="2" fill="#000"/><rect x="1278" y="297" width="3" height="3" fill="#000"/><rect x="1293" y="294" width="3" height="2" fill="#000"/><rect x="1375" y="290" width="3" height="2" fill="#000"/><rect x="1336" y="329" width="3" height="3" fill="#000"/><rect x="1366" y="381" width="2" height="2" fill="#000"/><rect x="1384" y="360" width="3" height="3" fill="#000"/><rect x="1295" y="374" width="2" height="3" fill="#000"/><rect x="1334" y="283" width="2" height="3" fill="#1c211a"/><rect x="1296" y="355" width="2" height="3" fill="#000"/><rect x="1318" y="299" width="2" height="2" fill="#000"/><rect x="1280" y="350" width="2" height="2" fill="#000"/><rect x="1332" y="378" width="3" height="2" fill="#000"/><rect x="1292" y="385" width="3" height="2" fill="#1c211a"/><rect x="1269" y="321" width="3" height="3" fill="#000"/><rect x="1328" y="269" width="3" height="3" fill="#1c211a"/><rect x="1314" y="320" width="3" height="3" fill="#000"/><polygon points="1103.0,418.0 1375.0,383.0 1410.0,394.0 1410.0,505.0 1330.0,512.0 1230.0,522.0 1178.7,545.0 1106.9,429.0" fill="#35352c" /><rect x="1392" y="497" width="3" height="3" fill="#000"/><rect x="1319" y="451" width="3" height="3" fill="#000"/><rect x="1286" y="408" width="3" height="3" fill="#000"/><rect x="1140" y="465" width="3" height="2" fill="#585544"/><rect x="1388" y="485" width="3" height="3" fill="#585544"/><rect x="1338" y="439" width="2" height="2" fill="#000"/><rect x="1288" y="495" width="3" height="2" fill="#585544"/><rect x="1171" y="528" width="3" height="3" fill="#000"/><rect x="1310" y="443" width="3" height="2" fill="#000"/><rect x="1255" y="468" width="3" height="2" fill="#585544"/><rect x="1329" y="425" width="2" height="2" fill="#000"/><rect x="1267" y="519" width="2" height="2" fill="#585544"/><rect x="1347" y="445" width="3" height="3" fill="#1a1a12"/><rect x="1245" y="481" width="3" height="2" fill="#000"/><rect x="1239" y="409" width="3" height="3" fill="#000"/><rect x="1149" y="468" width="2" height="2" fill="#000"/><rect x="1190" y="493" width="2" height="2" fill="#000"/><rect x="1248" y="456" width="2" height="2" fill="#000"/><rect x="1231" y="428" width="2" height="3" fill="#1a1a12"/><rect x="1299" y="497" width="3" height="2" fill="#000"/><rect x="1365" y="395" width="2" height="2" fill="#000"/><rect x="1364" y="445" width="2" height="3" fill="#000"/><rect x="1231" y="480" width="2" height="3" fill="#585544"/><rect x="1385" y="475" width="2" height="3" fill="#585544"/><rect x="1343" y="414" width="2" height="3" fill="#000"/><rect x="1305" y="428" width="3" height="3" fill="#1a1a12"/><rect x="1384" y="402" width="3" height="2" fill="#1a1a12"/><rect x="1194" y="470" width="3" height="3" fill="#000"/><rect x="1359" y="452" width="2" height="3" fill="#585544"/><rect x="1377" y="483" width="3" height="3" fill="#000"/><rect x="1320" y="443" width="3" height="3" fill="#000"/><rect x="1304" y="455" width="3" height="3" fill="#1a1a12"/><rect x="1192" y="484" width="2" height="2" fill="#1a1a12"/><rect x="1266" y="486" width="3" height="2" fill="#1a1a12"/><rect x="1296" y="401" width="2" height="2" fill="#1a1a12"/><rect x="1257" y="425" width="2" height="3" fill="#585544"/><rect x="1315" y="471" width="2" height="2" fill="#585544"/><rect x="1286" y="420" width="2" height="3" fill="#000"/><rect x="1193" y="442" width="2" height="3" fill="#1a1a12"/><rect x="1330" y="453" width="2" height="3" fill="#000"/><rect x="1376" y="398" width="2" height="3" fill="#585544"/><rect x="1333" y="458" width="2" height="2" fill="#000"/><rect x="1374" y="437" width="2" height="3" fill="#1a1a12"/><rect x="1184" y="421" width="2" height="2" fill="#1a1a12"/><rect x="1322" y="422" width="2" height="3" fill="#000"/><rect x="1351" y="416" width="2" height="2" fill="#000"/><rect x="1392" y="474" width="3" height="3" fill="#585544"/><rect x="1265" y="402" width="3" height="2" fill="#000"/><rect x="1370" y="436" width="2" height="2" fill="#585544"/><rect x="1403" y="448" width="3" height="3" fill="#000"/><rect x="1284" y="433" width="3" height="2" fill="#000"/><rect x="1164" y="426" width="2" height="2" fill="#000"/><rect x="1400" y="435" width="2" height="2" fill="#000"/><rect x="1407" y="406" width="2" height="2" fill="#1a1a12"/><rect x="1309" y="436" width="2" height="3" fill="#000"/><rect x="1394" y="398" width="2" height="2" fill="#1a1a12"/><rect x="1150" y="442" width="3" height="3" fill="#585544"/><rect x="1399" y="424" width="3" height="3" fill="#000"/><rect x="1215" y="507" width="2" height="3" fill="#1a1a12"/><rect x="1260" y="463" width="2" height="3" fill="#585544"/><rect x="1381" y="470" width="3" height="3" fill="#1a1a12"/><rect x="1272" y="435" width="2" height="2" fill="#000"/><rect x="1163" y="472" width="3" height="2" fill="#1a1a12"/><rect x="1376" y="426" width="3" height="2" fill="#585544"/><rect x="1255" y="438" width="3" height="2" fill="#000"/><rect x="1401" y="416" width="2" height="2" fill="#000"/><rect x="1245" y="452" width="2" height="3" fill="#1a1a12"/><rect x="1401" y="471" width="3" height="2" fill="#000"/><rect x="1210" y="433" width="3" height="2" fill="#585544"/><rect x="1162" y="469" width="3" height="2" fill="#000"/><rect x="1235" y="410" width="3" height="2" fill="#000"/><rect x="1318" y="471" width="2" height="3" fill="#585544"/><rect x="1179" y="521" width="2" height="3" fill="#000"/><rect x="1364" y="408" width="3" height="2" fill="#000"/><rect x="1388" y="392" width="2" height="3" fill="#1a1a12"/><rect x="1351" y="424" width="3" height="3" fill="#000"/><rect x="1208" y="462" width="3" height="3" fill="#000"/><rect x="1333" y="500" width="2" height="2" fill="#000"/><rect x="1322" y="399" width="2" height="2" fill="#000"/><rect x="1213" y="438" width="3" height="3" fill="#1a1a12"/><rect x="1179" y="531" width="3" height="2" fill="#000"/><rect x="1238" y="425" width="2" height="3" fill="#1a1a12"/><rect x="1200" y="472" width="2" height="2" fill="#1a1a12"/><rect x="1352" y="509" width="2" height="2" fill="#585544"/><rect x="1351" y="483" width="2" height="3" fill="#000"/><rect x="1217" y="407" width="3" height="3" fill="#000"/><rect x="1202" y="498" width="3" height="2" fill="#1a1a12"/><rect x="1369" y="488" width="3" height="2" fill="#000"/><rect x="1274" y="472" width="3" height="3" fill="#585544"/><rect x="1307" y="489" width="2" height="2" fill="#1a1a12"/><rect x="1258" y="453" width="2" height="2" fill="#000"/><rect x="1330" y="475" width="2" height="3" fill="#585544"/><rect x="1400" y="454" width="2" height="2" fill="#585544"/><rect x="1302" y="423" width="2" height="2" fill="#000"/><rect x="1267" y="404" width="3" height="3" fill="#585544"/><rect x="1163" y="448" width="3" height="3" fill="#000"/><rect x="1210" y="462" width="2" height="3" fill="#585544"/><rect x="1293" y="498" width="2" height="3" fill="#1a1a12"/><rect x="1235" y="505" width="3" height="2" fill="#1a1a12"/><rect x="1385" y="456" width="3" height="3" fill="#585544"/><rect x="1338" y="477" width="3" height="2" fill="#000"/><rect x="1284" y="423" width="3" height="3" fill="#585544"/><rect x="1252" y="472" width="2" height="2" fill="#000"/><rect x="1164" y="512" width="2" height="3" fill="#000"/><rect x="1239" y="490" width="2" height="3" fill="#000"/><rect x="1329" y="399" width="2" height="3" fill="#585544"/><rect x="1338" y="435" width="3" height="2" fill="#000"/><rect x="1175" y="524" width="2" height="3" fill="#000"/><rect x="1334" y="439" width="3" height="2" fill="#1a1a12"/><rect x="1170" y="497" width="2" height="2" fill="#000"/><rect x="1178" y="523" width="2" height="2" fill="#000"/><rect x="1327" y="400" width="2" height="2" fill="#000"/><rect x="1282" y="490" width="2" height="2" fill="#585544"/><rect x="1228" y="435" width="2" height="2" fill="#000"/><rect x="1321" y="392" width="2" height="3" fill="#585544"/><rect x="1337" y="494" width="3" height="3" fill="#585544"/><rect x="1355" y="393" width="3" height="2" fill="#000"/><rect x="1221" y="480" width="3" height="2" fill="#000"/><rect x="1318" y="457" width="3" height="2" fill="#000"/><rect x="1320" y="494" width="2" height="2" fill="#000"/><rect x="1339" y="479" width="3" height="2" fill="#000"/><rect x="1351" y="417" width="2" height="2" fill="#585544"/><rect x="1257" y="415" width="3" height="2" fill="#000"/><rect x="1282" y="452" width="2" height="3" fill="#585544"/><rect x="1378" y="387" width="3" height="3" fill="#585544"/><rect x="1217" y="516" width="2" height="3" fill="#000"/><rect x="1165" y="463" width="3" height="3" fill="#000"/><rect x="1387" y="413" width="3" height="2" fill="#1a1a12"/><rect x="1298" y="434" width="2" height="3" fill="#000"/><rect x="1301" y="452" width="2" height="3" fill="#000"/><rect x="1282" y="451" width="2" height="3" fill="#000"/><rect x="1170" y="483" width="3" height="3" fill="#585544"/><rect x="1328" y="437" width="3" height="3" fill="#1a1a12"/><rect x="1247" y="527" width="2" height="3" fill="#585544"/><rect x="1231" y="516" width="2" height="2" fill="#000"/><rect x="1195" y="440" width="3" height="3" fill="#585544"/><rect x="1214" y="508" width="2" height="3" fill="#000"/><rect x="1376" y="462" width="3" height="3" fill="#000"/><rect x="1265" y="501" width="2" height="2" fill="#585544"/><rect x="1249" y="452" width="2" height="2" fill="#585544"/><rect x="1153" y="432" width="3" height="2" fill="#000"/><rect x="1218" y="484" width="2" height="3" fill="#585544"/><rect x="1162" y="474" width="2" height="3" fill="#585544"/><rect x="1197" y="528" width="2" height="3" fill="#1a1a12"/><rect x="1280" y="517" width="2" height="2" fill="#585544"/><rect x="1111" y="424" width="2" height="3" fill="#1a1a12"/><rect x="1379" y="497" width="3" height="2" fill="#585544"/><rect x="1195" y="520" width="2" height="2" fill="#000"/><rect x="1281" y="518" width="2" height="2" fill="#585544"/><rect x="1151" y="470" width="3" height="2" fill="#000"/><rect x="1139" y="463" width="2" height="2" fill="#000"/><rect x="1133" y="435" width="2" height="2" fill="#1a1a12"/><rect x="1379" y="411" width="3" height="2" fill="#1a1a12"/><rect x="1379" y="432" width="2" height="3" fill="#000"/><rect x="1378" y="397" width="3" height="3" fill="#000"/><rect x="1403" y="480" width="3" height="2" fill="#000"/><rect x="1348" y="488" width="3" height="3" fill="#000"/><rect x="1298" y="407" width="3" height="2" fill="#000"/><rect x="1334" y="451" width="3" height="3" fill="#1a1a12"/><rect x="1296" y="449" width="2" height="2" fill="#000"/><rect x="1278" y="412" width="2" height="2" fill="#585544"/><rect x="1315" y="444" width="3" height="3" fill="#585544"/><rect x="1312" y="436" width="2" height="3" fill="#000"/><rect x="1278" y="418" width="2" height="3" fill="#1a1a12"/><rect x="1194" y="505" width="2" height="2" fill="#000"/><rect x="1405" y="421" width="2" height="3" fill="#000"/><rect x="1174" y="446" width="2" height="3" fill="#000"/><rect x="1202" y="435" width="3" height="2" fill="#000"/><rect x="1378" y="460" width="3" height="2" fill="#585544"/><rect x="1363" y="459" width="2" height="3" fill="#000"/><rect x="1393" y="391" width="3" height="2" fill="#000"/><rect x="1194" y="522" width="2" height="2" fill="#000"/><rect x="1285" y="498" width="3" height="2" fill="#585544"/><rect x="1280" y="486" width="2" height="3" fill="#000"/><rect x="1300" y="513" width="3" height="3" fill="#000"/><rect x="1209" y="524" width="2" height="2" fill="#000"/><rect x="1249" y="488" width="2" height="3" fill="#1a1a12"/><rect x="1330" y="479" width="2" height="2" fill="#585544"/><rect x="1180" y="478" width="2" height="3" fill="#1a1a12"/><rect x="1305" y="466" width="3" height="2" fill="#000"/><rect x="1370" y="396" width="3" height="3" fill="#000"/><rect x="1165" y="516" width="3" height="3" fill="#000"/><rect x="1194" y="427" width="3" height="2" fill="#1a1a12"/><rect x="1374" y="506" width="3" height="2" fill="#000"/><rect x="1250" y="492" width="3" height="2" fill="#1a1a12"/><rect x="1356" y="468" width="2" height="2" fill="#585544"/><rect x="1244" y="479" width="3" height="3" fill="#000"/><rect x="1128" y="420" width="2" height="3" fill="#585544"/><rect x="1317" y="488" width="3" height="3" fill="#585544"/><rect x="1219" y="430" width="2" height="3" fill="#000"/><rect x="1188" y="434" width="3" height="2" fill="#1a1a12"/><rect x="1371" y="393" width="3" height="3" fill="#000"/><rect x="1121" y="431" width="3" height="3" fill="#000"/><rect x="1183" y="444" width="2" height="2" fill="#585544"/><rect x="1201" y="441" width="2" height="3" fill="#585544"/><rect x="1218" y="461" width="2" height="2" fill="#000"/><rect x="1267" y="492" width="3" height="2" fill="#1a1a12"/><rect x="1172" y="497" width="3" height="3" fill="#1a1a12"/><rect x="1264" y="462" width="2" height="3" fill="#000"/><rect x="1280" y="431" width="2" height="2" fill="#000"/><polygon points="1297.2,412.3 1318.0,409.0 1357.0,447.0 1376.0,477.0 1363.4,480.2 1297.2,464.4" fill="#b01c38" /><polygon points="1171.0,428.1 1218.3,421.8 1240.4,418.7 1256.2,417.1 1237.2,428.1 1262.5,442.3 1275.1,451.8 1275.1,466.0 1297.2,464.4 1363.4,480.2 1347.6,484.9 1287.7,483.3 1284.5,489.6 1218.3,502.2 1193.1,464.4 1182.0,442.3" fill="#e8e8e8" /><g transform="rotate(62 1228 458)" stroke="#b02050" stroke-width="1.6" fill="none"><path d="M1212 452 h8 M1216 448 v9 M1213 457 l6 -3 M1224 450 h7 M1227 447 v10 M1225 456 h5 M1236 451 h8 M1240 448 v9 M1236 457 h8 M1248 449 h7 v8 h-7 z M1251 452 h4"/></g><polygon points="1238.0,424.0 1256.0,420.0 1262.0,442.0 1274.0,452.0 1274.0,462.0 1255.0,446.0 1242.0,432.0" fill="#101418" /><rect x="1262" y="449" width="2" height="3" fill="#0a5a84"/><rect x="1273" y="451" width="3" height="3" fill="#0a5a84"/><rect x="1261" y="449" width="3" height="2" fill="#0a5a84"/><rect x="1271" y="455" width="3" height="3" fill="#0a5a84"/><rect x="1273" y="460" width="3" height="2" fill="#0a5a84"/><rect x="1245" y="432" width="2" height="2" fill="#0a5a84"/><rect x="1251" y="429" width="3" height="2" fill="#0a5a84"/><rect x="1253" y="431" width="3" height="2" fill="#0a5a84"/><rect x="1264" y="435" width="2" height="2" fill="#0a5a84"/><rect x="1258" y="446" width="3" height="3" fill="#0a5a84"/><rect x="1247" y="429" width="3" height="3" fill="#0a5a84"/><rect x="1270" y="449" width="3" height="2" fill="#0a5a84"/><rect x="1259" y="440" width="2" height="3" fill="#0a5a84"/><rect x="1251" y="429" width="3" height="3" fill="#0a5a84"/><rect x="1257" y="426" width="2" height="3" fill="#0a5a84"/><polygon points="1142.6,475.4 1188.4,467.5 1206.0,486.5 1161.5,493.0" fill="#dc3c9c" /><polygon points="1159.0,492.0 1206.0,486.0 1208.9,491.0 1161.5,497.5" fill="#f0f0f0" /><polygon points="1161.5,497.5 1210.4,492.8 1215.2,503.8 1166.3,511.7" fill="#ee6c5c" /><polygon points="1276.0,420.0 1298.7,418.0 1298.7,466.0 1290.0,468.0 1278.0,466.0" fill="#c41e38" /><polygon points="1276.7,420.0 1298.7,418.0 1298.7,431.3 1276.7,433.0" fill="#f0e8e8" /><ellipse cx="1287.5" cy="418.5" rx="11" ry="4.5" fill="#d02040"/><polygon points="1330.3,409.2 1357.1,406.0 1382.3,432.8 1352.4,439.2" fill="#f0f0f0" /><polygon points="1352.4,437.6 1388.6,434.4 1391.8,447.0 1357.1,448.6" fill="#e4e4e4" /><polygon points="1357.1,448.6 1391.8,447.0 1407.6,464.4 1407.6,477.0 1376.0,477.0" fill="#d4207a" /><polygon points="1145.8,507.5 1301.6,492.8 1320.0,516.6 1228.3,522.0 1219.0,549.6 1182.5,557.0 1155.0,553.3" fill="#14140f" /><rect x="1184" y="553" width="2" height="2" fill="#0a5a84"/><rect x="1245" y="519" width="2" height="3" fill="#0a5a84"/><rect x="1313" y="511" width="3" height="2" fill="#000"/><rect x="1168" y="523" width="3" height="3" fill="#0a5a84"/><rect x="1210" y="548" width="3" height="2" fill="#0a5a84"/><rect x="1167" y="527" width="2" height="3" fill="#000"/><rect x="1193" y="554" width="2" height="2" fill="#000"/><rect x="1266" y="498" width="3" height="2" fill="#3a3a2a"/><rect x="1207" y="537" width="2" height="3" fill="#000"/><rect x="1181" y="554" width="3" height="3" fill="#000"/><rect x="1269" y="517" width="3" height="2" fill="#3a3a2a"/><rect x="1310" y="504" width="2" height="2" fill="#0a5a84"/><rect x="1201" y="553" width="2" height="3" fill="#3a3a2a"/><rect x="1226" y="516" width="2" height="3" fill="#0a5a84"/><rect x="1275" y="513" width="2" height="3" fill="#3a3a2a"/><rect x="1171" y="529" width="3" height="3" fill="#000"/><rect x="1212" y="536" width="2" height="3" fill="#0a5a84"/><rect x="1232" y="519" width="2" height="3" fill="#0a5a84"/><rect x="1180" y="549" width="2" height="3" fill="#000"/><rect x="1202" y="521" width="2" height="3" fill="#3a3a2a"/><rect x="1158" y="550" width="2" height="3" fill="#0a5a84"/><rect x="1213" y="541" width="3" height="2" fill="#0a5a84"/><rect x="1238" y="511" width="3" height="3" fill="#0a5a84"/><rect x="1273" y="509" width="3" height="2" fill="#3a3a2a"/><rect x="1273" y="518" width="3" height="3" fill="#000"/><rect x="1273" y="514" width="3" height="2" fill="#0a5a84"/><rect x="1155" y="509" width="3" height="2" fill="#3a3a2a"/><rect x="1222" y="532" width="3" height="3" fill="#0a5a84"/><rect x="1183" y="536" width="3" height="3" fill="#000"/><rect x="1246" y="506" width="3" height="2" fill="#0a5a84"/><rect x="1203" y="547" width="3" height="3" fill="#3a3a2a"/><rect x="1216" y="517" width="3" height="3" fill="#0a5a84"/><rect x="1221" y="509" width="2" height="3" fill="#000"/><rect x="1290" y="498" width="2" height="3" fill="#3a3a2a"/><rect x="1207" y="552" width="3" height="2" fill="#3a3a2a"/><rect x="1159" y="514" width="3" height="2" fill="#3a3a2a"/><rect x="1169" y="552" width="3" height="3" fill="#000"/><rect x="1317" y="515" width="3" height="3" fill="#000"/><rect x="1174" y="554" width="3" height="2" fill="#000"/><rect x="1190" y="553" width="2" height="3" fill="#000"/><rect x="1167" y="522" width="2" height="2" fill="#0a5a84"/><rect x="1182" y="505" width="3" height="3" fill="#3a3a2a"/><rect x="1262" y="502" width="2" height="2" fill="#000"/><rect x="1175" y="538" width="3" height="3" fill="#0a5a84"/><rect x="1217" y="539" width="2" height="2" fill="#0a5a84"/><rect x="1166" y="549" width="2" height="2" fill="#0a5a84"/><rect x="1160" y="520" width="3" height="2" fill="#3a3a2a"/><rect x="1159" y="523" width="3" height="3" fill="#3a3a2a"/><rect x="1215" y="528" width="2" height="3" fill="#000"/><rect x="1175" y="549" width="2" height="3" fill="#0a5a84"/><rect x="1177" y="515" width="2" height="3" fill="#3a3a2a"/><rect x="1212" y="501" width="2" height="2" fill="#0a5a84"/><rect x="1162" y="545" width="2" height="2" fill="#3a3a2a"/><rect x="1190" y="522" width="3" height="3" fill="#000"/><rect x="1210" y="537" width="3" height="3" fill="#000"/><rect x="1212" y="532" width="2" height="2" fill="#000"/><rect x="1171" y="542" width="3" height="2" fill="#0a5a84"/><rect x="1245" y="515" width="3" height="3" fill="#0a5a84"/><rect x="1179" y="517" width="2" height="3" fill="#3a3a2a"/><rect x="1226" y="517" width="3" height="3" fill="#0a5a84"/><rect x="1295" y="498" width="3" height="3" fill="#3a3a2a"/><rect x="1299" y="514" width="2" height="3" fill="#000"/><rect x="1263" y="499" width="3" height="2" fill="#3a3a2a"/><rect x="1188" y="509" width="2" height="2" fill="#3a3a2a"/><rect x="1295" y="501" width="2" height="2" fill="#0a5a84"/><rect x="1172" y="508" width="2" height="2" fill="#3a3a2a"/><rect x="1212" y="538" width="2" height="2" fill="#0a5a84"/><rect x="1256" y="519" width="3" height="2" fill="#0a5a84"/><rect x="1184" y="540" width="2" height="3" fill="#0a5a84"/><rect x="1184" y="529" width="3" height="3" fill="#000"/><rect x="1201" y="542" width="3" height="3" fill="#0a5a84"/><rect x="1233" y="505" width="3" height="3" fill="#3a3a2a"/><rect x="1180" y="556" width="3" height="3" fill="#3a3a2a"/><rect x="1202" y="525" width="3" height="2" fill="#3a3a2a"/><rect x="1254" y="499" width="2" height="3" fill="#0a5a84"/><rect x="1279" y="498" width="3" height="3" fill="#0a5a84"/><rect x="1172" y="524" width="2" height="3" fill="#0a5a84"/><rect x="1276" y="508" width="3" height="3" fill="#000"/><rect x="1221" y="511" width="2" height="2" fill="#3a3a2a"/><rect x="1265" y="506" width="2" height="2" fill="#0a5a84"/><rect x="1203" y="544" width="2" height="2" fill="#000"/><rect x="1179" y="522" width="3" height="3" fill="#000"/><rect x="1169" y="543" width="3" height="2" fill="#000"/><rect x="1293" y="511" width="2" height="3" fill="#3a3a2a"/><rect x="1211" y="533" width="2" height="2" fill="#000"/><rect x="1302" y="515" width="2" height="3" fill="#3a3a2a"/><rect x="1182" y="532" width="3" height="2" fill="#3a3a2a"/><rect x="1148" y="511" width="3" height="2" fill="#3a3a2a"/><rect x="1180" y="524" width="3" height="2" fill="#0a5a84"/><rect x="1168" y="524" width="2" height="2" fill="#3a3a2a"/><rect x="1298" y="504" width="3" height="2" fill="#0a5a84"/><rect x="1157" y="542" width="2" height="3" fill="#3a3a2a"/><rect x="1149" y="516" width="3" height="3" fill="#0a5a84"/><rect x="1238" y="509" width="3" height="2" fill="#3a3a2a"/><rect x="1168" y="540" width="2" height="3" fill="#0a5a84"/><rect x="1305" y="516" width="3" height="2" fill="#3a3a2a"/><rect x="1316" y="512" width="3" height="3" fill="#000"/><rect x="1167" y="525" width="3" height="3" fill="#3a3a2a"/><rect x="1289" y="499" width="2" height="3" fill="#3a3a2a"/><rect x="1146" y="508" width="2" height="2" fill="#3a3a2a"/><rect x="1240" y="512" width="3" height="2" fill="#3a3a2a"/><rect x="1289" y="494" width="3" height="2" fill="#3a3a2a"/><rect x="1209" y="515" width="3" height="2" fill="#000"/><rect x="1192" y="531" width="2" height="3" fill="#0a5a84"/><rect x="1211" y="528" width="2" height="2" fill="#000"/><rect x="1171" y="542" width="3" height="2" fill="#000"/><rect x="1216" y="547" width="2" height="3" fill="#000"/><rect x="1194" y="520" width="3" height="2" fill="#3a3a2a"/><rect x="1248" y="510" width="3" height="3" fill="#3a3a2a"/><rect x="1258" y="515" width="3" height="3" fill="#000"/><rect x="1275" y="497" width="2" height="3" fill="#0a5a84"/><rect x="1262" y="516" width="3" height="3" fill="#0a5a84"/><rect x="1217" y="517" width="2" height="2" fill="#3a3a2a"/><rect x="1218" y="511" width="3" height="3" fill="#000"/><rect x="1165" y="527" width="2" height="3" fill="#000"/><rect x="1213" y="519" width="3" height="3" fill="#0a5a84"/><rect x="1152" y="521" width="2" height="3" fill="#000"/><rect x="1206" y="546" width="2" height="2" fill="#000"/><rect x="1227" y="513" width="3" height="2" fill="#0a5a84"/><rect x="1239" y="520" width="3" height="3" fill="#0a5a84"/><rect x="1186" y="587" width="2" height="4" fill="#3a3a2a"/><rect x="1143" y="568" width="4" height="2" fill="#111"/><rect x="1160" y="576" width="4" height="4" fill="#3a3a2a"/><rect x="1152" y="530" width="3" height="2" fill="#000"/><rect x="1191" y="555" width="4" height="3" fill="#111"/><rect x="1231" y="587" width="4" height="3" fill="#111"/><rect x="1157" y="533" width="4" height="4" fill="#111"/><rect x="1165" y="585" width="2" height="2" fill="#000"/><rect x="1198" y="575" width="4" height="3" fill="#000"/><rect x="1232" y="579" width="3" height="3" fill="#3a3a2a"/><rect x="1191" y="565" width="2" height="2" fill="#000"/><rect x="1204" y="600" width="3" height="4" fill="#111"/><rect x="1151" y="577" width="4" height="2" fill="#000"/><rect x="1155" y="528" width="2" height="3" fill="#111"/><rect x="1166" y="578" width="4" height="3" fill="#111"/><rect x="1147" y="557" width="3" height="2" fill="#111"/><rect x="1203" y="586" width="2" height="4" fill="#111"/><rect x="1152" y="535" width="4" height="3" fill="#000"/><rect x="1186" y="584" width="2" height="4" fill="#111"/><rect x="1198" y="570" width="2" height="2" fill="#111"/><rect x="1178" y="560" width="4" height="2" fill="#111"/><rect x="1131" y="543" width="4" height="2" fill="#111"/><rect x="1210" y="561" width="3" height="2" fill="#111"/><rect x="1173" y="597" width="2" height="2" fill="#3a3a2a"/><rect x="1137" y="529" width="2" height="3" fill="#000"/><rect x="1204" y="591" width="4" height="4" fill="#000"/><rect x="1181" y="580" width="4" height="2" fill="#000"/><rect x="1152" y="590" width="3" height="4" fill="#3a3a2a"/><rect x="1185" y="580" width="2" height="3" fill="#3a3a2a"/><rect x="1154" y="528" width="4" height="4" fill="#000"/><rect x="1150" y="537" width="4" height="4" fill="#000"/><rect x="1199" y="596" width="4" height="3" fill="#000"/><rect x="1235" y="599" width="4" height="3" fill="#000"/><rect x="1192" y="583" width="2" height="2" fill="#000"/><rect x="1216" y="558" width="4" height="2" fill="#3a3a2a"/><rect x="1156" y="600" width="2" height="3" fill="#000"/><rect x="1165" y="536" width="4" height="4" fill="#111"/><rect x="1199" y="562" width="4" height="4" fill="#111"/><rect x="1211" y="586" width="4" height="2" fill="#3a3a2a"/><rect x="1241" y="595" width="4" height="2" fill="#000"/><rect x="1152" y="578" width="3" height="2" fill="#3a3a2a"/><rect x="1217" y="576" width="3" height="3" fill="#111"/><rect x="1148" y="530" width="2" height="4" fill="#111"/><rect x="1149" y="577" width="2" height="4" fill="#3a3a2a"/><rect x="1221" y="596" width="2" height="4" fill="#3a3a2a"/><rect x="1151" y="580" width="3" height="3" fill="#111"/><rect x="1145" y="573" width="2" height="2" fill="#111"/><rect x="1223" y="594" width="3" height="2" fill="#000"/><rect x="1187" y="585" width="3" height="3" fill="#111"/><rect x="1200" y="566" width="3" height="3" fill="#3a3a2a"/><rect x="1217" y="599" width="2" height="3" fill="#3a3a2a"/><rect x="1162" y="594" width="2" height="3" fill="#111"/><rect x="1136" y="539" width="2" height="3" fill="#111"/><rect x="1198" y="557" width="4" height="3" fill="#111"/><rect x="1146" y="532" width="3" height="4" fill="#000"/><rect x="1183" y="570" width="2" height="4" fill="#3a3a2a"/><rect x="1148" y="584" width="3" height="3" fill="#000"/><rect x="1202" y="555" width="4" height="4" fill="#111"/><rect x="1204" y="594" width="3" height="3" fill="#000"/><rect x="1134" y="511" width="3" height="4" fill="#000"/><rect x="1146" y="557" width="2" height="2" fill="#000"/><rect x="1130" y="530" width="3" height="2" fill="#111"/><rect x="1209" y="576" width="3" height="4" fill="#3a3a2a"/><rect x="1218" y="580" width="4" height="4" fill="#111"/><rect x="1145" y="593" width="2" height="2" fill="#000"/><rect x="1163" y="596" width="4" height="3" fill="#3a3a2a"/><rect x="1182" y="546" width="2" height="2" fill="#000"/><rect x="1157" y="590" width="2" height="4" fill="#000"/><rect x="1143" y="531" width="3" height="4" fill="#3a3a2a"/><rect x="1188" y="549" width="4" height="4" fill="#000"/><rect x="1213" y="580" width="3" height="3" fill="#3a3a2a"/><rect x="1129" y="557" width="2" height="3" fill="#000"/><rect x="1162" y="537" width="2" height="3" fill="#000"/><rect x="1220" y="585" width="4" height="2" fill="#000"/><rect x="1213" y="568" width="2" height="3" fill="#000"/><rect x="1186" y="558" width="2" height="2" fill="#3a3a2a"/><rect x="1205" y="573" width="2" height="4" fill="#000"/><rect x="1166" y="551" width="4" height="4" fill="#111"/><rect x="1163" y="549" width="3" height="3" fill="#000"/><rect x="1139" y="517" width="3" height="3" fill="#3a3a2a"/><rect x="1235" y="575" width="2" height="2" fill="#3a3a2a"/><rect x="1228" y="592" width="3" height="2" fill="#3a3a2a"/><rect x="1166" y="575" width="2" height="3" fill="#111"/><rect x="1243" y="588" width="4" height="4" fill="#111"/><rect x="1225" y="590" width="2" height="2" fill="#111"/><rect x="1144" y="562" width="3" height="4" fill="#000"/><rect x="1166" y="596" width="2" height="3" fill="#3a3a2a"/><rect x="1164" y="560" width="2" height="4" fill="#000"/><rect x="1135" y="513" width="2" height="3" fill="#000"/><rect x="1162" y="599" width="4" height="4" fill="#000"/><polygon points="909.1,677.9 937.9,661.2 997.7,656.4 1033.6,673.1 1071.8,687.5 1045.5,699.5 985.7,709.0 942.6,701.8 933.1,687.5" fill="#040403" /><polygon points="909.0,678.0 938.0,661.0 998.0,656.0 1010.0,662.0 950.0,668.0 918.0,680.0" fill="#38361f" /><polygon points="1057.5,620.5 1075.0,615.0 1090.0,632.0 1070.0,630.0" fill="#080806" /><polygon points="1070.0,616.0 1143.6,603.7 1144.8,625.3 1122.0,630.0 1160.4,646.8 1143.6,663.6 1117.3,654.0 1081.4,634.8" fill="#8a8672" /><polygon points="1129.3,627.7 1146.0,630.0 1203.4,654.0 1196.3,668.3 1136.4,682.7 1119.7,673.1 1114.9,654.0 1143.6,663.6 1160.4,646.8" fill="#050504" /><polygon points="1150.0,630.0 1200.0,650.0 1195.0,660.0 1148.0,640.0" fill="#2a2a22" /><polygon points="1100.0,610.0 1144.0,604.6 1145.8,626.6 1100.0,634.0" fill="#7e7a62" /><polygon points="1100.0,634.0 1145.8,626.6 1155.0,632.0 1206.0,652.0 1195.0,663.0 1114.7,654.0 1100.0,650.0" fill="#8a8670" /><polygon points="1153.2,601.0 1219.0,590.0 1239.3,619.3 1199.0,630.3 1158.7,624.8" fill="#7a765e" /><polygon points="1216.0,590.0 1222.0,589.0 1241.0,617.0 1236.0,621.0" fill="#060605" /><polygon points="1155.0,632.0 1206.3,652.3 1202.6,663.3 1153.0,641.3" fill="#050504" /><polygon points="1114.7,654.0 1195.3,663.3 1184.3,680.0 1122.0,680.0" fill="#050504" /><polygon points="1237.5,588.0 1345.6,571.6 1345.6,579.0 1239.3,597.3" fill="#6a6650" /><polygon points="1301.6,561.0 1360.0,551.0 1357.0,558.0 1301.6,566.0" fill="#060605" /><polygon points="1268.0,548.0 1280.0,545.0 1274.0,582.0 1266.0,612.0 1256.0,606.0 1264.0,578.0" fill="#060605" /><rect x="1254" y="553" width="3" height="3" fill="#000"/><rect x="1259" y="596" width="2" height="2" fill="#000"/><rect x="1255" y="608" width="2" height="3" fill="#000"/><rect x="1265" y="544" width="2" height="2" fill="#000"/><rect x="1265" y="574" width="3" height="3" fill="#000"/><rect x="1270" y="583" width="3" height="3" fill="#000"/><rect x="1259" y="584" width="3" height="3" fill="#000"/><rect x="1263" y="581" width="2" height="3" fill="#000"/><rect x="1267" y="579" width="2" height="2" fill="#000"/><rect x="1257" y="577" width="2" height="2" fill="#000"/><rect x="1283" y="578" width="3" height="3" fill="#000"/><rect x="1261" y="588" width="3" height="2" fill="#000"/><rect x="1268" y="593" width="3" height="2" fill="#000"/><rect x="1274" y="588" width="2" height="3" fill="#000"/><rect x="1283" y="573" width="2" height="2" fill="#000"/><rect x="1268" y="573" width="2" height="2" fill="#000"/><rect x="1279" y="585" width="3" height="3" fill="#000"/><rect x="1283" y="542" width="2" height="2" fill="#000"/><rect x="1254" y="611" width="3" height="3" fill="#000"/><rect x="1266" y="556" width="2" height="2" fill="#000"/><rect x="1266" y="602" width="3" height="3" fill="#000"/><rect x="1287" y="548" width="2" height="3" fill="#000"/><rect x="1257" y="605" width="3" height="3" fill="#000"/><rect x="1250" y="564" width="2" height="2" fill="#000"/><rect x="1275" y="552" width="2" height="2" fill="#000"/><rect x="1256" y="607" width="2" height="3" fill="#000"/><rect x="1267" y="573" width="2" height="3" fill="#000"/><rect x="1275" y="557" width="2" height="3" fill="#000"/><rect x="1254" y="554" width="3" height="3" fill="#000"/><rect x="1259" y="563" width="3" height="2" fill="#000"/><rect x="1269" y="576" width="3" height="3" fill="#000"/><rect x="1256" y="550" width="2" height="3" fill="#000"/><rect x="1280" y="595" width="2" height="3" fill="#000"/><rect x="1264" y="579" width="2" height="2" fill="#000"/><rect x="1281" y="581" width="3" height="3" fill="#000"/><rect x="1265" y="607" width="2" height="2" fill="#000"/><rect x="1271" y="586" width="3" height="3" fill="#000"/><rect x="1271" y="589" width="3" height="2" fill="#000"/><rect x="1273" y="578" width="3" height="3" fill="#000"/><rect x="1265" y="543" width="3" height="3" fill="#000"/><rect x="1320" y="564" width="3" height="2" fill="#000"/><rect x="1307" y="563" width="2" height="2" fill="#2a2a1e"/><rect x="1332" y="564" width="3" height="3" fill="#2a2a1e"/><rect x="1340" y="565" width="3" height="2" fill="#2a2a1e"/><rect x="1303" y="564" width="3" height="2" fill="#000"/><rect x="1334" y="555" width="3" height="2" fill="#2a2a1e"/><rect x="1309" y="556" width="3" height="3" fill="#2a2a1e"/><rect x="1317" y="564" width="3" height="3" fill="#2a2a1e"/><rect x="1322" y="553" width="3" height="3" fill="#000"/><rect x="1360" y="552" width="3" height="2" fill="#000"/><rect x="1308" y="567" width="2" height="3" fill="#2a2a1e"/><rect x="1352" y="560" width="3" height="3" fill="#2a2a1e"/><rect x="1343" y="558" width="3" height="2" fill="#2a2a1e"/><rect x="1317" y="559" width="3" height="2" fill="#2a2a1e"/><rect x="1330" y="562" width="2" height="3" fill="#2a2a1e"/><rect x="1313" y="560" width="2" height="3" fill="#000"/><rect x="1316" y="563" width="2" height="2" fill="#000"/><rect x="1348" y="564" width="3" height="2" fill="#2a2a1e"/><rect x="1307" y="550" width="3" height="3" fill="#2a2a1e"/><rect x="1323" y="569" width="2" height="3" fill="#000"/><rect x="1338" y="556" width="3" height="2" fill="#000"/><rect x="1332" y="556" width="2" height="2" fill="#000"/><rect x="1303" y="568" width="2" height="2" fill="#000"/><rect x="1315" y="570" width="3" height="2" fill="#000"/><rect x="1316" y="560" width="3" height="2" fill="#2a2a1e"/><rect x="1309" y="552" width="3" height="3" fill="#000"/><rect x="1355" y="562" width="3" height="3" fill="#2a2a1e"/><rect x="1325" y="568" width="2" height="2" fill="#000"/><rect x="1340" y="550" width="3" height="3" fill="#000"/><rect x="1331" y="551" width="2" height="2" fill="#000"/><rect x="1344" y="563" width="2" height="3" fill="#000"/><rect x="1316" y="556" width="3" height="2" fill="#000"/><rect x="1350" y="566" width="3" height="3" fill="#2a2a1e"/><rect x="1301" y="554" width="2" height="3" fill="#2a2a1e"/><rect x="1305" y="557" width="3" height="2" fill="#000"/><rect x="1334" y="558" width="3" height="2" fill="#000"/><rect x="1333" y="551" width="2" height="2" fill="#2a2a1e"/><rect x="1302" y="568" width="2" height="3" fill="#2a2a1e"/><rect x="1321" y="556" width="2" height="3" fill="#2a2a1e"/><rect x="1357" y="561" width="2" height="3" fill="#2a2a1e"/><polygon points="1292.4,593.6 1334.6,588.0 1336.4,619.3 1301.6,623.0" fill="#8a8670" /><polygon points="1290.6,619.3 1336.0,612.0 1334.6,583.0 1351.0,585.0 1349.3,641.3 1292.4,656.0" fill="#050504" /><rect x="1179" y="675" width="4" height="4" fill="#111"/><rect x="1140" y="581" width="2" height="3" fill="#000"/><rect x="1148" y="689" width="4" height="2" fill="#111"/><rect x="1305" y="638" width="4" height="3" fill="#000"/><rect x="1201" y="640" width="3" height="2" fill="#000"/><rect x="1281" y="627" width="4" height="2" fill="#111"/><rect x="1242" y="667" width="3" height="3" fill="#000"/><rect x="1118" y="654" width="2" height="3" fill="#111"/><rect x="1259" y="596" width="2" height="2" fill="#111"/><rect x="1184" y="635" width="3" height="4" fill="#000"/><rect x="1315" y="550" width="3" height="3" fill="#000"/><rect x="1350" y="569" width="2" height="3" fill="#000"/><rect x="1218" y="641" width="2" height="4" fill="#000"/><rect x="1208" y="686" width="2" height="2" fill="#000"/><rect x="1181" y="600" width="4" height="3" fill="#000"/><rect x="1291" y="582" width="2" height="4" fill="#111"/><rect x="1200" y="614" width="3" height="4" fill="#000"/><rect x="1130" y="590" width="3" height="2" fill="#000"/><rect x="1259" y="561" width="2" height="3" fill="#000"/><rect x="1110" y="580" width="2" height="3" fill="#000"/><rect x="1162" y="608" width="3" height="4" fill="#111"/><rect x="1094" y="649" width="2" height="2" fill="#111"/><rect x="1143" y="672" width="3" height="2" fill="#000"/><rect x="1291" y="633" width="2" height="4" fill="#000"/><rect x="1225" y="564" width="2" height="4" fill="#000"/><rect x="1334" y="592" width="4" height="4" fill="#000"/><rect x="1255" y="564" width="3" height="3" fill="#111"/><rect x="1270" y="658" width="3" height="2" fill="#000"/><rect x="1077" y="672" width="4" height="3" fill="#000"/><rect x="1337" y="596" width="4" height="4" fill="#000"/><rect x="1173" y="631" width="4" height="4" fill="#000"/><rect x="1150" y="605" width="4" height="4" fill="#111"/><rect x="1113" y="634" width="3" height="4" fill="#000"/><rect x="1048" y="631" width="2" height="4" fill="#000"/><rect x="1078" y="602" width="2" height="3" fill="#000"/><rect x="1335" y="635" width="3" height="3" fill="#000"/><rect x="1288" y="640" width="4" height="3" fill="#000"/><rect x="1082" y="614" width="2" height="3" fill="#000"/><rect x="1254" y="611" width="4" height="4" fill="#000"/><rect x="1310" y="589" width="3" height="3" fill="#111"/><rect x="1186" y="584" width="3" height="3" fill="#111"/><rect x="1081" y="659" width="2" height="4" fill="#111"/><rect x="1215" y="569" width="4" height="3" fill="#111"/><rect x="1264" y="602" width="4" height="4" fill="#111"/><rect x="1326" y="659" width="3" height="4" fill="#000"/><rect x="1091" y="685" width="2" height="2" fill="#111"/><rect x="1278" y="573" width="3" height="3" fill="#111"/><rect x="1105" y="584" width="3" height="2" fill="#111"/><rect x="1299" y="571" width="2" height="4" fill="#111"/><rect x="1060" y="684" width="3" height="4" fill="#000"/><rect x="1353" y="675" width="2" height="2" fill="#000"/><rect x="1043" y="630" width="4" height="4" fill="#000"/><rect x="1241" y="675" width="3" height="4" fill="#111"/><rect x="1321" y="582" width="3" height="3" fill="#000"/><rect x="1346" y="675" width="2" height="4" fill="#000"/><rect x="1187" y="590" width="2" height="3" fill="#000"/><rect x="1132" y="618" width="4" height="4" fill="#000"/><rect x="1125" y="629" width="3" height="3" fill="#000"/><rect x="1195" y="675" width="4" height="4" fill="#000"/><rect x="1283" y="588" width="2" height="2" fill="#000"/><rect x="1320" y="626" width="4" height="4" fill="#000"/><rect x="1287" y="632" width="2" height="2" fill="#000"/><rect x="1355" y="665" width="2" height="4" fill="#000"/><rect x="1205" y="607" width="2" height="4" fill="#000"/><rect x="1251" y="662" width="2" height="4" fill="#000"/><rect x="1328" y="570" width="3" height="4" fill="#111"/><rect x="1280" y="584" width="2" height="4" fill="#111"/><rect x="1118" y="589" width="3" height="2" fill="#111"/><rect x="1069" y="691" width="3" height="2" fill="#000"/><rect x="1066" y="620" width="4" height="3" fill="#000"/><rect x="1084" y="677" width="4" height="4" fill="#000"/><rect x="1116" y="602" width="3" height="4" fill="#111"/><rect x="1075" y="598" width="2" height="4" fill="#000"/><rect x="1199" y="632" width="3" height="2" fill="#111"/><rect x="1177" y="610" width="4" height="4" fill="#000"/><rect x="1123" y="601" width="2" height="2" fill="#000"/><rect x="1096" y="669" width="4" height="4" fill="#000"/><rect x="1228" y="574" width="3" height="3" fill="#111"/><rect x="1221" y="619" width="2" height="3" fill="#000"/><rect x="1341" y="610" width="2" height="4" fill="#000"/><rect x="1240" y="659" width="2" height="3" fill="#000"/><rect x="1080" y="684" width="4" height="3" fill="#111"/><rect x="1106" y="624" width="3" height="4" fill="#000"/><rect x="1333" y="553" width="2" height="2" fill="#000"/><rect x="1167" y="641" width="3" height="4" fill="#000"/><rect x="1296" y="566" width="4" height="3" fill="#000"/><rect x="1164" y="653" width="2" height="2" fill="#111"/><rect x="1145" y="622" width="3" height="3" fill="#000"/><rect x="1213" y="615" width="4" height="4" fill="#000"/><rect x="1149" y="585" width="3" height="4" fill="#111"/><rect x="1208" y="650" width="4" height="4" fill="#000"/><rect x="1344" y="601" width="4" height="4" fill="#111"/><rect x="1162" y="673" width="4" height="3" fill="#000"/><rect x="1291" y="606" width="4" height="3" fill="#000"/><rect x="1264" y="634" width="2" height="2" fill="#000"/><rect x="1321" y="548" width="2" height="4" fill="#111"/><rect x="1259" y="649" width="4" height="3" fill="#000"/><rect x="1247" y="598" width="3" height="2" fill="#000"/><rect x="1265" y="673" width="3" height="4" fill="#000"/><rect x="1107" y="583" width="2" height="2" fill="#111"/><rect x="1217" y="654" width="3" height="2" fill="#000"/><rect x="1344" y="612" width="3" height="4" fill="#000"/><rect x="1203" y="599" width="4" height="3" fill="#111"/><rect x="1263" y="580" width="2" height="4" fill="#000"/><rect x="1172" y="668" width="3" height="4" fill="#111"/><rect x="1256" y="681" width="4" height="3" fill="#111"/><rect x="1147" y="607" width="3" height="2" fill="#000"/><rect x="1294" y="646" width="4" height="4" fill="#000"/><rect x="1201" y="619" width="4" height="2" fill="#000"/><rect x="1357" y="563" width="2" height="3" fill="#000"/><rect x="1157" y="581" width="2" height="2" fill="#000"/><rect x="1138" y="605" width="2" height="2" fill="#000"/><rect x="1164" y="578" width="3" height="2" fill="#000"/><rect x="1201" y="575" width="2" height="2" fill="#000"/><rect x="1130" y="604" width="3" height="2" fill="#000"/><rect x="1117" y="627" width="2" height="3" fill="#000"/><rect x="1123" y="626" width="3" height="3" fill="#000"/><rect x="1177" y="576" width="2" height="3" fill="#000"/><rect x="1173" y="572" width="2" height="2" fill="#000"/><rect x="1177" y="591" width="3" height="2" fill="#000"/><rect x="1162" y="598" width="3" height="3" fill="#000"/><rect x="1202" y="588" width="3" height="2" fill="#000"/><rect x="1110" y="635" width="3" height="2" fill="#000"/><rect x="1121" y="618" width="2" height="2" fill="#000"/><rect x="1210" y="585" width="3" height="3" fill="#000"/><rect x="1153" y="583" width="2" height="3" fill="#000"/><rect x="1129" y="618" width="2" height="2" fill="#000"/><rect x="1214" y="580" width="3" height="3" fill="#000"/><rect x="1192" y="574" width="2" height="2" fill="#000"/><rect x="1128" y="606" width="3" height="2" fill="#000"/><rect x="1185" y="579" width="3" height="2" fill="#000"/><rect x="1222" y="583" width="2" height="2" fill="#000"/><rect x="1202" y="578" width="2" height="3" fill="#000"/><rect x="1173" y="604" width="2" height="3" fill="#000"/><rect x="1159" y="595" width="2" height="3" fill="#000"/><rect x="1115" y="626" width="3" height="2" fill="#000"/><rect x="1227" y="580" width="3" height="3" fill="#000"/><rect x="1173" y="591" width="3" height="3" fill="#000"/><rect x="1140" y="613" width="3" height="3" fill="#000"/><rect x="1180" y="597" width="2" height="3" fill="#000"/><rect x="1172" y="598" width="2" height="3" fill="#000"/><rect x="1164" y="580" width="2" height="3" fill="#000"/><rect x="1146" y="598" width="2" height="3" fill="#000"/><rect x="1163" y="603" width="2" height="2" fill="#000"/><rect x="1090" y="638" width="3" height="2" fill="#000"/><rect x="1168" y="607" width="2" height="3" fill="#000"/><rect x="1163" y="584" width="3" height="2" fill="#000"/><rect x="1107" y="623" width="3" height="2" fill="#000"/><rect x="1189" y="587" width="2" height="3" fill="#000"/><rect x="1168" y="598" width="2" height="3" fill="#000"/><rect x="444" y="786" width="2" height="2" fill="#0a1e28"/><rect x="479" y="702" width="1" height="2" fill="#06141c"/><rect x="451" y="728" width="1" height="2" fill="#000"/><rect x="472" y="715" width="2" height="1" fill="#06141c"/><rect x="445" y="737" width="1" height="1" fill="#0a1e28"/><rect x="426" y="786" width="2" height="1" fill="#0a1e28"/><rect x="458" y="767" width="2" height="2" fill="#0a1e28"/><rect x="451" y="782" width="2" height="1" fill="#000"/><rect x="444" y="783" width="1" height="2" fill="#06141c"/><rect x="489" y="710" width="1" height="2" fill="#0a1e28"/><rect x="444" y="751" width="2" height="1" fill="#0a1e28"/><rect x="462" y="701" width="2" height="2" fill="#000"/><rect x="435" y="780" width="1" height="1" fill="#06141c"/><rect x="447" y="765" width="1" height="2" fill="#000"/><rect x="468" y="725" width="1" height="1" fill="#000"/><rect x="466" y="729" width="2" height="2" fill="#000"/><rect x="463" y="721" width="2" height="2" fill="#06141c"/><rect x="452" y="700" width="2" height="2" fill="#0a1e28"/><rect x="453" y="732" width="2" height="1" fill="#0a1e28"/><rect x="440" y="725" width="2" height="2" fill="#000"/><rect x="465" y="753" width="2" height="1" fill="#000"/><rect x="448" y="756" width="1" height="1" fill="#000"/><rect x="460" y="751" width="2" height="1" fill="#0a1e28"/><rect x="454" y="718" width="2" height="1" fill="#000"/><rect x="445" y="785" width="2" height="2" fill="#000"/><rect x="448" y="788" width="1" height="1" fill="#000"/><rect x="452" y="732" width="2" height="2" fill="#000"/><rect x="496" y="711" width="2" height="1" fill="#06141c"/><rect x="430" y="763" width="2" height="2" fill="#0a1e28"/><rect x="435" y="718" width="1" height="1" fill="#06141c"/><rect x="451" y="730" width="1" height="1" fill="#0a1e28"/><rect x="433" y="726" width="1" height="1" fill="#000"/><rect x="450" y="742" width="2" height="1" fill="#06141c"/><rect x="462" y="750" width="1" height="2" fill="#06141c"/><rect x="429" y="730" width="2" height="2" fill="#000"/><rect x="444" y="713" width="2" height="1" fill="#0a1e28"/><rect x="445" y="702" width="2" height="2" fill="#000"/><rect x="448" y="766" width="2" height="1" fill="#000"/><rect x="488" y="720" width="2" height="2" fill="#06141c"/><rect x="429" y="771" width="1" height="2" fill="#0a1e28"/><rect x="425" y="787" width="1" height="1" fill="#06141c"/><rect x="439" y="791" width="1" height="2" fill="#0a1e28"/><rect x="474" y="709" width="1" height="2" fill="#000"/><rect x="493" y="706" width="2" height="2" fill="#0a1e28"/><rect x="441" y="750" width="1" height="2" fill="#06141c"/><rect x="426" y="731" width="2" height="2" fill="#0a1e28"/><rect x="427" y="753" width="2" height="1" fill="#06141c"/><rect x="499" y="711" width="1" height="2" fill="#0a1e28"/><rect x="462" y="721" width="1" height="2" fill="#0a1e28"/><rect x="439" y="770" width="1" height="1" fill="#0a1e28"/><rect x="438" y="746" width="1" height="1" fill="#0a1e28"/><rect x="467" y="748" width="1" height="2" fill="#0a1e28"/><rect x="485" y="714" width="2" height="1" fill="#0a1e28"/><rect x="465" y="749" width="1" height="1" fill="#0a1e28"/><rect x="462" y="770" width="2" height="2" fill="#000"/><rect x="486" y="713" width="2" height="2" fill="#0a1e28"/><rect x="425" y="735" width="2" height="2" fill="#0a1e28"/><rect x="428" y="737" width="2" height="1" fill="#000"/><rect x="430" y="747" width="2" height="2" fill="#06141c"/><rect x="499" y="713" width="2" height="2" fill="#000"/><rect x="431" y="779" width="2" height="1" fill="#06141c"/><rect x="488" y="720" width="1" height="1" fill="#0a1e28"/><rect x="450" y="772" width="2" height="2" fill="#0a1e28"/><rect x="431" y="744" width="1" height="1" fill="#0a1e28"/><rect x="447" y="779" width="2" height="2" fill="#0a1e28"/><rect x="471" y="715" width="2" height="2" fill="#06141c"/><rect x="426" y="765" width="1" height="1" fill="#0a1e28"/><rect x="487" y="722" width="2" height="2" fill="#06141c"/><rect x="468" y="705" width="1" height="1" fill="#0a1e28"/><rect x="431" y="786" width="1" height="2" fill="#06141c"/><rect x="459" y="755" width="2" height="1" fill="#000"/><rect x="433" y="771" width="2" height="2" fill="#000"/><rect x="424" y="775" width="2" height="2" fill="#06141c"/><rect x="466" y="708" width="2" height="2" fill="#06141c"/><rect x="431" y="783" width="1" height="2" fill="#06141c"/><rect x="467" y="741" width="2" height="1" fill="#06141c"/><rect x="447" y="760" width="1" height="1" fill="#06141c"/><rect x="429" y="718" width="1" height="1" fill="#06141c"/><rect x="441" y="721" width="2" height="1" fill="#0a1e28"/><rect x="453" y="773" width="1" height="1" fill="#000"/><rect x="442" y="773" width="1" height="2" fill="#06141c"/><rect x="431" y="724" width="1" height="1" fill="#06141c"/><rect x="466" y="760" width="1" height="2" fill="#0a1e28"/><rect x="493" y="719" width="1" height="1" fill="#000"/><rect x="427" y="768" width="2" height="1" fill="#000"/><rect x="477" y="720" width="2" height="2" fill="#0a1e28"/><rect x="438" y="717" width="1" height="1" fill="#0a1e28"/><rect x="455" y="742" width="1" height="2" fill="#0a1e28"/><rect x="451" y="723" width="1" height="1" fill="#0a1e28"/><rect x="468" y="731" width="2" height="1" fill="#0a1e28"/><rect x="431" y="865" width="1" height="2" fill="#06141c"/><rect x="437" y="839" width="1" height="1" fill="#000"/><rect x="426" y="805" width="1" height="2" fill="#000"/><rect x="453" y="858" width="2" height="1" fill="#06141c"/><rect x="442" y="838" width="2" height="2" fill="#06141c"/><rect x="436" y="822" width="1" height="2" fill="#000"/><rect x="433" y="863" width="2" height="2" fill="#000"/><rect x="452" y="857" width="1" height="1" fill="#06141c"/><rect x="431" y="843" width="1" height="2" fill="#000"/><rect x="448" y="820" width="2" height="1" fill="#000"/><rect x="437" y="825" width="2" height="1" fill="#06141c"/><rect x="445" y="852" width="1" height="2" fill="#06141c"/><rect x="431" y="865" width="1" height="2" fill="#06141c"/><rect x="444" y="861" width="1" height="2" fill="#06141c"/><rect x="431" y="828" width="2" height="2" fill="#000"/><rect x="431" y="824" width="2" height="1" fill="#06141c"/><rect x="427" y="827" width="1" height="1" fill="#000"/><rect x="446" y="832" width="1" height="1" fill="#06141c"/><rect x="443" y="812" width="2" height="2" fill="#06141c"/><rect x="429" y="856" width="1" height="1" fill="#06141c"/><rect x="437" y="847" width="1" height="2" fill="#06141c"/><rect x="447" y="817" width="1" height="1" fill="#06141c"/><rect x="444" y="845" width="2" height="2" fill="#000"/><rect x="449" y="832" width="1" height="2" fill="#06141c"/><rect x="432" y="860" width="1" height="2" fill="#000"/><rect x="449" y="813" width="1" height="1" fill="#000"/><rect x="428" y="814" width="1" height="2" fill="#000"/><rect x="441" y="851" width="2" height="1" fill="#000"/><rect x="450" y="851" width="2" height="2" fill="#000"/><rect x="449" y="835" width="1" height="2" fill="#000"/><rect x="427" y="824" width="1" height="1" fill="#000"/><rect x="438" y="803" width="2" height="1" fill="#06141c"/><rect x="437" y="838" width="1" height="2" fill="#06141c"/><rect x="445" y="846" width="1" height="1" fill="#000"/><rect x="445" y="801" width="1" height="1" fill="#000"/><rect x="451" y="832" width="2" height="1" fill="#06141c"/><rect x="424" y="863" width="2" height="2" fill="#000"/><rect x="446" y="851" width="2" height="2" fill="#06141c"/><rect x="436" y="858" width="1" height="2" fill="#06141c"/><rect x="432" y="830" width="1" height="1" fill="#06141c"/><rect x="437" y="845" width="2" height="1" fill="#06141c"/><rect x="441" y="846" width="2" height="1" fill="#000"/><rect x="439" y="835" width="2" height="1" fill="#06141c"/><rect x="437" y="825" width="2" height="2" fill="#000"/><rect x="429" y="863" width="1" height="1" fill="#000"/><rect x="450" y="821" width="2" height="1" fill="#000"/><rect x="430" y="820" width="1" height="1" fill="#000"/><rect x="433" y="851" width="2" height="2" fill="#06141c"/><rect x="436" y="856" width="1" height="1" fill="#06141c"/><rect x="431" y="840" width="1" height="1" fill="#000"/><rect x="442" y="881" width="2" height="2" fill="#0a1e28"/><rect x="426" y="918" width="1" height="1" fill="#06141c"/><rect x="429" y="935" width="1" height="2" fill="#000"/><rect x="428" y="894" width="2" height="1" fill="#000"/><rect x="456" y="931" width="2" height="2" fill="#06141c"/><rect x="432" y="895" width="2" height="2" fill="#0a1e28"/><rect x="436" y="937" width="2" height="2" fill="#0a1e28"/><rect x="438" y="935" width="2" height="2" fill="#0a1e28"/><rect x="429" y="959" width="2" height="2" fill="#000"/><rect x="427" y="904" width="1" height="2" fill="#06141c"/><rect x="445" y="884" width="2" height="2" fill="#06141c"/><rect x="469" y="940" width="1" height="1" fill="#06141c"/><rect x="471" y="894" width="2" height="2" fill="#06141c"/><rect x="439" y="920" width="2" height="2" fill="#06141c"/><rect x="431" y="910" width="2" height="2" fill="#06141c"/><rect x="449" y="942" width="2" height="2" fill="#000"/><rect x="441" y="942" width="1" height="2" fill="#0a1e28"/><rect x="447" y="950" width="1" height="2" fill="#0a1e28"/><rect x="446" y="939" width="1" height="1" fill="#06141c"/><rect x="451" y="899" width="2" height="1" fill="#0a1e28"/><rect x="455" y="886" width="1" height="2" fill="#06141c"/><rect x="456" y="899" width="1" height="2" fill="#0a1e28"/><rect x="425" y="936" width="2" height="2" fill="#000"/><rect x="427" y="953" width="1" height="2" fill="#0a1e28"/><rect x="468" y="929" width="1" height="2" fill="#06141c"/><rect x="435" y="923" width="2" height="2" fill="#0a1e28"/><rect x="432" y="932" width="1" height="1" fill="#000"/><rect x="434" y="887" width="1" height="2" fill="#0a1e28"/><rect x="438" y="928" width="2" height="2" fill="#0a1e28"/><rect x="470" y="916" width="2" height="2" fill="#000"/><rect x="458" y="944" width="2" height="1" fill="#000"/><rect x="441" y="887" width="2" height="2" fill="#0a1e28"/><rect x="444" y="928" width="1" height="1" fill="#000"/><rect x="467" y="923" width="2" height="2" fill="#0a1e28"/><rect x="458" y="896" width="1" height="2" fill="#000"/><rect x="471" y="898" width="1" height="1" fill="#06141c"/><rect x="469" y="898" width="1" height="1" fill="#0a1e28"/><rect x="439" y="883" width="1" height="2" fill="#000"/><rect x="449" y="889" width="2" height="2" fill="#06141c"/><rect x="438" y="919" width="2" height="1" fill="#0a1e28"/><rect x="461" y="941" width="2" height="1" fill="#0a1e28"/><rect x="438" y="917" width="1" height="1" fill="#000"/><rect x="435" y="957" width="2" height="1" fill="#000"/><rect x="436" y="936" width="2" height="2" fill="#06141c"/><rect x="454" y="918" width="2" height="2" fill="#000"/><rect x="451" y="893" width="2" height="2" fill="#0a1e28"/><rect x="469" y="888" width="1" height="2" fill="#000"/><rect x="452" y="892" width="1" height="2" fill="#000"/><rect x="458" y="927" width="1" height="1" fill="#0a1e28"/><rect x="444" y="892" width="1" height="2" fill="#000"/><rect x="427" y="945" width="1" height="2" fill="#000"/><rect x="468" y="916" width="2" height="2" fill="#0a1e28"/><rect x="441" y="943" width="2" height="2" fill="#000"/><rect x="432" y="894" width="2" height="1" fill="#000"/><rect x="460" y="948" width="1" height="2" fill="#06141c"/><rect x="446" y="890" width="1" height="2" fill="#0a1e28"/><rect x="462" y="948" width="2" height="2" fill="#000"/><rect x="468" y="905" width="2" height="1" fill="#000"/><rect x="447" y="881" width="1" height="2" fill="#0a1e28"/><rect x="442" y="896" width="1" height="2" fill="#000"/><rect x="444" y="935" width="1" height="1" fill="#0a1e28"/><rect x="466" y="934" width="1" height="2" fill="#0a1e28"/><rect x="458" y="937" width="2" height="1" fill="#06141c"/><rect x="434" y="884" width="1" height="1" fill="#000"/><rect x="425" y="938" width="1" height="2" fill="#06141c"/><rect x="435" y="907" width="1" height="2" fill="#06141c"/><rect x="444" y="935" width="1" height="2" fill="#000"/><rect x="446" y="892" width="2" height="2" fill="#06141c"/><rect x="437" y="922" width="2" height="2" fill="#000"/><rect x="444" y="924" width="2" height="2" fill="#000"/><rect x="434" y="951" width="1" height="2" fill="#0a1e28"/><rect x="434" y="921" width="2" height="2" fill="#0a1e28"/><rect x="471" y="933" width="2" height="1" fill="#0a1e28"/><rect x="445" y="888" width="2" height="2" fill="#000"/><rect x="430" y="917" width="1" height="2" fill="#0a1e28"/><rect x="464" y="901" width="1" height="2" fill="#000"/><rect x="425" y="914" width="1" height="2" fill="#0a1e28"/><rect x="452" y="949" width="2" height="2" fill="#0a1e28"/><rect x="450" y="950" width="2" height="1" fill="#06141c"/><rect x="454" y="891" width="1" height="1" fill="#000"/><rect x="447" y="933" width="2" height="2" fill="#06141c"/><rect x="477" y="932" width="2" height="1" fill="#000"/><rect x="434" y="922" width="1" height="1" fill="#000"/><rect x="424" y="926" width="1" height="1" fill="#000"/><rect x="426" y="950" width="2" height="1" fill="#000"/><rect x="474" y="932" width="2" height="1" fill="#0a1e28"/><rect x="476" y="927" width="1" height="1" fill="#0a1e28"/><rect x="473" y="931" width="1" height="1" fill="#000"/><rect x="457" y="884" width="1" height="2" fill="#0a1e28"/><rect x="469" y="888" width="2" height="2" fill="#06141c"/><rect x="464" y="893" width="1" height="2" fill="#06141c"/><rect x="473" y="938" width="2" height="2" fill="#0a1e28"/><rect x="426" y="937" width="1" height="1" fill="#06141c"/><rect x="448" y="935" width="1" height="1" fill="#000"/><rect x="445" y="903" width="1" height="2" fill="#06141c"/><rect x="459" y="880" width="2" height="1" fill="#06141c"/><rect x="438" y="932" width="2" height="2" fill="#06141c"/><rect x="464" y="900" width="1" height="1" fill="#06141c"/><rect x="453" y="909" width="1" height="1" fill="#06141c"/><rect x="469" y="898" width="2" height="2" fill="#06141c"/><rect x="465" y="913" width="2" height="1" fill="#06141c"/><rect x="444" y="889" width="1" height="1" fill="#0a1e28"/><rect x="451" y="924" width="1" height="2" fill="#0a1e28"/><rect x="434" y="954" width="1" height="2" fill="#000"/><rect x="454" y="942" width="1" height="1" fill="#000"/><rect x="430" y="909" width="1" height="2" fill="#0a1e28"/><rect x="438" y="921" width="1" height="2" fill="#0a1e28"/><rect x="436" y="907" width="2" height="1" fill="#06141c"/><rect x="472" y="891" width="1" height="2" fill="#000"/><rect x="429" y="924" width="1" height="2" fill="#000"/><rect x="449" y="927" width="2" height="1" fill="#000"/><rect x="443" y="947" width="1" height="2" fill="#0a1e28"/><rect x="462" y="906" width="1" height="1" fill="#000"/><rect x="455" y="906" width="1" height="1" fill="#000"/><rect x="428" y="925" width="2" height="1" fill="#06141c"/><rect x="468" y="900" width="1" height="1" fill="#000"/><rect x="459" y="880" width="1" height="2" fill="#0a1e28"/><rect x="470" y="896" width="1" height="2" fill="#06141c"/><rect x="467" y="914" width="1" height="2" fill="#06141c"/><rect x="445" y="930" width="2" height="2" fill="#06141c"/><rect x="444" y="948" width="2" height="2" fill="#000"/><rect x="437" y="880" width="2" height="2" fill="#0a1e28"/><rect x="435" y="931" width="2" height="2" fill="#0a1e28"/><rect x="465" y="891" width="1" height="2" fill="#0a1e28"/><rect x="433" y="928" width="2" height="2" fill="#06141c"/><rect x="475" y="927" width="2" height="1" fill="#0a1e28"/><rect x="466" y="886" width="2" height="1" fill="#000"/><rect x="464" y="923" width="2" height="2" fill="#000"/><rect x="440" y="943" width="2" height="2" fill="#000"/><rect x="448" y="886" width="2" height="2" fill="#0a1e28"/><rect x="428" y="908" width="2" height="1" fill="#06141c"/><rect x="449" y="928" width="1" height="1" fill="#0a1e28"/><rect x="435" y="943" width="1" height="2" fill="#000"/><rect x="432" y="931" width="2" height="2" fill="#0a1e28"/><rect x="477" y="936" width="1" height="2" fill="#06141c"/><rect x="472" y="939" width="2" height="2" fill="#0a1e28"/><rect x="431" y="905" width="1" height="1" fill="#0a1e28"/><rect x="436" y="935" width="2" height="1" fill="#0a1e28"/><rect x="465" y="934" width="2" height="1" fill="#06141c"/><rect x="461" y="949" width="2" height="1" fill="#000"/><rect x="518" y="874" width="2" height="1" fill="#000"/><rect x="506" y="870" width="1" height="1" fill="#000"/><rect x="514" y="873" width="1" height="2" fill="#000"/><rect x="511" y="881" width="1" height="1" fill="#000"/><rect x="496" y="874" width="1" height="1" fill="#000"/><rect x="487" y="875" width="1" height="2" fill="#000"/><rect x="510" y="871" width="1" height="2" fill="#000"/><rect x="500" y="880" width="2" height="1" fill="#000"/><rect x="483" y="875" width="1" height="1" fill="#000"/><rect x="510" y="872" width="1" height="1" fill="#000"/><rect x="669" y="935" width="2" height="2" fill="#000"/><rect x="547" y="928" width="2" height="1" fill="#06141c"/><rect x="665" y="922" width="1" height="2" fill="#06141c"/><rect x="629" y="928" width="1" height="1" fill="#000"/><rect x="562" y="930" width="1" height="1" fill="#000"/><rect x="587" y="968" width="2" height="2" fill="#000"/><rect x="578" y="952" width="2" height="1" fill="#000"/><rect x="621" y="953" width="2" height="2" fill="#06141c"/><rect x="665" y="962" width="1" height="2" fill="#06141c"/><rect x="626" y="951" width="2" height="1" fill="#000"/><rect x="593" y="952" width="2" height="2" fill="#06141c"/><rect x="604" y="954" width="2" height="2" fill="#000"/><rect x="550" y="961" width="2" height="2" fill="#000"/><rect x="546" y="964" width="2" height="2" fill="#06141c"/><rect x="638" y="955" width="2" height="1" fill="#000"/><rect x="668" y="948" width="1" height="1" fill="#06141c"/><rect x="545" y="946" width="1" height="2" fill="#06141c"/><rect x="615" y="970" width="2" height="2" fill="#000"/><rect x="545" y="942" width="1" height="1" fill="#000"/><rect x="630" y="922" width="1" height="1" fill="#000"/><rect x="586" y="965" width="2" height="2" fill="#000"/><rect x="651" y="946" width="1" height="1" fill="#06141c"/><rect x="614" y="944" width="2" height="1" fill="#06141c"/><rect x="610" y="929" width="2" height="2" fill="#000"/><rect x="568" y="946" width="2" height="1" fill="#000"/><rect x="678" y="958" width="1" height="1" fill="#06141c"/><rect x="579" y="928" width="1" height="2" fill="#06141c"/><rect x="586" y="968" width="1" height="1" fill="#06141c"/><rect x="653" y="926" width="1" height="1" fill="#06141c"/><rect x="584" y="932" width="2" height="1" fill="#000"/><rect x="1313" y="861" width="1" height="1" fill="#06283a"/><rect x="1301" y="888" width="1" height="2" fill="#06283a"/><rect x="1251" y="789" width="1" height="2" fill="#06283a"/><rect x="1315" y="785" width="2" height="2" fill="#0c3448"/><rect x="1277" y="740" width="2" height="1" fill="#06283a"/><rect x="1229" y="714" width="2" height="1" fill="#06283a"/><rect x="1245" y="833" width="2" height="1" fill="#0c3448"/><rect x="1302" y="749" width="2" height="2" fill="#0c3448"/><rect x="1233" y="828" width="2" height="2" fill="#06283a"/><rect x="1281" y="813" width="2" height="2" fill="#06283a"/><rect x="1232" y="899" width="1" height="2" fill="#0c3448"/><rect x="1273" y="874" width="1" height="1" fill="#0c3448"/><rect x="1239" y="783" width="2" height="2" fill="#0c3448"/><rect x="1235" y="703" width="2" height="1" fill="#06283a"/><rect x="1273" y="816" width="1" height="2" fill="#06283a"/><rect x="1317" y="862" width="2" height="2" fill="#06283a"/><rect x="1265" y="744" width="2" height="2" fill="#06283a"/><rect x="1223" y="833" width="1" height="2" fill="#0c3448"/><rect x="1238" y="882" width="2" height="2" fill="#0c3448"/><rect x="1210" y="850" width="1" height="2" fill="#0c3448"/><rect x="1214" y="871" width="1" height="1" fill="#0c3448"/><rect x="1228" y="741" width="1" height="2" fill="#06283a"/><rect x="1298" y="837" width="2" height="2" fill="#0c3448"/><rect x="1221" y="769" width="1" height="2" fill="#06283a"/><rect x="1317" y="842" width="2" height="2" fill="#06283a"/><rect x="1241" y="811" width="1" height="2" fill="#0c3448"/><rect x="1299" y="753" width="1" height="1" fill="#0c3448"/><rect x="1265" y="766" width="1" height="1" fill="#0c3448"/><rect x="1327" y="866" width="2" height="1" fill="#06283a"/><rect x="1321" y="749" width="1" height="2" fill="#06283a"/><rect x="1317" y="892" width="2" height="2" fill="#0c3448"/><rect x="1281" y="815" width="2" height="1" fill="#06283a"/><rect x="1303" y="899" width="1" height="1" fill="#06283a"/><rect x="1305" y="868" width="1" height="1" fill="#06283a"/><rect x="1209" y="731" width="2" height="2" fill="#06283a"/><rect x="1266" y="806" width="2" height="1" fill="#0c3448"/><rect x="1257" y="834" width="2" height="1" fill="#0c3448"/><rect x="1305" y="865" width="1" height="1" fill="#0c3448"/><rect x="1294" y="735" width="1" height="1" fill="#0c3448"/><rect x="1254" y="801" width="1" height="2" fill="#06283a"/><rect x="1299" y="833" width="1" height="2" fill="#06283a"/><rect x="1204" y="791" width="1" height="1" fill="#0c3448"/><rect x="1284" y="776" width="1" height="1" fill="#06283a"/><rect x="1215" y="771" width="1" height="1" fill="#0c3448"/><rect x="1221" y="846" width="2" height="1" fill="#0c3448"/><rect x="1306" y="766" width="1" height="2" fill="#06283a"/><rect x="1209" y="774" width="2" height="2" fill="#06283a"/><rect x="1234" y="751" width="1" height="2" fill="#06283a"/><rect x="1265" y="896" width="2" height="1" fill="#0c3448"/><rect x="1269" y="799" width="2" height="2" fill="#06283a"/><rect x="1239" y="791" width="1" height="2" fill="#06283a"/><rect x="1241" y="888" width="2" height="1" fill="#06283a"/><rect x="1245" y="741" width="2" height="2" fill="#0c3448"/><rect x="1270" y="820" width="1" height="2" fill="#06283a"/><rect x="1288" y="829" width="1" height="2" fill="#0c3448"/><rect x="1307" y="744" width="2" height="1" fill="#06283a"/><rect x="1290" y="888" width="1" height="1" fill="#06283a"/><rect x="1240" y="877" width="1" height="1" fill="#0c3448"/><rect x="1231" y="885" width="1" height="2" fill="#0c3448"/><rect x="1259" y="741" width="2" height="1" fill="#06283a"/><rect x="1263" y="783" width="1" height="2" fill="#06283a"/><rect x="1307" y="831" width="1" height="2" fill="#0c3448"/><rect x="1245" y="694" width="1" height="2" fill="#0c3448"/><rect x="1297" y="854" width="2" height="1" fill="#0c3448"/><rect x="1205" y="826" width="2" height="1" fill="#0c3448"/><rect x="1253" y="786" width="1" height="1" fill="#0c3448"/><rect x="1250" y="819" width="2" height="1" fill="#0c3448"/><rect x="1266" y="751" width="2" height="1" fill="#0c3448"/><rect x="1275" y="696" width="1" height="1" fill="#0c3448"/><rect x="1300" y="723" width="1" height="2" fill="#0c3448"/><rect x="1206" y="790" width="1" height="1" fill="#0c3448"/><rect x="1230" y="769" width="1" height="2" fill="#06283a"/><rect x="1333" y="820" width="1" height="1" fill="#0c3448"/><rect x="1319" y="763" width="2" height="2" fill="#06283a"/><rect x="1289" y="878" width="1" height="1" fill="#06283a"/><rect x="1227" y="878" width="1" height="1" fill="#06283a"/><rect x="1216" y="704" width="1" height="1" fill="#06283a"/><rect x="1267" y="881" width="1" height="2" fill="#06283a"/><rect x="1210" y="802" width="1" height="2" fill="#0c3448"/><rect x="1324" y="896" width="2" height="1" fill="#06283a"/><rect x="938" y="587" width="2" height="3" fill="#000"/><rect x="933" y="599" width="3" height="2" fill="#000"/><rect x="987" y="583" width="3" height="2" fill="#000"/><rect x="973" y="587" width="2" height="3" fill="#000"/><rect x="957" y="591" width="2" height="2" fill="#000"/><rect x="985" y="554" width="2" height="3" fill="#000"/><rect x="999" y="599" width="2" height="3" fill="#000"/><rect x="936" y="551" width="3" height="3" fill="#000"/><rect x="978" y="580" width="2" height="3" fill="#000"/><rect x="975" y="573" width="2" height="2" fill="#000"/><rect x="949" y="578" width="2" height="2" fill="#000"/><rect x="951" y="581" width="2" height="3" fill="#000"/><path d="M1307.7 866 L1309 900 A94 74 0 0 0 1496 903 L1496.5 866 Z" fill="url(#gblue)"/><ellipse cx="1402.5" cy="901" rx="93.5" ry="73" fill="url(#gblue)"/><ellipse cx="1402" cy="862" rx="94.5" ry="75" fill="#2b2b2b"/><polygon points="1336.6,827.7 1363.5,793.1 1407.8,791.2 1448.2,804.6 1465.5,825.8 1490.6,854.7 1507.9,870.1 1504.0,885.5 1396.2,912.4 1359.7,885.5 1336.6,833.5" fill="#1f1f1f" /><polygon points="1355.0,800.0 1400.0,795.0 1445.0,808.0 1462.0,828.0 1400.0,843.0 1352.0,852.0" fill="#252525" /><path d="M1352 853 L1466 826" fill="none" stroke="#3a3a3a" stroke-width="2"/><path d="M1392 895 L1400 914 L1504 885 L1507 870" fill="none" stroke="#505050" stroke-width="2.5"/><path d="M1335 848 L1363 895" fill="none" stroke="#141414" stroke-width="5"/><circle cx="1333.5" cy="874" r="6.5" fill="#c81010"/><polygon points="1405.0,440.0 1436.0,454.0 1425.0,520.0 1405.0,540.0" fill="#161612" /><rect x="1413" y="537" width="2" height="2" fill="#0a5a84"/><rect x="1403" y="547" width="2" height="2" fill="#0a5a84"/><rect x="1405" y="536" width="2" height="2" fill="#0a5a84"/><rect x="1426" y="505" width="2" height="3" fill="#0a5a84"/><rect x="1420" y="512" width="3" height="3" fill="#0a5a84"/><rect x="1403" y="517" width="2" height="2" fill="#0a5a84"/><rect x="1405" y="484" width="2" height="3" fill="#0a5a84"/><rect x="1424" y="499" width="3" height="3" fill="#0a5a84"/><rect x="1409" y="548" width="2" height="3" fill="#0a5a84"/><rect x="1419" y="496" width="3" height="2" fill="#0a5a84"/><rect x="1409" y="541" width="3" height="2" fill="#0a5a84"/><rect x="1410" y="508" width="2" height="2" fill="#0a5a84"/><rect x="1403" y="498" width="2" height="3" fill="#0a5a84"/><rect x="1396" y="552" width="3" height="3" fill="#0a5a84"/><rect x="1404" y="525" width="2" height="2" fill="#0a5a84"/><rect x="1413" y="541" width="3" height="2" fill="#0a5a84"/><rect x="1412" y="499" width="2" height="3" fill="#0a5a84"/><rect x="1400" y="528" width="2" height="3" fill="#0a5a84"/><rect x="1411" y="542" width="2" height="3" fill="#0a5a84"/><rect x="1418" y="490" width="2" height="3" fill="#0a5a84"/><rect x="1405" y="487" width="2" height="2" fill="#0a5a84"/><rect x="1402" y="549" width="3" height="3" fill="#0a5a84"/><rect x="1407" y="480" width="2" height="3" fill="#0a5a84"/><rect x="1403" y="517" width="3" height="2" fill="#0a5a84"/><rect x="1424" y="500" width="3" height="2" fill="#0a5a84"/><rect x="1405" y="486" width="2" height="3" fill="#0a5a84"/><rect x="1409" y="496" width="3" height="2" fill="#0a5a84"/><rect x="1412" y="497" width="2" height="3" fill="#0a5a84"/><rect x="1417" y="525" width="2" height="2" fill="#0a5a84"/><rect x="1419" y="501" width="3" height="2" fill="#0a5a84"/><polygon points="1408.0,440.0 1420.0,440.0 1396.0,596.0 1390.0,596.0" fill="#2a2a2a" /><polygon points="1436.7,454.0 1470.0,454.0 1408.6,805.0 1382.3,805.0" fill="#262626" /><polygon points="1450.0,454.0 1470.0,454.0 1408.6,805.0 1396.0,805.0" fill="#1e1e1e" /><path d="M1438.5 456 L1385 805" fill="none" stroke="#16166e" stroke-width="3.5"/><path d="M1361.5 686.6 L1393.7 683 L1429.5 722.3 L1425.9 749.2 L1393.7 751 L1361.5 693.7 Z" fill="#2e2e2e" /><polygon points="1372.0,697.0 1390.0,693.0 1410.0,722.0 1398.0,740.0" fill="#0a4f76" /><path d="M1363 686 L1393 683" fill="none" stroke="#ddd" stroke-width="2"/><rect x="1396.5" y="428" width="11.5" height="482" fill="#1f1f1f"/><rect x="1483.5" y="417" width="11" height="471" fill="#1f1f1f"/><rect x="1395.5" y="431" width="13" height="11" fill="#c8c8c8"/><rect x="1395.5" y="499" width="13" height="11" fill="#c8c8c8"/><rect x="1395.5" y="635" width="13" height="11" fill="#c8c8c8"/><rect x="1395.5" y="766" width="13" height="11" fill="#c8c8c8"/><rect x="1482.5" y="419" width="13" height="11" fill="#c8c8c8"/><rect x="1482.5" y="485" width="13" height="11" fill="#c8c8c8"/><rect x="1482.5" y="619" width="13" height="11" fill="#c8c8c8"/><rect x="1482.5" y="746" width="13" height="11" fill="#c8c8c8"/><path d="M1413.6 431.4 L1468.8 426.2 L1470 445.5 L1462.4 451.9 L1412.3 448 L1408.5 441.6 Z M1423 438 L1462 434 L1458 444 L1425 445 Z" fill="#333333" fill-rule="evenodd"/><polygon points="1382.8,383.9 1515.0,374.9 1509.9,396.7 1499.6,401.8 1498.3,414.7 1395.7,430.1 1393.1,413.4 1382.8,407.0" fill="#4a4a4a" /><polygon points="1394.0,392.0 1500.0,384.0 1496.0,398.0 1397.0,410.0" fill="#2a2a28" /><polygon points="1397.0,413.0 1496.0,402.0 1495.0,410.0 1398.0,423.0" fill="#6a6656" /><polygon points="1384.1,363.4 1511.1,349.2 1517.5,360.8 1515.0,373.6 1400.8,390.3 1384.1,381.3" fill="#2a2a2a" /><path d="M1386 364 L1511 350 L1517 360" fill="none" stroke="#5a5a5a" stroke-width="2"/><polygon points="1440.0,364.0 1472.0,361.0 1473.0,384.0 1441.0,386.0" fill="#1e1e1e" /><polygon points="1284.4,479.0 1343.0,498.1 1335.7,509.9 1306.4,496.7 1284.4,489.3" fill="#858585" /><polygon points="1366.5,467.3 1373.8,470.3 1371.0,493.7 1365.0,493.7" fill="#7a7a7a" /><polygon points="1341.6,501.0 1368.0,495.2 1391.4,524.5 1416.4,550.9 1415.0,558.2 1397.3,562.6 1369.4,550.9 1343.0,509.9" fill="#3a3a3a" /><polygon points="1353.0,509.0 1380.0,503.0 1390.0,524.0 1371.0,530.0" fill="#4a4a4a" /><polygon points="1391.0,562.0 1400.0,562.0 1400.0,596.0 1391.0,596.0" fill="#2e2e2e" /><polygon points="1343.0,499.6 1368.0,495.2 1373.8,504.0 1351.8,509.9" fill="#1010a0" /><path d="M1103.2 417.8 L1375.4 383.2 M1106.9 429 L1385 395 M1103.2 417.8 L1178.7 545.3 M1106.9 429 L1178.7 555.2 M1178.7 545.3 L1397 512 M1409 510 L1482 499 M1494 497 L1520 492 M1178.7 555.2 L1397 522 M1409 520 L1482 508 M1494 506 L1516 500 M1418.5 391.8 L1482 454 M1494 466 L1520 492 M1103.2 417.8 L1106.9 429 M1178.7 545.3 L1178.7 555.2 M1520 492 L1516 500" fill="none" stroke="#22ee22" stroke-width="2" fill="none"/><path d="M1262.8 403 L1287.5 399.3 L1306.1 419.1 L1281.3 422.8 Z M1260.3 433.9 L1280.1 453.7 L1303.6 450 M1262.8 403 L1260.3 433.9 M1281.3 422.8 L1280.1 453.7 M1306.1 419.1 L1303.6 450" fill="none" stroke="#22ee22" stroke-width="2" fill="none"/><path d="M1387.2 328.8 L1407.4 325.8 M1387.2 328.8 L1380.7 376.7 L1383.2 380.7 M1407.4 325.8 L1404.9 342.4 M1387.2 328.8 L1423.5 356.5 M1407.4 325.8 L1444.7 353.5 M1417.5 392.8 L1418 400" fill="none" stroke="#22ee22" stroke-width="2" fill="none"/><text x="1245" y="391" font-family="Liberation Sans" font-size="24" letter-spacing="1" fill="#e020e0">obj_0</text><text x="1370" y="319" font-family="Liberation Sans" font-size="24" letter-spacing="1" fill="#e020e0">obj_1</text></g>
</svg>
</div>
<div class="a" style="left:1824px;top:75px;width:14px;height:904px;border:1px solid #b0aca6;border-radius:7px;background:linear-gradient(90deg,#f6f5f4,#e6e4e1)"></div>
<div id="timehdr" class="a">
  <svg class="a" style="left:4px;top:6px" width="16" height="16" viewBox="0 0 16 16"><circle cx="8" cy="8" r="6.6" fill="#fff" stroke="#333" stroke-width="1.6"/><path d="M7.5 4 V8.6 H11" stroke="#222" stroke-width="1.5" fill="none"/></svg>
  <div class="a" style="left:27px;top:1px;font-size:18px;line-height:24px;color:#3c3c3c">Time</div>
  <div class="a" style="left:1822px;top:6px;width:13px;height:15px;background:#fff;border:1px solid #b7b2aa;border-radius:4px"><svg width="11" height="13" style="position:absolute;left:0;top:0"><path d="M3 4 L8 9 M8 4 L3 9" stroke="#555" stroke-width="2"/></svg></div>
</div>
<div class="lab" style="left:11px">ROS Time:</div>
<div class="inp" style="left:104px;width:161px">1522206472.03</div>
<div class="lab" style="left:272px">ROS Elapsed:</div>
<div class="inp" style="left:389px;width:161px">231.34</div>
<div class="lab" style="left:557px">Wall Time:</div>
<div class="inp" style="left:650px;width:161px">1522206472.06</div>
<div class="lab" style="left:818px">Wall Elapsed:</div>
<div class="inp" style="left:935px;width:161px">231.34</div>
<div class="a" style="left:1689px;top:1027px;width:13px;height:13px;border:1px solid #8f8b85;border-radius:2px;background:#fff"></div>
<div class="lab" style="left:1711px;letter-spacing:0.45px">Experimental</div>
<div class="a" style="left:0;top:1056px;width:1839px;height:1px;background:#d8d5d0"></div>
<div class="btn" style="left:3px;top:1060px;width:62px;height:28px;line-height:26px">Reset</div>
<div id="status" class="a"><b>Left-Click:</b> Rotate. <b>Middle-Click:</b> Move X/Y. <b>Right-Click/Mouse Wheel:</b>: Zoom. <b>Shift</b>: More options.</div>
<div class="a" style="left:1764px;top:1058px;font-size:18px;line-height:24px;color:#3c3c3c">27 fps</div>
<svg class="a" style="left:1826px;top:1078px" width="12" height="12"><g fill="#c8c5c0"><rect x="9" y="1" width="2" height="2"/><rect x="6" y="4" width="2" height="2"/><rect x="9" y="4" width="2" height="2"/><rect x="3" y="7" width="2" height="2"/><rect x="6" y="7" width="2" height="2"/><rect x="9" y="7" width="2" height="2"/></g></svg>
</body></html>
